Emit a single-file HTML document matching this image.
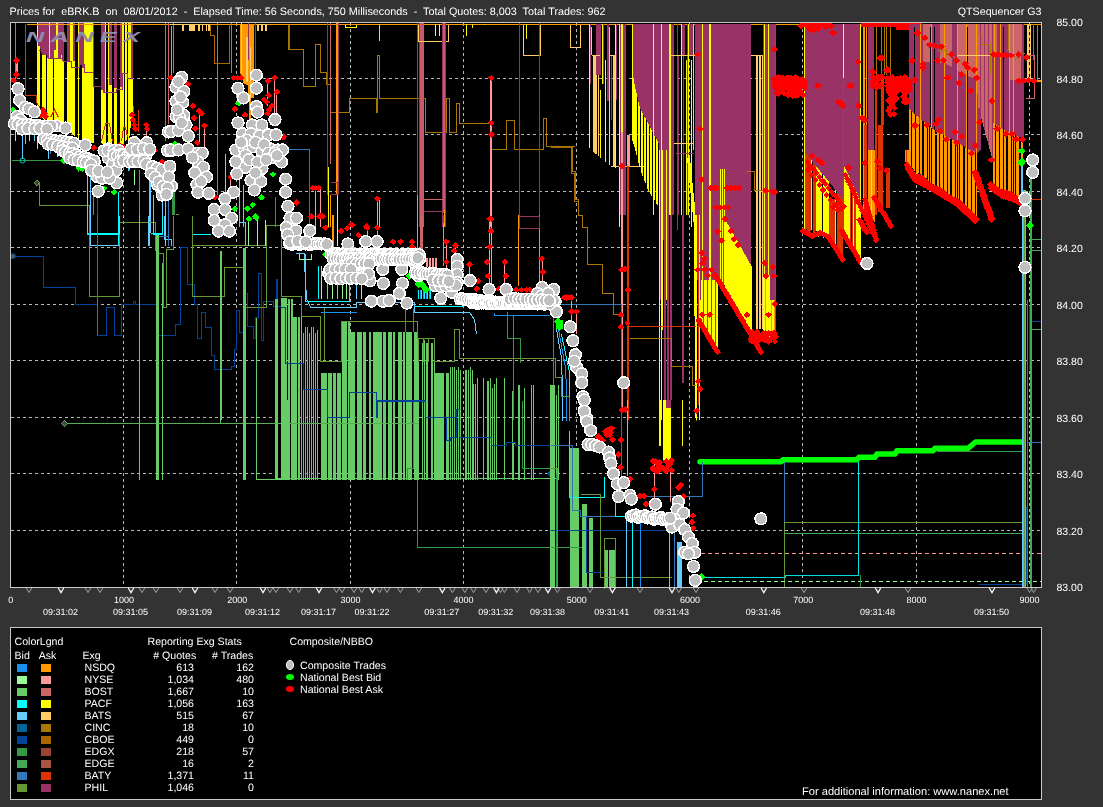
<!DOCTYPE html>
<html><head><meta charset="utf-8"><title>QTSequencer G3</title>
<style>
html,body{margin:0;padding:0;background:#333333;}
body{width:1103px;height:807px;overflow:hidden;position:relative;font-family:"Liberation Sans",sans-serif;}
svg{position:absolute;left:0;top:0;display:block}
text{font-family:"Liberation Sans",sans-serif;font-size:10.6px;fill:#ffffff;}
.xs text{font-size:9px}
.ys text{font-size:10.5px}
.t12{font-size:12px}
</style></head><body>
<svg width="1103" height="807" viewBox="0 0 1103 807" shape-rendering="crispEdges" text-rendering="geometricPrecision">
<rect x="0" y="0" width="1103" height="807" fill="#333333"/>
<rect x="10" y="22" width="1032" height="566" fill="#000000"/>
<rect x="10" y="627" width="1032" height="173" fill="#000000"/>
<g stroke="#b8b8b8" stroke-width="1" stroke-dasharray="3,3" fill="none">
<line x1="11" y1="78.5" x2="1041" y2="78.5"/>
<line x1="11" y1="134.5" x2="1041" y2="134.5"/>
<line x1="11" y1="191.5" x2="1041" y2="191.5"/>
<line x1="11" y1="247.5" x2="1041" y2="247.5"/>
<line x1="11" y1="304.5" x2="1041" y2="304.5"/>
<line x1="11" y1="360.5" x2="1041" y2="360.5"/>
<line x1="11" y1="417.5" x2="1041" y2="417.5"/>
<line x1="11" y1="473.5" x2="1041" y2="473.5"/>
<line x1="11" y1="530.5" x2="1041" y2="530.5"/>
<line x1="123.5" y1="23" x2="123.5" y2="587"/>
<line x1="236.5" y1="23" x2="236.5" y2="587"/>
<line x1="350.5" y1="23" x2="350.5" y2="587"/>
<line x1="463.5" y1="23" x2="463.5" y2="587"/>
<line x1="576.5" y1="23" x2="576.5" y2="587"/>
<line x1="689.5" y1="23" x2="689.5" y2="587"/>
<line x1="802.5" y1="23" x2="802.5" y2="587"/>
<line x1="916.5" y1="23" x2="916.5" y2="587"/>
<line x1="1029.5" y1="23" x2="1029.5" y2="587"/>
</g>

<rect x="37" y="23" width="1" height="88.8" fill="#ffff00"/>
<rect x="38" y="23" width="1" height="22.6" fill="#993366"/>
<rect x="38" y="45.6" width="1" height="67.9" fill="#ffff00"/>
<rect x="39" y="23" width="1" height="22.6" fill="#993366"/>
<rect x="39" y="45.6" width="1" height="68.9" fill="#ffff00"/>
<rect x="40" y="23" width="1" height="26.3" fill="#993366"/>
<rect x="41" y="23" width="1" height="30.1" fill="#993366"/>
<rect x="42" y="23" width="1" height="94.5" fill="#ffff00"/>
<rect x="42" y="23" width="1" height="30.1" fill="#993366"/>
<rect x="43" y="23" width="1" height="30.6" fill="#993366"/>
<rect x="43" y="53.6" width="1" height="64.9" fill="#ffff00"/>
<rect x="44" y="23" width="1" height="31.1" fill="#993366"/>
<rect x="44" y="54.1" width="1" height="65.4" fill="#ffff00"/>
<rect x="45" y="23" width="1" height="31.1" fill="#993366"/>
<rect x="45" y="54.1" width="1" height="66.1" fill="#ffff00"/>
<rect x="46" y="23" width="1" height="31.5" fill="#993366"/>
<rect x="47" y="23" width="1" height="34.8" fill="#993366"/>
<rect x="47" y="57.8" width="1" height="63.2" fill="#ffff00"/>
<rect x="48" y="23" width="1" height="34.8" fill="#993366"/>
<rect x="48" y="57.8" width="1" height="63.6" fill="#ffff00"/>
<rect x="49" y="23" width="1" height="98.8" fill="#ffff00"/>
<rect x="50" y="23" width="1" height="35.3" fill="#993366"/>
<rect x="50" y="58.3" width="1" height="63.9" fill="#ffff00"/>
<rect x="51" y="23" width="1" height="35.3" fill="#993366"/>
<rect x="51" y="58.3" width="1" height="64.3" fill="#ffff00"/>
<rect x="52" y="23" width="1" height="35.3" fill="#993366"/>
<rect x="52" y="58.3" width="1" height="64.7" fill="#ffff00"/>
<rect x="53" y="23" width="1" height="35.3" fill="#993366"/>
<rect x="54" y="23" width="1" height="27.3" fill="#993366"/>
<rect x="54" y="50.3" width="1" height="73.5" fill="#ffff00"/>
<rect x="55" y="23" width="1" height="27.3" fill="#993366"/>
<rect x="55" y="50.3" width="1" height="73.9" fill="#ffff00"/>
<rect x="56" y="23" width="1" height="101.4" fill="#ffff00"/>
<rect x="57" y="23" width="1" height="101.7" fill="#ffff00"/>
<rect x="58" y="23" width="1" height="35.3" fill="#993366"/>
<rect x="58" y="58.3" width="1" height="66.7" fill="#ffff00"/>
<rect x="59" y="23" width="1" height="35.3" fill="#993366"/>
<rect x="59" y="58.3" width="1" height="66.9" fill="#ffff00"/>
<rect x="60" y="23" width="1" height="35.3" fill="#993366"/>
<rect x="60" y="58.3" width="1" height="67.2" fill="#ffff00"/>
<rect x="61" y="23" width="1" height="32" fill="#993366"/>
<rect x="61" y="55" width="1" height="70.8" fill="#ffff00"/>
<rect x="62" y="23" width="1" height="38.1" fill="#993366"/>
<rect x="62" y="61.1" width="1" height="64.9" fill="#ffff00"/>
<rect x="63" y="23" width="1" height="38.1" fill="#993366"/>
<rect x="63" y="61.1" width="1" height="65.2" fill="#ffff00"/>
<rect x="67" y="23" width="1" height="38.1" fill="#993366"/>
<rect x="67" y="61.1" width="1" height="67.4" fill="#ffff00"/>
<rect x="68" y="23" width="1" height="38.1" fill="#993366"/>
<rect x="68" y="61.1" width="1" height="68.4" fill="#ffff00"/>
<rect x="69" y="23" width="1" height="38.1" fill="#993366"/>
<rect x="69" y="61.1" width="1" height="69.4" fill="#ffff00"/>
<rect x="70" y="23" width="1" height="108.5" fill="#ffff00"/>
<rect x="71" y="23" width="1" height="109.5" fill="#ffff00"/>
<rect x="72" y="23" width="1" height="110.5" fill="#ffff00"/>
<rect x="73" y="23" width="1" height="38.1" fill="#993366"/>
<rect x="73" y="61.1" width="1" height="73.4" fill="#ffff00"/>
<rect x="74" y="23" width="1" height="38.1" fill="#993366"/>
<rect x="74" y="61.1" width="1" height="74.4" fill="#ffff00"/>
<rect x="78" y="23" width="1" height="115.2" fill="#ffff00"/>
<rect x="79" y="23" width="1" height="41.4" fill="#993366"/>
<rect x="80" y="23" width="1" height="41.4" fill="#993366"/>
<rect x="81" y="23" width="1" height="41.4" fill="#993366"/>
<rect x="82" y="23" width="1" height="45.2" fill="#993366"/>
<rect x="82" y="68.2" width="1" height="72.6" fill="#ffff00"/>
<rect x="83" y="23" width="1" height="45.2" fill="#993366"/>
<rect x="83" y="68.2" width="1" height="73.2" fill="#ffff00"/>
<rect x="84" y="23" width="1" height="119" fill="#ffff00"/>
<rect x="85" y="23" width="1" height="119.7" fill="#ffff00"/>
<rect x="86" y="23" width="1" height="120" fill="#ffff00"/>
<rect x="87" y="23" width="1" height="120" fill="#ffff00"/>
<rect x="88" y="23" width="1" height="120" fill="#ffff00"/>
<rect x="89" y="23" width="1" height="120" fill="#ffff00"/>
<rect x="90" y="23" width="1" height="120" fill="#ffff00"/>
<rect x="91" y="23" width="1" height="120" fill="#ffcc88"/>
<rect x="92" y="23" width="1" height="120" fill="#ffff00"/>
<rect x="93" y="23" width="1" height="63.1" fill="#993366"/>
<rect x="93" y="86.1" width="1" height="56.9" fill="#ffff00"/>
<rect x="101" y="23" width="1" height="66.9" fill="#993366"/>
<rect x="101" y="89.9" width="1" height="53.4" fill="#ffff00"/>
<rect x="102" y="23" width="1" height="66.9" fill="#993366"/>
<rect x="102" y="89.9" width="1" height="53.6" fill="#ffff00"/>
<rect x="103" y="23" width="1" height="69.7" fill="#993366"/>
<rect x="103" y="92.7" width="1" height="51" fill="#ffff00"/>
<rect x="104" y="23" width="1" height="69.7" fill="#993366"/>
<rect x="104" y="92.7" width="1" height="51.2" fill="#ffff00"/>
<rect x="105" y="23" width="1" height="121.1" fill="#ffff00"/>
<rect x="108" y="23" width="1" height="121.7" fill="#ffff00"/>
<rect x="109" y="23" width="1" height="62.2" fill="#993366"/>
<rect x="109" y="85.2" width="1" height="59.7" fill="#ffff00"/>
<rect x="110" y="23" width="1" height="62.2" fill="#993366"/>
<rect x="110" y="85.2" width="1" height="59.8" fill="#ffff00"/>
<rect x="111" y="23" width="1" height="62.2" fill="#993366"/>
<rect x="111" y="85.2" width="1" height="59.8" fill="#ffff00"/>
<rect x="114" y="23" width="1" height="65" fill="#993366"/>
<rect x="114" y="88" width="1" height="57" fill="#ffff00"/>
<rect x="115" y="23" width="1" height="65" fill="#993366"/>
<rect x="115" y="88" width="1" height="57" fill="#ffff00"/>
<rect x="116" y="23" width="1" height="65" fill="#993366"/>
<rect x="116" y="88" width="1" height="57" fill="#ffff00"/>
<rect x="120" y="23" width="1" height="64.1" fill="#993366"/>
<rect x="120" y="87.1" width="1" height="57.9" fill="#ffff00"/>
<rect x="121" y="23" width="1" height="64.1" fill="#993366"/>
<rect x="121" y="87.1" width="1" height="57.5" fill="#ffff00"/>
<rect x="122" y="23" width="1" height="120.8" fill="#ffff00"/>
<rect x="123" y="23" width="1" height="119.9" fill="#ffff00"/>
<rect x="125" y="23" width="1" height="118.2" fill="#ffff00"/>
<rect x="126" y="23" width="1" height="117.4" fill="#ffff00"/>
<rect x="128" y="23" width="1" height="117" fill="#ffff00"/>
<rect x="129" y="23" width="1" height="113" fill="#ffff00"/>
<rect x="130" y="23" width="1" height="105" fill="#ffff00"/>
<rect x="131" y="23" width="1" height="55.6" fill="#993366"/>
<rect x="131" y="78.6" width="1" height="41.4" fill="#ffff00"/>
<rect x="132" y="23" width="1" height="55.6" fill="#993366"/>
<rect x="132" y="78.6" width="1" height="33.4" fill="#ffff00"/>
<polyline points="38.5,50.5 42.5,50.5 42.5,54.5 48.5,54.5 48.5,58.5 58.5,58.5 58.5,58.5 63.5,58.5 63.5,61.5 71.5,61.5 71.5,67.5 79.5,67.5 79.5,64.5 84.5,64.5 84.5,72.5 93.5,72.5 93.5,86.5 103.5,86.5 103.5,92.5 116.5,92.5 116.5,89.5 122.5,89.5 122.5,73.5 127.5,73.5 127.5,78.5 132.5,78.5 132.5,78.5" fill="none" stroke="#993366" stroke-width="1"/>
<g transform="translate(26,41.5) scale(1.75,1)" shape-rendering="auto"><text x="0" y="0" style="font-size:14.5px;font-style:italic;font-weight:bold;fill:#8c8cae;letter-spacing:3.6px">NANEX</text></g>
<rect x="27" y="24" width="1014" height="1" fill="#ff9900"/>
<rect x="15" y="23" width="1" height="61" fill="#cc6666"/>
<rect x="165" y="23" width="1" height="118.4" fill="#cc6666"/>
<rect x="168" y="23" width="1" height="100.6" fill="#cc6666"/>
<rect x="173" y="23" width="1" height="49.8" fill="#cc6666"/>
<rect x="217" y="23" width="1" height="171.8" fill="#cc6666"/>
<rect x="231" y="23" width="1" height="49.8" fill="#cc6666"/>
<polyline points="25.5,23.5 25.5,95.5 36.5,95.5 36.5,102.5 40.5,108.5" fill="none" stroke="#dd3300" stroke-width="1"/>
<polyline points="101.5,141.5 105.5,123.5 109.5,123.5 112.5,141.5" fill="none" stroke="#dd3300" stroke-width="1"/>
<polyline points="121.5,141.5 123.5,127.5 125.5,127.5 127.5,137.5" fill="none" stroke="#dd3300" stroke-width="1"/>
<polyline points="50.5,117.5 54.5,109.5 58.5,117.5" fill="none" stroke="#dd3300" stroke-width="1"/>
<polyline points="133.5,105.5 133.5,128.5" fill="none" stroke="#dd3300" stroke-width="1"/>
<polyline points="138.5,109.5 138.5,131.5" fill="none" stroke="#dd3300" stroke-width="1"/>
<rect x="16" y="61" width="2" height="14" fill="#ff9999"/>
<polyline points="210.5,24.5 210.5,35.5 214.5,35.5 214.5,63.5 229.5,63.5 229.5,24.5" fill="none" stroke="#aa6600" stroke-width="1"/>
<polyline points="289.5,24.5 289.5,49.5" fill="none" stroke="#aa6600" stroke-width="1"/>
<rect x="170.4" y="24" width="39.4" height="1" fill="#ffcc66"/>
<rect x="182" y="24" width="2" height="6.8" fill="#ffcc66"/>
<rect x="185.6" y="24" width="0.8" height="6.8" fill="#ffcc66"/>
<rect x="189.4" y="24" width="5.4" height="6.8" fill="#ffcc66"/>
<rect x="198.3" y="24" width="1.6" height="6.8" fill="#ffcc66"/>
<rect x="202.4" y="24" width="1" height="6.8" fill="#ffcc66"/>
<rect x="205.8" y="24" width="1.4" height="6.8" fill="#ffcc66"/>
<rect x="208.2" y="24" width="1.6" height="6.8" fill="#ffcc66"/>
<rect x="257.4" y="24" width="1.6" height="6.8" fill="#ffcc66"/>
<rect x="260.8" y="24" width="2.3" height="6.8" fill="#ffcc66"/>
<rect x="264.9" y="24" width="2" height="6.8" fill="#ffcc66"/>
<rect x="257.4" y="24" width="9.5" height="1" fill="#ffcc66"/>
<rect x="171" y="26" width="1" height="58" fill="#ff9900"/>
<polygon points="239.9,24 253.9,24 253.9,98.2 251.4,98.2 251.4,118.5 248.8,118.5 248.8,98.2 247.6,85.5 243.7,83 239.9,72.8" fill="#ff9900"/>
<rect x="241" y="23" width="1" height="49.8" fill="#ffcc66"/>
<rect x="246" y="37.2" width="2" height="44.5" fill="#ffcc66"/>
<rect x="250" y="47.4" width="1" height="50.8" fill="#ffcc66"/>
<rect x="255" y="23" width="1" height="47.3" fill="#993366"/>
<rect x="248" y="23" width="1" height="37.1" fill="#993366"/>
<rect x="15" y="126.2" width="1" height="15.2" fill="#98fb98"/>
<rect x="22" y="131.2" width="1" height="27.9" fill="#66ccff"/>
<rect x="25" y="133.8" width="1" height="10.2" fill="#00ffff"/>
<rect x="29" y="133.8" width="1" height="7.6" fill="#98fb98"/>
<rect x="34" y="133.8" width="1" height="7.6" fill="#66ccff"/>
<rect x="37" y="136.3" width="1" height="12.7" fill="#98fb98"/>
<rect x="48" y="144" width="1" height="15.2" fill="#66ccff"/>
<rect x="50" y="149" width="1" height="5.1" fill="#3377bb"/>
<rect x="57" y="149" width="1" height="7.6" fill="#98fb98"/>
<rect x="64" y="159.2" width="1" height="5.1" fill="#339944"/>
<rect x="78" y="166.8" width="1" height="5.1" fill="#44aa55"/>
<rect x="82" y="168.1" width="1" height="3.8" fill="#339944"/>
<polyline points="11.5,160.5 60.5,160.5" fill="none" stroke="#339944" stroke-width="1"/>
<circle cx="22.5" cy="160.5" r="2.5" fill="none" stroke="#00cccc" shape-rendering="auto"/>
<path d="M34.0 182.8l3 -3l3 3l-3 3z" fill="#444" stroke="#669933" stroke-width="1"/>
<polyline points="37.5,183.5 39.5,183.5 39.5,205.5 89.5,205.5 89.5,250.5" fill="none" stroke="#669933" stroke-width="1"/>
<polyline points="87.5,166.5 87.5,233.5 118.5,233.5 118.5,191.5" fill="none" stroke="#00ffff" stroke-width="1"/>
<rect x="118" y="233.2" width="1" height="12.3" fill="#00ffff"/>
<polyline points="90.5,173.5 90.5,245.5 118.5,245.5" fill="none" stroke="#66ccff" stroke-width="1"/>
<rect x="93" y="196.2" width="1" height="18.8" fill="#44aa55"/>
<rect x="97" y="196.2" width="1" height="18.8" fill="#006699"/>
<polyline points="119.5,250.5 119.5,222.5 155.5,222.5 155.5,250.5" fill="none" stroke="#669933" stroke-width="1"/>
<rect x="139" y="170" width="1" height="45" fill="#44aa55"/>
<rect x="134" y="170" width="1" height="15.4" fill="#98fb98"/>
<rect x="149" y="174.7" width="1" height="70.9" fill="#00ffff"/>
<rect x="150" y="180.8" width="1" height="52.4" fill="#66ccff"/>
<rect x="153" y="194.7" width="1" height="38.5" fill="#00ffff"/>
<rect x="162" y="200.9" width="1" height="32.4" fill="#66ccff"/>
<rect x="165" y="200.9" width="1" height="44.7" fill="#00ffff"/>
<rect x="168" y="200.9" width="1" height="44.7" fill="#3377bb"/>
<polyline points="150.5,233.5 162.5,233.5" fill="none" stroke="#00ffff" stroke-width="1"/>
<polyline points="155.5,236.5 168.5,236.5" fill="none" stroke="#66ccff" stroke-width="1"/>
<rect x="172.1" y="191.6" width="3.1" height="23.4" fill="#339944"/>
<polyline points="175.5,214.5 178.5,214.5" fill="none" stroke="#669933" stroke-width="1"/>
<rect x="78" y="166.2" width="1" height="4.6" fill="#66cc66"/>
<rect x="80" y="166.2" width="1" height="4.6" fill="#66cc66"/>
<rect x="85" y="166.2" width="1" height="4.6" fill="#98fb98"/>
<rect x="129" y="166.2" width="1" height="4.6" fill="#3377bb"/>
<rect x="128" y="166.2" width="1" height="4.6" fill="#66ccff"/>
<rect x="239" y="179.5" width="1" height="47.5" fill="#66ccff"/>
<rect x="243" y="184.6" width="1" height="42.4" fill="#00ffff"/>
<rect x="275" y="197.3" width="1" height="29.7" fill="#339944"/>
<rect x="146" y="124.9" width="1" height="16.5" fill="#ff9999"/>
<rect x="267" y="80.9" width="1" height="24.9" fill="#ff9999"/>
<rect x="274" y="77.9" width="1" height="40.7" fill="#ff9999"/>
<rect x="276" y="91.9" width="1" height="26.7" fill="#ff9999"/>
<rect x="199" y="113.5" width="1" height="30.5" fill="#ff9999"/>
<rect x="204" y="125.7" width="1" height="23.4" fill="#ff9999"/>
<rect x="225" y="154.1" width="1" height="45.7" fill="#ff9999"/>
<rect x="230" y="177" width="1" height="22.9" fill="#ff9999"/>
<polyline points="288.5,24.5 288.5,49.5 303.5,49.5 303.5,86.5 315.5,86.5 315.5,44.5 320.5,44.5 320.5,72.5 326.5,72.5 326.5,84.5 330.5,84.5 330.5,112.5 349.5,112.5 349.5,98.5 376.5,98.5 376.5,112.5 377.5,112.5 377.5,55.5 379.5,55.5 379.5,98.5 425.5,98.5 425.5,132.5 446.5,132.5 446.5,98.5 449.5,98.5 449.5,132.5 456.5,132.5 456.5,103.5 459.5,103.5 459.5,123.5 490.5,123.5 490.5,149.5 506.5,149.5 506.5,120.5 514.5,120.5 514.5,149.5 543.5,149.5 543.5,118.5 546.5,118.5 546.5,146.5 574.5,146.5" fill="none" stroke="#aa7700" stroke-width="1"/>
<rect x="327" y="23" width="1" height="171.8" fill="#993366"/>
<rect x="330" y="23" width="1" height="141.3" fill="#cc6666"/>
<rect x="336" y="23" width="2" height="171.8" fill="#ff9900"/>
<rect x="338" y="23" width="1" height="171.8" fill="#993366"/>
<rect x="328" y="166.8" width="1" height="60.2" fill="#ffff00"/>
<rect x="330" y="194.8" width="1" height="32.3" fill="#ff9900"/>
<rect x="337" y="194.8" width="1" height="32.3" fill="#ffff00"/>
<polyline points="330.5,182.5 337.5,182.5 337.5,194.5 330.5,194.5" fill="none" stroke="#993366" stroke-width="1"/>
<rect x="417" y="23" width="1" height="171.8" fill="#993366"/>
<rect x="419.2" y="23" width="4.3" height="204" fill="#c8586a"/>
<rect x="419" y="23" width="1" height="204" fill="#993366"/>
<polyline points="418.5,24.5 418.5,41.5 448.5,41.5 448.5,24.5" fill="none" stroke="#ffcc66" stroke-width="1"/>
<rect x="442.6" y="23" width="3" height="189.5" fill="#c8586a"/>
<rect x="445" y="23" width="1" height="204" fill="#993366"/>
<rect x="442" y="23" width="1" height="204" fill="#993366"/>
<rect x="417" y="194.8" width="1" height="32.3" fill="#ff9900"/>
<rect x="444" y="210" width="1" height="17" fill="#ff9900"/>
<polyline points="423.5,199.5 442.5,199.5" fill="none" stroke="#cc6666" stroke-width="1"/>
<polyline points="423.5,211.5 442.5,211.5" fill="none" stroke="#993366" stroke-width="1"/>
<polyline points="345.5,24.5 345.5,27.5 356.5,27.5 356.5,24.5" fill="none" stroke="#ffff00" stroke-width="1"/>
<rect x="435" y="24" width="1" height="12" fill="#ffff00"/>
<rect x="439" y="24" width="1" height="12" fill="#ffff00"/>
<rect x="466" y="24" width="1" height="12" fill="#ffff00"/>
<rect x="472" y="24" width="1" height="3.6" fill="#ffff00"/>
<rect x="526" y="24" width="1" height="14.5" fill="#ffff00"/>
<rect x="484" y="24" width="1" height="0.5" fill="#ffff00"/>
<rect x="379" y="24" width="1" height="17.1" fill="#ffcc66"/>
<polyline points="523.5,24.5 523.5,55.5 540.5,55.5 540.5,24.5" fill="none" stroke="#ffcc66" stroke-width="1"/>
<rect x="519" y="23" width="1" height="204" fill="#993366"/>
<rect x="539" y="23" width="1" height="204" fill="#993366"/>
<polyline points="519.5,216.5 539.5,216.5" fill="none" stroke="#993366" stroke-width="1"/>
<rect x="490" y="77.9" width="2" height="149.1" fill="#ff9999"/>
<polyline points="287.5,149.5 309.5,149.5 309.5,227.5" fill="none" stroke="#3377bb" stroke-width="1"/>
<rect x="315" y="187.9" width="1" height="39.1" fill="#ff9999"/>
<rect x="320" y="187.9" width="1" height="39.1" fill="#ff9999"/>
<rect x="377" y="198.6" width="1" height="28.5" fill="#ff9999"/>
<rect x="379" y="198.6" width="1" height="28.5" fill="#ff9999"/>
<polyline points="13.5,256.5 43.5,256.5 43.5,287.5 75.5,287.5 75.5,304.5 97.5,304.5 97.5,335.5 106.5,335.5 106.5,307.5 114.5,307.5 114.5,335.5 121.5,335.5 121.5,304.5 133.5,304.5 133.5,301.5 135.5,301.5 135.5,304.5 158.5,304.5 158.5,335.5 175.5,335.5 175.5,324.5 180.5,324.5 180.5,247.5 187.5,247.5 187.5,284.5 194.5,284.5 194.5,304.5 197.5,304.5 197.5,338.5 201.5,338.5 201.5,312.5 205.5,312.5 205.5,327.5 211.5,327.5 211.5,355.5 214.5,355.5 214.5,369.5 231.5,369.5 231.5,366.5 234.5,366.5 234.5,349.5 236.5,349.5 236.5,310.5 239.5,310.5 239.5,332.5 244.5,332.5 244.5,293.5 247.5,293.5 247.5,326.5 253.5,326.5 253.5,338.5 255.5,338.5 255.5,317.5 258.5,317.5 258.5,273.5 261.5,273.5 261.5,340.5 263.5,340.5 263.5,301.5 273.5,301.5 273.5,306.5 276.5,306.5 276.5,279.5 277.5,279.5 277.5,306.5 284.5,306.5 284.5,324.5 286.5,324.5 286.5,363.5" fill="none" stroke="#004499" stroke-width="1"/>
<circle cx="13.0" cy="256.2" r="2.5" fill="#555" stroke="#004499" shape-rendering="auto"/>
<polyline points="89.5,215.5 89.5,296.5 119.5,296.5 119.5,222.5 154.5,222.5" fill="none" stroke="#669933" stroke-width="1"/>
<polyline points="89.5,245.5 119.5,245.5" fill="none" stroke="#669933" stroke-width="1"/>
<polyline points="192.5,215.5 192.5,296.5 224.5,296.5 224.5,267.5 245.5,267.5 245.5,307.5 266.5,307.5 266.5,225.5 281.5,225.5 281.5,296.5 289.5,296.5" fill="none" stroke="#669933" stroke-width="1"/>
<polyline points="192.5,245.5 266.5,245.5" fill="none" stroke="#669933" stroke-width="1"/>
<polyline points="156.5,253.5 163.5,253.5 163.5,307.5 166.5,307.5 166.5,249.5 173.5,249.5 173.5,215.5" fill="none" stroke="#669933" stroke-width="1"/>
<polyline points="87.5,215.5 87.5,234.5 119.5,234.5 119.5,215.5" fill="none" stroke="#00ffff" stroke-width="1"/>
<polyline points="90.5,215.5 90.5,245.5 119.5,245.5" fill="none" stroke="#66ccff" stroke-width="1"/>
<rect x="97" y="215" width="1" height="120.2" fill="#3377bb"/>
<polyline points="148.5,215.5 148.5,245.5" fill="none" stroke="#66ccff" stroke-width="1"/>
<polyline points="153.5,215.5 153.5,234.5 162.5,234.5 162.5,215.5" fill="none" stroke="#00ffff" stroke-width="1"/>
<polyline points="164.5,215.5 164.5,239.5 171.5,239.5 171.5,245.5" fill="none" stroke="#66ccff" stroke-width="1"/>
<polyline points="157.5,236.5 168.5,236.5 168.5,245.5" fill="none" stroke="#3377bb" stroke-width="1"/>
<polyline points="192.5,234.5 210.5,234.5" fill="none" stroke="#00ffff" stroke-width="1"/>
<polyline points="238.5,222.5 245.5,222.5 245.5,245.5" fill="none" stroke="#66ccff" stroke-width="1"/>
<rect x="248" y="220.1" width="1" height="25.4" fill="#98fb98"/>
<rect x="257" y="220.1" width="1" height="25.4" fill="#98fb98"/>
<rect x="265" y="220.1" width="1" height="25.4" fill="#98fb98"/>
<rect x="139" y="215" width="1" height="205" fill="#66cc66"/>
<rect x="155.6" y="235.3" width="3.3" height="184.7" fill="#66cc66"/>
<rect x="162" y="263.3" width="1" height="156.8" fill="#66cc66"/>
<rect x="220" y="250.6" width="2" height="169.5" fill="#66cc66"/>
<rect x="243.2" y="247.5" width="2.5" height="172.5" fill="#66cc66"/>
<rect x="256" y="317.9" width="1" height="102.1" fill="#66cc66"/>
<rect x="275" y="298.8" width="3" height="180.7" fill="#66cc66"/>
<rect x="281" y="297.6" width="6" height="181.9" fill="#66cc66"/>
<rect x="288" y="298.8" width="2" height="180.7" fill="#66cc66"/>
<rect x="291" y="298.8" width="2" height="180.7" fill="#66cc66"/>
<rect x="293" y="316.6" width="4" height="162.9" fill="#66cc66"/>
<rect x="298" y="316.6" width="2" height="162.9" fill="#66cc66"/>
<rect x="301" y="316.6" width="1" height="162.9" fill="#66cc66"/>
<rect x="303" y="332.8" width="1" height="146.7" fill="#66cc66"/>
<rect x="305" y="326.8" width="1" height="152.7" fill="#66cc66"/>
<rect x="307" y="326.8" width="1" height="152.7" fill="#66cc66"/>
<rect x="309" y="332.8" width="1" height="146.7" fill="#66cc66"/>
<rect x="311" y="326.8" width="1" height="152.7" fill="#66cc66"/>
<rect x="313" y="326.8" width="1" height="152.7" fill="#66cc66"/>
<rect x="315" y="332.8" width="1" height="146.7" fill="#66cc66"/>
<rect x="317" y="329.8" width="1" height="149.7" fill="#66cc66"/>
<rect x="321" y="372.5" width="6" height="107" fill="#66cc66"/>
<rect x="328" y="372.5" width="4" height="107" fill="#66cc66"/>
<rect x="333" y="372.5" width="3" height="107" fill="#66cc66"/>
<rect x="337" y="372.5" width="4" height="107" fill="#66cc66"/>
<rect x="342" y="321.7" width="5" height="157.8" fill="#66cc66"/>
<rect x="348" y="321.7" width="2" height="157.8" fill="#66cc66"/>
<rect x="350" y="331.9" width="5" height="147.6" fill="#66cc66"/>
<rect x="357" y="331.9" width="5" height="147.6" fill="#66cc66"/>
<rect x="363" y="331.9" width="3" height="147.6" fill="#66cc66"/>
<rect x="369" y="331.9" width="2" height="147.6" fill="#66cc66"/>
<rect x="373" y="331.9" width="9" height="147.6" fill="#66cc66"/>
<rect x="383" y="331.9" width="3" height="147.6" fill="#66cc66"/>
<rect x="388" y="331.9" width="4" height="147.6" fill="#66cc66"/>
<rect x="393" y="331.9" width="2" height="147.6" fill="#66cc66"/>
<rect x="398" y="331.9" width="4" height="147.6" fill="#66cc66"/>
<rect x="403" y="331.9" width="2" height="147.6" fill="#66cc66"/>
<rect x="406" y="331.9" width="6" height="147.6" fill="#66cc66"/>
<rect x="414" y="331.9" width="4" height="147.6" fill="#66cc66"/>
<rect x="418" y="339.5" width="1" height="140" fill="#66cc66"/>
<rect x="422" y="342.5" width="1" height="137" fill="#66cc66"/>
<rect x="424" y="339.5" width="1" height="140" fill="#66cc66"/>
<rect x="426" y="342.5" width="2" height="137" fill="#66cc66"/>
<rect x="431" y="342.5" width="2" height="137" fill="#66cc66"/>
<rect x="434" y="342.5" width="1" height="137" fill="#66cc66"/>
<rect x="435" y="372.5" width="9" height="107" fill="#66cc66"/>
<rect x="446" y="372.5" width="3" height="107" fill="#66cc66"/>
<rect x="450" y="367.4" width="1" height="112.1" fill="#66cc66"/>
<rect x="452" y="367.4" width="1" height="112.1" fill="#66cc66"/>
<rect x="454" y="367.4" width="1" height="112.1" fill="#66cc66"/>
<rect x="456" y="370.4" width="1" height="109.1" fill="#66cc66"/>
<rect x="458" y="367.4" width="1" height="112.1" fill="#66cc66"/>
<rect x="460" y="370.4" width="1" height="109.1" fill="#66cc66"/>
<rect x="465" y="370.4" width="2" height="109.1" fill="#66cc66"/>
<rect x="468" y="370.4" width="1" height="109.1" fill="#66cc66"/>
<rect x="470" y="367.4" width="1" height="112.1" fill="#66cc66"/>
<rect x="472" y="370.4" width="1" height="109.1" fill="#66cc66"/>
<rect x="473" y="383.6" width="1" height="95.9" fill="#66cc66"/>
<rect x="475" y="383.6" width="1" height="95.9" fill="#66cc66"/>
<rect x="477" y="377.6" width="1" height="101.9" fill="#66cc66"/>
<rect x="483" y="377.6" width="1" height="101.9" fill="#66cc66"/>
<rect x="487" y="380.6" width="2" height="98.9" fill="#66cc66"/>
<rect x="490" y="377.6" width="1" height="101.9" fill="#66cc66"/>
<rect x="492" y="387.6" width="1" height="91.9" fill="#66cc66"/>
<rect x="494" y="383.6" width="1" height="95.9" fill="#66cc66"/>
<rect x="496" y="377.6" width="1" height="101.9" fill="#66cc66"/>
<rect x="504" y="377.6" width="1" height="101.9" fill="#66cc66"/>
<rect x="512" y="391.2" width="1" height="88.3" fill="#66cc66"/>
<rect x="518" y="385.2" width="2" height="94.3" fill="#66cc66"/>
<rect x="524" y="388.2" width="1" height="91.3" fill="#66cc66"/>
<rect x="531" y="385.2" width="1" height="94.3" fill="#66cc66"/>
<rect x="533" y="385.2" width="1" height="94.3" fill="#66cc66"/>
<rect x="553" y="388.2" width="2" height="91.3" fill="#66cc66"/>
<rect x="556" y="395.2" width="1" height="84.3" fill="#66cc66"/>
<rect x="558" y="385.2" width="1" height="94.3" fill="#66cc66"/>
<polyline points="513.5,479.5 513.5,443.5 515.5,443.5" fill="none" stroke="#66cc66" stroke-width="1"/>
<rect x="274.9" y="478" width="282" height="1" fill="#66cc66"/>
<polyline points="280.5,296.5 301.5,296.5 301.5,316.5 320.5,316.5 320.5,361.5 341.5,361.5 341.5,321.5 417.5,321.5 417.5,338.5 434.5,338.5 434.5,361.5 454.5,361.5 454.5,329.5 459.5,329.5 459.5,358.5 555.5,358.5 555.5,377.5 559.5,377.5" fill="none" stroke="#669933" stroke-width="1"/>
<polyline points="324.5,307.5 324.5,361.5" fill="none" stroke="#669933" stroke-width="1"/>
<polyline points="418.5,338.5 418.5,361.5" fill="none" stroke="#669933" stroke-width="1"/>
<polyline points="423.5,338.5 423.5,361.5" fill="none" stroke="#669933" stroke-width="1"/>
<polyline points="428.5,338.5 428.5,361.5" fill="none" stroke="#669933" stroke-width="1"/>
<polyline points="280.5,307.5 285.5,307.5 285.5,363.5 303.5,363.5 303.5,389.5 327.5,389.5 327.5,417.5 349.5,417.5 349.5,392.5 376.5,392.5 376.5,417.5 377.5,417.5 377.5,400.5 425.5,400.5 425.5,417.5 455.5,417.5 455.5,409.5 459.5,409.5 459.5,420.5" fill="none" stroke="#004499" stroke-width="1"/>
<polyline points="295.5,253.5 304.5,253.5 304.5,263.5 306.5,298.5 310.5,307.5 356.5,307.5 356.5,302.5 414.5,302.5 414.5,312.5 469.5,312.5 474.5,319.5 476.5,334.5" fill="none" stroke="#66ccff" stroke-width="1"/>
<polyline points="305.5,253.5 305.5,301.5 349.5,301.5 349.5,253.5" fill="none" stroke="#00ffff" stroke-width="1"/>
<polyline points="320.5,312.5 356.5,312.5" fill="none" stroke="#1890f0" stroke-width="1"/>
<polyline points="299.5,253.5 299.5,259.5 311.5,259.5 311.5,253.5" fill="none" stroke="#98fb98" stroke-width="1"/>
<rect x="318" y="265.8" width="1" height="33" fill="#00ffff"/>
<rect x="321" y="265.8" width="1" height="33" fill="#98fb98"/>
<rect x="327" y="265.8" width="1" height="33" fill="#66ccff"/>
<rect x="332" y="265.8" width="1" height="33" fill="#98fb98"/>
<rect x="337" y="265.8" width="1" height="33" fill="#00ffff"/>
<rect x="342" y="265.8" width="1" height="33" fill="#98fb98"/>
<rect x="346" y="265.8" width="1" height="33" fill="#98fb98"/>
<rect x="356" y="265.8" width="1" height="33" fill="#66ccff"/>
<rect x="361" y="265.8" width="1" height="33" fill="#98fb98"/>
<polyline points="494.5,312.5 494.5,315.5 549.5,315.5" fill="none" stroke="#1890f0" stroke-width="1"/>
<polyline points="414.5,306.5 462.5,306.5" fill="none" stroke="#00ffff" stroke-width="1"/>
<rect x="418" y="289.9" width="1" height="8.9" fill="#00ffff"/>
<rect x="420" y="289.9" width="1" height="8.9" fill="#1890f0"/>
<rect x="421" y="289.9" width="1" height="8.9" fill="#00ffff"/>
<rect x="423" y="289.9" width="1" height="8.9" fill="#1890f0"/>
<rect x="424" y="289.9" width="1" height="8.9" fill="#00ffff"/>
<rect x="426" y="289.9" width="1" height="8.9" fill="#1890f0"/>
<rect x="427" y="289.9" width="1" height="8.9" fill="#00ffff"/>
<rect x="429" y="289.9" width="1" height="8.9" fill="#1890f0"/>
<rect x="430" y="289.9" width="1" height="8.9" fill="#00ffff"/>
<rect x="405" y="306.5" width="1" height="25.4" fill="#339944"/>
<rect x="413" y="309" width="1" height="22.9" fill="#339944"/>
<polyline points="507.5,311.5 507.5,338.5 520.5,338.5 520.5,362.5" fill="none" stroke="#339944" stroke-width="1"/>
<rect x="513" y="315.4" width="1" height="104.7" fill="#339944"/>
<rect x="553" y="316.6" width="1" height="103.4" fill="#339944"/>
<rect x="417" y="215" width="1" height="38.1" fill="#ff9900"/>
<rect x="443" y="215" width="1" height="50.8" fill="#ff9900"/>
<rect x="518" y="215" width="1" height="71.1" fill="#ff9900"/>
<rect x="539" y="215" width="1" height="71.1" fill="#ff9900"/>
<polyline points="519.5,215.5 519.5,228.5 539.5,228.5 539.5,215.5" fill="none" stroke="#993366" stroke-width="1"/>
<rect x="426" y="258.2" width="1" height="8.9" fill="#ff9999"/>
<rect x="427" y="258.2" width="1" height="8.9" fill="#ff9999"/>
<rect x="429" y="258.2" width="1" height="8.9" fill="#ff9999"/>
<rect x="430" y="258.2" width="1" height="8.9" fill="#ff9999"/>
<rect x="432" y="258.2" width="1" height="8.9" fill="#ff9999"/>
<rect x="433" y="258.2" width="1" height="8.9" fill="#ff9999"/>
<rect x="435" y="258.2" width="1" height="8.9" fill="#ff9999"/>
<rect x="436" y="258.2" width="1" height="8.9" fill="#ff9999"/>
<rect x="420" y="215" width="3" height="38.1" fill="#cc6666"/>
<rect x="443" y="215" width="1" height="7.6" fill="#993366"/>
<rect x="332" y="215" width="2" height="33" fill="#ff9900"/>
<rect x="337" y="215" width="1" height="30.5" fill="#ffff00"/>
<rect x="367" y="227.7" width="1" height="10.2" fill="#ff9999"/>
<rect x="377" y="227.7" width="1" height="10.2" fill="#ff9999"/>
<rect x="446" y="241.7" width="1" height="36.8" fill="#ff9999"/>
<rect x="455" y="245.5" width="1" height="12.7" fill="#ff9999"/>
<rect x="469" y="264.5" width="1" height="11.4" fill="#ff9999"/>
<rect x="504" y="262" width="1" height="21.6" fill="#ff9999"/>
<rect x="542" y="258.7" width="1" height="22.4" fill="#ff9999"/>
<rect x="489" y="218.8" width="1" height="64.8" fill="#ff9999"/>
<rect x="491" y="218.8" width="1" height="64.8" fill="#ff9999"/>
<polyline points="64.5,423.5 418.5,423.5" fill="none" stroke="#55b055" stroke-width="1"/>
<path d="M61.6 423.4l3 -3l3 3l-3 3z" fill="#444" stroke="#55b055" stroke-width="1"/>
<rect x="220" y="400" width="1" height="23.4" fill="#66cc66"/>
<rect x="139" y="400" width="1" height="79.5" fill="#66cc66"/>
<rect x="156" y="400" width="3" height="79.5" fill="#66cc66"/>
<rect x="162" y="400" width="1" height="79.5" fill="#66cc66"/>
<rect x="243" y="400" width="3" height="79.5" fill="#66cc66"/>
<rect x="256" y="400" width="1" height="79.5" fill="#66cc66"/>
<polyline points="256.5,479.5 280.5,479.5" fill="none" stroke="#66cc66" stroke-width="1"/>
<rect x="280.6" y="400" width="9.4" height="79.5" fill="#66cc66"/>
<polyline points="417.5,479.5 417.5,547.5 559.5,547.5" fill="none" stroke="#339944" stroke-width="1"/>
<rect x="556" y="473.7" width="1" height="114.3" fill="#339944"/>
<polyline points="522.5,400.5 522.5,468.5 556.5,468.5" fill="none" stroke="#339944" stroke-width="1"/>
<polyline points="407.5,479.5 407.5,468.5 413.5,468.5 413.5,400.5" fill="none" stroke="#339944" stroke-width="1"/>
<polyline points="327.5,400.5 327.5,417.5 349.5,417.5 349.5,400.5" fill="none" stroke="#004499" stroke-width="1"/>
<polyline points="376.5,417.5 376.5,401.5 425.5,401.5 425.5,417.5 446.5,417.5 446.5,440.5 450.5,440.5 450.5,437.5 456.5,437.5 456.5,409.5 459.5,409.5 459.5,437.5 491.5,437.5 491.5,445.5 506.5,445.5 506.5,442.5 515.5,442.5 515.5,445.5 559.5,445.5" fill="none" stroke="#004499" stroke-width="1"/>
<polyline points="550.5,473.5 551.5,473.5 551.5,530.5 559.5,530.5" fill="none" stroke="#006699" stroke-width="1"/>
<path d="M547.6 473.7l3 -3l3 3l-3 3z" fill="#335" stroke="#006699" stroke-width="1"/>
<rect x="589" y="24" width="1" height="123.5" fill="#ffff00"/>
<rect x="590" y="24" width="1" height="60" fill="#993366"/>
<rect x="591" y="27" width="1" height="28" fill="#ffcc66"/>
<rect x="593" y="55" width="1" height="96.5" fill="#ffcc66"/>
<rect x="594" y="55" width="1" height="97.5" fill="#ffcc66"/>
<rect x="595" y="55" width="1" height="98.5" fill="#ffcc66"/>
<rect x="596" y="24" width="1" height="51" fill="#993366"/>
<rect x="596" y="75" width="1" height="79.4" fill="#ffcc66"/>
<rect x="597" y="24" width="1" height="51" fill="#993366"/>
<rect x="598" y="24" width="1" height="51" fill="#993366"/>
<rect x="598" y="75" width="1" height="81.1" fill="#ffcc66"/>
<rect x="599" y="24" width="1" height="51" fill="#993366"/>
<rect x="600" y="24" width="1" height="51" fill="#993366"/>
<rect x="600" y="90" width="1" height="67.8" fill="#ffff00"/>
<rect x="602" y="24" width="1" height="60" fill="#ffff00"/>
<rect x="603" y="24" width="1" height="60" fill="#993366"/>
<rect x="605" y="60" width="1" height="101.9" fill="#ffff00"/>
<rect x="607" y="24" width="1" height="77" fill="#993366"/>
<rect x="608" y="24" width="1" height="77" fill="#993366"/>
<rect x="609" y="27" width="1" height="137.8" fill="#ffcc66"/>
<rect x="611" y="55" width="1" height="65" fill="#993366"/>
<rect x="613" y="55" width="1" height="111.8" fill="#ffcc66"/>
<rect x="614" y="55" width="1" height="112.2" fill="#ffcc66"/>
<rect x="615" y="24" width="1" height="143.8" fill="#ffff00"/>
<rect x="616" y="24" width="1" height="76" fill="#993366"/>
<rect x="619" y="24" width="1" height="203" fill="#ffff00"/>
<rect x="620" y="24" width="1" height="191" fill="#993366"/>
<rect x="621" y="24" width="1" height="116" fill="#ffff00"/>
<rect x="622" y="24" width="1" height="116" fill="#ffff00"/>
<rect x="623" y="24" width="1" height="191" fill="#993366"/>
<rect x="624" y="24" width="1" height="191" fill="#993366"/>
<rect x="625" y="24" width="1" height="191" fill="#993366"/>
<rect x="632" y="24" width="1" height="116" fill="#ffff00"/>
<rect x="592" y="55" width="8" height="1" fill="#ffcc66"/>
<rect x="609" y="55" width="7" height="1" fill="#ffcc66"/>
<rect x="611" y="166" width="33" height="1" fill="#ffcc66"/>
<polyline points="570.5,24.5 570.5,47.5 580.5,47.5 580.5,24.5" fill="none" stroke="#ffcc66" stroke-width="1"/>
<rect x="621" y="132" width="2" height="278" fill="#ff9999"/>
<rect x="627" y="135" width="3" height="31" fill="#ff9999"/>
<rect x="627" y="166" width="2" height="254" fill="#dd3300"/>
<rect x="627" y="420" width="1" height="56" fill="#ff9999"/>
<polyline points="550.5,146.5 572.5,146.5 572.5,171.5 575.5,171.5 575.5,199.5 578.5,199.5 578.5,215.5 582.5,215.5 582.5,227.5" fill="none" stroke="#aa7700" stroke-width="1"/>
<polyline points="550.5,147.5 571.5,147.5 571.5,173.5 574.5,173.5 574.5,201.5 577.5,201.5" fill="none" stroke="#aa6600" stroke-width="1"/>
<polygon points="633,24 659,24 659,144 640,108 633,78" fill="#993366"/>
<rect x="632" y="78" width="1" height="63.2" fill="#ffff00"/>
<rect x="633" y="78" width="1" height="65.8" fill="#ffff00"/>
<rect x="634" y="84.4" width="1" height="62.6" fill="#ffff00"/>
<rect x="635" y="88.7" width="1" height="62.3" fill="#ffff00"/>
<rect x="636" y="93" width="1" height="62" fill="#ffff00"/>
<rect x="638" y="101.6" width="1" height="61.4" fill="#ffff00"/>
<rect x="639" y="105.9" width="1" height="61.1" fill="#ffff00"/>
<rect x="641" y="110.8" width="1" height="62.1" fill="#ffff00"/>
<rect x="642" y="112.7" width="1" height="62.8" fill="#ffff00"/>
<rect x="644" y="116.5" width="1" height="64.3" fill="#ffff00"/>
<rect x="645" y="118.4" width="1" height="65" fill="#ffff00"/>
<rect x="647" y="122.2" width="1" height="66.5" fill="#ffff00"/>
<rect x="648" y="124.1" width="1" height="66.7" fill="#ffff00"/>
<rect x="650" y="127.9" width="1" height="66.1" fill="#ffff00"/>
<rect x="651" y="129.8" width="1" height="65.8" fill="#ffff00"/>
<rect x="653" y="133.6" width="1" height="65.2" fill="#ffff00"/>
<rect x="654" y="135.5" width="1" height="64.9" fill="#ffff00"/>
<rect x="656" y="139.3" width="1" height="64.3" fill="#ffff00"/>
<rect x="657" y="141.2" width="1" height="64" fill="#ffff00"/>
<rect x="659" y="146" width="1" height="70.9" fill="#ffff00"/>
<rect x="660" y="150" width="1" height="74.1" fill="#ffff00"/>
<rect x="662" y="158" width="1" height="77" fill="#ffff00"/>
<rect x="659" y="150" width="1" height="270" fill="#ffff00"/>
<rect x="660" y="24" width="1" height="276" fill="#993366"/>
<rect x="661" y="24" width="1" height="396" fill="#ffff00"/>
<rect x="662" y="150" width="1" height="180" fill="#ffff00"/>
<rect x="663" y="24" width="1" height="216" fill="#993366"/>
<rect x="664" y="24" width="1" height="381" fill="#993366"/>
<rect x="665" y="24" width="1" height="381" fill="#993366"/>
<rect x="666" y="150" width="1" height="150" fill="#ffff00"/>
<rect x="667" y="24" width="1" height="386" fill="#993366"/>
<rect x="668" y="24" width="1" height="386" fill="#993366"/>
<rect x="669" y="24" width="1" height="191" fill="#ffff00"/>
<rect x="670" y="24" width="1" height="386" fill="#993366"/>
<rect x="671" y="24" width="1" height="376" fill="#993366"/>
<rect x="672" y="24" width="1" height="191" fill="#993366"/>
<rect x="673" y="24" width="1" height="191" fill="#993366"/>
<rect x="653" y="24" width="1" height="126" fill="#ffff00"/>
<rect x="661" y="24" width="1" height="126" fill="#ffff00"/>
<rect x="669" y="24" width="1" height="126" fill="#ffff00"/>
<rect x="659" y="24" width="15" height="126" fill="#993366"/>
<rect x="653" y="24" width="1" height="191" fill="#ffff00"/>
<rect x="661" y="24" width="1" height="191" fill="#ffff00"/>
<rect x="669" y="24" width="1" height="191" fill="#ffff00"/>
<rect x="670" y="24" width="1" height="191" fill="#ffff00"/>
<rect x="677" y="24" width="1" height="206" fill="#993366"/>
<rect x="681" y="24" width="1" height="191" fill="#ffff00"/>
<rect x="682" y="24" width="1" height="31" fill="#993366"/>
<rect x="683" y="24" width="1" height="116" fill="#993366"/>
<rect x="684" y="24" width="1" height="31" fill="#993366"/>
<rect x="687" y="24" width="1" height="191" fill="#993366"/>
<rect x="688" y="24" width="1" height="191" fill="#ffff00"/>
<rect x="689" y="24" width="1" height="31" fill="#993366"/>
<rect x="690" y="24" width="1" height="31" fill="#993366"/>
<rect x="691" y="24" width="1" height="31" fill="#993366"/>
<rect x="692" y="24" width="1" height="31" fill="#993366"/>
<rect x="693" y="24" width="1" height="126" fill="#ffcc66"/>
<rect x="678" y="55" width="1" height="160" fill="#993366"/>
<rect x="683" y="140" width="1" height="240" fill="#993366"/>
<rect x="686" y="60" width="1" height="155" fill="#ffff00"/>
<rect x="691" y="60" width="1" height="167" fill="#ffff00"/>
<rect x="669" y="55" width="26" height="1" fill="#ffcc66"/>
<rect x="674" y="143" width="20" height="1" fill="#ffcc66"/>
<rect x="676" y="153" width="18" height="1" fill="#993366"/>
<polygon points="687,158 690,158 697,227 697,400 695,400 694,227" fill="#ffff00"/>
<polygon points="695,24 751,24 751,266 725,220 725,215 719,215 719,280 697,280 697,215 695,215" fill="#993366"/>
<rect x="702" y="24" width="1" height="256" fill="#ffff00"/>
<rect x="709" y="24" width="1" height="256" fill="#ffff00"/>
<rect x="710" y="24" width="1" height="256" fill="#ffff00"/>
<rect x="719" y="200" width="1" height="85" fill="#dd3300"/>
<rect x="720" y="169" width="1" height="116" fill="#ffff00"/>
<rect x="721" y="200" width="1" height="85" fill="#dd3300"/>
<rect x="722" y="169" width="1" height="116" fill="#ffff00"/>
<rect x="723" y="200" width="1" height="85" fill="#dd3300"/>
<rect x="724" y="169" width="1" height="116" fill="#ffff00"/>
<rect x="725" y="200" width="1" height="85" fill="#dd3300"/>
<rect x="700" y="280" width="1" height="42.3" fill="#ffff00"/>
<rect x="701" y="280" width="1" height="44" fill="#ffff00"/>
<rect x="702" y="280" width="1" height="45.7" fill="#ffff00"/>
<rect x="703" y="280" width="1" height="47.3" fill="#dd3300"/>
<rect x="704" y="280" width="1" height="49" fill="#ffff00"/>
<rect x="705" y="280" width="1" height="50.7" fill="#ffff00"/>
<rect x="706" y="280" width="1" height="52.3" fill="#ffff00"/>
<rect x="707" y="280" width="1" height="54" fill="#dd3300"/>
<rect x="708" y="280" width="1" height="55.7" fill="#ffff00"/>
<rect x="709" y="280" width="1" height="57.3" fill="#ffff00"/>
<rect x="710" y="280" width="1" height="59" fill="#ffff00"/>
<rect x="711" y="280" width="1" height="60.6" fill="#dd3300"/>
<rect x="712" y="280" width="1" height="62.3" fill="#ffff00"/>
<rect x="713" y="280" width="1" height="64" fill="#ffff00"/>
<rect x="714" y="280" width="1" height="65.6" fill="#ffff00"/>
<rect x="715" y="280" width="1" height="67.3" fill="#dd3300"/>
<rect x="716" y="280" width="1" height="69" fill="#ffff00"/>
<rect x="717" y="280" width="1" height="70.6" fill="#ffff00"/>
<rect x="725" y="220" width="1" height="71.4" fill="#ffff00"/>
<rect x="726" y="221.8" width="1" height="71.3" fill="#ffff00"/>
<rect x="727" y="223.5" width="1" height="71.2" fill="#ffff00"/>
<rect x="728" y="225.3" width="1" height="71.1" fill="#ffff00"/>
<rect x="729" y="227.1" width="1" height="71" fill="#ffff00"/>
<rect x="730" y="228.8" width="1" height="70.9" fill="#ffff00"/>
<rect x="731" y="230.6" width="1" height="70.8" fill="#ffff00"/>
<rect x="732" y="232.4" width="1" height="70.7" fill="#ffff00"/>
<rect x="733" y="234.2" width="1" height="70.6" fill="#ffff00"/>
<rect x="734" y="235.9" width="1" height="70.6" fill="#ffff00"/>
<rect x="735" y="237.7" width="1" height="70.5" fill="#ffff00"/>
<rect x="736" y="239.5" width="1" height="70.4" fill="#ffff00"/>
<rect x="737" y="241.2" width="1" height="70.3" fill="#ffff00"/>
<rect x="738" y="243" width="1" height="70.2" fill="#ffff00"/>
<rect x="739" y="244.8" width="1" height="70.1" fill="#ffff00"/>
<rect x="740" y="246.5" width="1" height="70" fill="#ffff00"/>
<rect x="741" y="248.3" width="1" height="69.9" fill="#ffff00"/>
<rect x="742" y="250.1" width="1" height="69.8" fill="#ffff00"/>
<rect x="743" y="251.8" width="1" height="69.7" fill="#ffff00"/>
<rect x="744" y="253.6" width="1" height="69.6" fill="#ffff00"/>
<rect x="745" y="255.4" width="1" height="69.5" fill="#ffff00"/>
<rect x="746" y="257.2" width="1" height="69.4" fill="#ffff00"/>
<rect x="747" y="258.9" width="1" height="69.3" fill="#ffff00"/>
<rect x="748" y="260.7" width="1" height="69.2" fill="#ffff00"/>
<rect x="749" y="262.5" width="1" height="69.1" fill="#ffff00"/>
<rect x="750" y="264.2" width="1" height="69" fill="#ffff00"/>
<rect x="751" y="266" width="1" height="68.9" fill="#ffff00"/>
<rect x="756" y="55" width="1" height="274" fill="#ffcc66"/>
<rect x="757" y="55" width="1" height="274" fill="#ffcc66"/>
<rect x="759" y="55" width="1" height="274" fill="#ffcc66"/>
<rect x="760" y="55" width="1" height="274" fill="#ffcc66"/>
<rect x="762" y="55" width="1" height="274" fill="#ffcc66"/>
<rect x="751" y="55" width="13" height="1" fill="#ffcc66"/>
<rect x="763" y="24" width="12" height="251" fill="#993366"/>
<rect x="764" y="24" width="1" height="313" fill="#ffff00"/>
<rect x="768" y="24" width="1" height="313" fill="#ffff00"/>
<rect x="763" y="275" width="1" height="62" fill="#ffff00"/>
<rect x="765" y="275" width="1" height="62" fill="#ff9900"/>
<rect x="766" y="275" width="1" height="62" fill="#ffff00"/>
<rect x="767" y="275" width="1" height="62" fill="#ffff00"/>
<rect x="769" y="275" width="1" height="62" fill="#ffff00"/>
<rect x="770" y="275" width="1" height="62" fill="#ffff00"/>
<rect x="771" y="275" width="1" height="62" fill="#ff9900"/>
<rect x="772" y="275" width="1" height="62" fill="#ffff00"/>
<rect x="773" y="275" width="1" height="62" fill="#ffff00"/>
<rect x="774" y="275" width="1" height="62" fill="#ff9900"/>
<rect x="770" y="24" width="5" height="276" fill="#993366"/>
<rect x="775" y="24" width="1" height="316" fill="#dd3300"/>
<polyline points="746.5,171.5 754.5,171.5 754.5,190.5 764.5,190.5" fill="none" stroke="#aa7700" stroke-width="1"/>
<polyline points="560.5,304.5 621.5,304.5 621.5,420.5" fill="none" stroke="#3377bb" stroke-width="1"/>
<polyline points="582.5,215.5 582.5,227.5 587.5,227.5 587.5,264.5 602.5,264.5 602.5,293.5 613.5,293.5 613.5,314.5 621.5,314.5" fill="none" stroke="#aa7700" stroke-width="1"/>
<polyline points="628.5,326.5 697.5,326.5" fill="none" stroke="#dd3300" stroke-width="1"/>
<polyline points="629.5,338.5 671.5,338.5 671.5,366.5 692.5,366.5 692.5,385.5 696.5,385.5 696.5,420.5" fill="none" stroke="#aa7700" stroke-width="1"/>
<rect x="682" y="215" width="2" height="167.7" fill="#993366"/>
<rect x="696" y="215" width="1" height="205" fill="#ffff00"/>
<rect x="698" y="215" width="1" height="190" fill="#dd3300"/>
<rect x="699" y="215" width="1" height="205" fill="#ffff00"/>
<rect x="700" y="215" width="1" height="85" fill="#993366"/>
<rect x="555.6" y="319.7" width="7.1" height="9.7" fill="#00ff00"/>
<rect x="571" y="297.6" width="1" height="24.1" fill="#ff9999"/>
<rect x="576" y="311.5" width="1" height="22.9" fill="#ff9999"/>
<rect x="550" y="385.2" width="5" height="202.8" fill="#66cc66"/>
<rect x="553" y="324.2" width="1" height="61" fill="#339944"/>
<polyline points="556.5,329.5 561.5,357.5 562.5,392.5 562.5,420.5" fill="none" stroke="#66ccff" stroke-width="1"/>
<polyline points="558.5,329.5 565.5,367.5 566.5,390.5 566.5,420.5" fill="none" stroke="#1890f0" stroke-width="1"/>
<polyline points="561.5,334.5 569.5,372.5 569.5,408.5" fill="none" stroke="#00ffff" stroke-width="1"/>
<polyline points="550.5,358.5 555.5,358.5 555.5,377.5 561.5,377.5 561.5,396.5 569.5,396.5 569.5,420.5" fill="none" stroke="#669933" stroke-width="1"/>
<polyline points="700.0,461.7 781.0,461.7 783.0,459.7 857.0,459.7 859.0,457.2 875.0,457.2 877.0,454.0 895.0,454.0 897.0,450.8 933.0,450.8 935.0,448.3 968.0,448.3 975.5,442.0 1022.5,442.0" fill="none" stroke="#00ff00" stroke-width="5.5" stroke-linejoin="round" stroke-linecap="round" shape-rendering="auto"/>
<polyline points="621.5,400.5 621.5,496.5 702.5,496.5 702.5,461.5" fill="none" stroke="#3377bb" stroke-width="1"/>
<rect x="784" y="461.7" width="1" height="116.1" fill="#3377bb"/>
<polyline points="784.5,522.5 829.5,522.5" fill="none" stroke="#669933" stroke-width="1"/>
<rect x="784" y="522.7" width="1" height="65.3" fill="#669933"/>
<rect x="784" y="522" width="238" height="1" fill="#669933"/>
<rect x="784" y="533" width="238" height="1" fill="#44aa55"/>
<polyline points="700.5,553.5 1041.5,553.5" fill="none" stroke="#ff9999" stroke-width="1" stroke-dasharray="4,3"/>
<polyline points="703.5,581.5 1041.5,581.5" fill="none" stroke="#98fb98" stroke-width="1" stroke-dasharray="4,3"/>
<polyline points="702.5,577.5 785.5,577.5 785.5,575.5 858.5,575.5 858.5,461.5" fill="none" stroke="#00e0e0" stroke-width="1"/>
<rect x="860" y="575" width="1" height="13" fill="#339944"/>
<rect x="937" y="451" width="85" height="1" fill="#339944"/>
<polyline points="978.5,584.5 1026.5,584.5 1026.5,506.5" fill="none" stroke="#004499" stroke-width="1"/>
<rect x="676.5" y="542.3" width="5.6" height="45.7" fill="#66ccff"/>
<rect x="659.2" y="400" width="1.8" height="45.7" fill="#ffff00"/>
<rect x="663.1" y="400" width="7.6" height="61" fill="#ffff00"/>
<rect x="665.6" y="400" width="5.1" height="7.6" fill="#993366"/>
<rect x="682" y="400" width="1" height="45.7" fill="#ffff00"/>
<rect x="695.3" y="400" width="2" height="17.8" fill="#ffff00"/>
<rect x="627" y="400" width="1" height="76.2" fill="#ff9999"/>
<rect x="654" y="463.5" width="1" height="38.1" fill="#ff9999"/>
<rect x="670" y="471.1" width="1" height="30.5" fill="#ff9999"/>
<rect x="550" y="400" width="4.6" height="68.6" fill="#66cc66"/>
<rect x="570.3" y="448.3" width="8.9" height="139.7" fill="#66cc66"/>
<rect x="581.8" y="504.2" width="5.1" height="83.8" fill="#66cc66"/>
<rect x="589.4" y="518.1" width="3.8" height="69.9" fill="#66cc66"/>
<rect x="604.6" y="549.9" width="10.9" height="38.1" fill="#66cc66"/>
<polyline points="604.5,588.5 604.5,538.5 615.5,538.5 615.5,588.5" fill="none" stroke="#669933" stroke-width="1"/>
<rect x="608" y="549.9" width="1" height="38.1" fill="#000000"/>
<polyline points="569.5,430.5 569.5,497.5 604.5,497.5 604.5,476.5" fill="none" stroke="#00ffff" stroke-width="1"/>
<polyline points="550.5,445.5 572.5,445.5 572.5,510.5 580.5,510.5 580.5,516.5 626.5,516.5 626.5,577.5" fill="none" stroke="#3377bb" stroke-width="1"/>
<polyline points="550.5,530.5 669.5,530.5" fill="none" stroke="#004499" stroke-width="1"/>
<polyline points="580.5,494.5 600.5,494.5 600.5,577.5 671.5,577.5" fill="none" stroke="#669933" stroke-width="1"/>
<polyline points="586.5,516.5 586.5,572.5 602.5,572.5" fill="none" stroke="#004499" stroke-width="1"/>
<polyline points="615.5,501.5 615.5,516.5 633.5,516.5" fill="none" stroke="#00ffff" stroke-width="1"/>
<rect x="626" y="519.4" width="1" height="68.6" fill="#66ccff"/>
<rect x="632" y="519.4" width="1" height="68.6" fill="#00ffff"/>
<rect x="640" y="519.4" width="1" height="68.6" fill="#1890f0"/>
<rect x="669" y="519.4" width="1" height="68.6" fill="#66ccff"/>
<rect x="674" y="519.4" width="1" height="68.6" fill="#3377bb"/>
<polyline points="550.5,468.5 557.5,468.5 557.5,588.5" fill="none" stroke="#669933" stroke-width="1"/>
<polyline points="550.5,547.5 581.5,547.5" fill="none" stroke="#339944" stroke-width="1"/>
<rect x="805" y="24" width="1" height="129" fill="#993366"/>
<rect x="806" y="24" width="1" height="130.3" fill="#993366"/>
<rect x="807" y="24" width="1" height="131.5" fill="#993366"/>
<rect x="808" y="24" width="1" height="132.7" fill="#993366"/>
<rect x="809" y="24" width="1" height="134" fill="#993366"/>
<rect x="810" y="24" width="1" height="135.2" fill="#993366"/>
<rect x="811" y="24" width="1" height="136.4" fill="#993366"/>
<rect x="812" y="24" width="1" height="137.7" fill="#993366"/>
<rect x="813" y="24" width="1" height="138.9" fill="#993366"/>
<rect x="814" y="24" width="1" height="140.1" fill="#993366"/>
<rect x="815" y="24" width="1" height="141.4" fill="#993366"/>
<rect x="816" y="24" width="1" height="142.6" fill="#993366"/>
<rect x="817" y="24" width="1" height="143.8" fill="#993366"/>
<rect x="818" y="24" width="1" height="145.1" fill="#993366"/>
<rect x="819" y="24" width="1" height="146.3" fill="#993366"/>
<rect x="820" y="24" width="1" height="147.5" fill="#993366"/>
<rect x="821" y="24" width="1" height="148.7" fill="#993366"/>
<rect x="822" y="24" width="1" height="150" fill="#993366"/>
<rect x="823" y="24" width="1" height="151.2" fill="#993366"/>
<rect x="824" y="24" width="1" height="152.4" fill="#993366"/>
<rect x="825" y="24" width="1" height="153.7" fill="#993366"/>
<rect x="826" y="24" width="1" height="154.9" fill="#993366"/>
<rect x="827" y="24" width="1" height="156.1" fill="#993366"/>
<rect x="828" y="24" width="1" height="157.4" fill="#993366"/>
<rect x="829" y="24" width="1" height="158.6" fill="#993366"/>
<rect x="830" y="24" width="1" height="159.8" fill="#993366"/>
<rect x="831" y="24" width="1" height="161.1" fill="#993366"/>
<rect x="832" y="24" width="1" height="162.3" fill="#993366"/>
<rect x="833" y="24" width="1" height="163.5" fill="#993366"/>
<rect x="834" y="24" width="1" height="164.8" fill="#993366"/>
<rect x="835" y="24" width="1" height="166" fill="#993366"/>
<rect x="836" y="24" width="1" height="167.2" fill="#993366"/>
<rect x="837" y="24" width="1" height="168.4" fill="#993366"/>
<rect x="838" y="24" width="1" height="169.7" fill="#993366"/>
<rect x="839" y="24" width="1" height="170.9" fill="#993366"/>
<rect x="840" y="24" width="1" height="172.1" fill="#993366"/>
<rect x="841" y="24" width="1" height="173.4" fill="#993366"/>
<rect x="842" y="24" width="1" height="174.6" fill="#993366"/>
<rect x="843" y="24" width="1" height="175.8" fill="#993366"/>
<rect x="844" y="24" width="1" height="142.8" fill="#993366"/>
<rect x="845" y="24" width="1" height="144.9" fill="#993366"/>
<rect x="846" y="24" width="1" height="147.1" fill="#993366"/>
<rect x="847" y="24" width="1" height="149.2" fill="#993366"/>
<rect x="848" y="24" width="1" height="151.3" fill="#993366"/>
<rect x="849" y="24" width="1" height="153.4" fill="#993366"/>
<rect x="850" y="24" width="1" height="155.5" fill="#993366"/>
<rect x="851" y="24" width="1" height="157.6" fill="#993366"/>
<rect x="852" y="24" width="1" height="159.8" fill="#993366"/>
<rect x="853" y="24" width="1" height="161.9" fill="#993366"/>
<rect x="854" y="24" width="1" height="164" fill="#993366"/>
<rect x="855" y="24" width="1" height="166.1" fill="#993366"/>
<rect x="856" y="24" width="1" height="168.2" fill="#993366"/>
<rect x="857" y="24" width="1" height="170.4" fill="#993366"/>
<rect x="858" y="24" width="1" height="172.5" fill="#993366"/>
<rect x="859" y="24" width="1" height="174.6" fill="#993366"/>
<rect x="860" y="24" width="1" height="176.7" fill="#993366"/>
<rect x="804" y="24" width="1" height="208" fill="#ffff00"/>
<rect x="843" y="24" width="1" height="53.5" fill="#ffff00"/>
<rect x="843" y="77.5" width="1" height="152.5" fill="#dd3300"/>
<rect x="860" y="24" width="1" height="238" fill="#ffff00"/>
<rect x="805" y="153" width="1" height="77.3" fill="#dd3300"/>
<rect x="806" y="154.3" width="1" height="74.3" fill="#dd3300"/>
<rect x="807" y="155.5" width="1" height="75.7" fill="#dd3300"/>
<rect x="808" y="156.7" width="1" height="77.9" fill="#dd3300"/>
<rect x="809" y="158" width="1" height="76.2" fill="#dd3300"/>
<rect x="810" y="159.2" width="1" height="71.6" fill="#dd3300"/>
<rect x="811" y="160.4" width="1" height="69.3" fill="#ffff00"/>
<rect x="812" y="161.7" width="1" height="71.2" fill="#dd3300"/>
<rect x="813" y="162.9" width="1" height="73" fill="#dd3300"/>
<rect x="814" y="164.1" width="1" height="70.6" fill="#dd3300"/>
<rect x="815" y="165.4" width="1" height="65.9" fill="#dd3300"/>
<rect x="816" y="166.6" width="1" height="64.4" fill="#ffff00"/>
<rect x="817" y="167.8" width="1" height="66.7" fill="#ffff00"/>
<rect x="818" y="169.1" width="1" height="67.9" fill="#ffff00"/>
<rect x="819" y="170.3" width="1" height="64.8" fill="#ffff00"/>
<rect x="820" y="171.5" width="1" height="60.4" fill="#ffff00"/>
<rect x="821" y="172.7" width="1" height="59.6" fill="#ffff00"/>
<rect x="822" y="174" width="1" height="62.1" fill="#ffff00"/>
<rect x="823" y="175.2" width="1" height="62.7" fill="#ffff00"/>
<rect x="824" y="176.4" width="1" height="59" fill="#ffff00"/>
<rect x="825" y="177.7" width="1" height="54.9" fill="#ffff00"/>
<rect x="826" y="178.9" width="1" height="54.9" fill="#ffff00"/>
<rect x="827" y="180.1" width="1" height="57.5" fill="#ffff00"/>
<rect x="828" y="181.4" width="1" height="55.3" fill="#ffff00"/>
<rect x="829" y="199.3" width="1" height="38.9" fill="#dd3300"/>
<rect x="830" y="199.3" width="1" height="40.5" fill="#dd3300"/>
<rect x="831" y="199.3" width="1" height="42.1" fill="#dd3300"/>
<rect x="832" y="199.3" width="1" height="43.6" fill="#dd3300"/>
<rect x="833" y="199.3" width="1" height="45.2" fill="#dd3300"/>
<rect x="834" y="199.3" width="1" height="46.8" fill="#dd3300"/>
<rect x="835" y="190" width="1" height="57.6" fill="#ffff00"/>
<rect x="836" y="191.2" width="1" height="58" fill="#ffff00"/>
<rect x="837" y="192.4" width="1" height="58.3" fill="#dd3300"/>
<rect x="838" y="193.7" width="1" height="58.7" fill="#dd3300"/>
<rect x="839" y="194.9" width="1" height="59" fill="#dd3300"/>
<rect x="840" y="196.1" width="1" height="59.3" fill="#dd3300"/>
<rect x="841" y="197.4" width="1" height="59.7" fill="#dd3300"/>
<rect x="842" y="198.6" width="1" height="60" fill="#dd3300"/>
<rect x="843" y="199.8" width="1" height="33.1" fill="#dd3300"/>
<rect x="844" y="166.8" width="1" height="67.7" fill="#ffff00"/>
<rect x="845" y="168.9" width="1" height="67.3" fill="#ffff00"/>
<rect x="846" y="171.1" width="1" height="66.8" fill="#ffff00"/>
<rect x="847" y="173.2" width="1" height="66.4" fill="#ffff00"/>
<rect x="848" y="175.3" width="1" height="65.9" fill="#ffff00"/>
<rect x="849" y="177.4" width="1" height="65.5" fill="#ffff00"/>
<rect x="850" y="179.5" width="1" height="65" fill="#dd3300"/>
<rect x="851" y="181.6" width="1" height="64.6" fill="#dd3300"/>
<rect x="852" y="183.8" width="1" height="64.1" fill="#dd3300"/>
<rect x="853" y="185.9" width="1" height="63.7" fill="#ffff00"/>
<rect x="854" y="188" width="1" height="63.2" fill="#dd3300"/>
<rect x="855" y="190.1" width="1" height="62.8" fill="#dd3300"/>
<rect x="856" y="192.2" width="1" height="62.3" fill="#ffff00"/>
<rect x="857" y="194.4" width="1" height="61.9" fill="#ffff00"/>
<rect x="858" y="196.5" width="1" height="61.4" fill="#ffff00"/>
<rect x="859" y="198.6" width="1" height="61" fill="#ffff00"/>
<rect x="860" y="200.7" width="1" height="60.5" fill="#ffff00"/>
<rect x="812" y="161.7" width="1" height="71.2" fill="#000000"/>
<rect x="822" y="174" width="1" height="62.1" fill="#000000"/>
<rect x="836" y="191.2" width="1" height="58" fill="#000000"/>
<rect x="851" y="181.6" width="1" height="64.6" fill="#000000"/>
<rect x="863" y="26" width="1" height="189" fill="#ff9900"/>
<rect x="864" y="26" width="1" height="189" fill="#ff9900"/>
<rect x="866" y="26" width="1" height="174" fill="#ff9900"/>
<rect x="876" y="26" width="1" height="49" fill="#aa7700"/>
<rect x="881" y="26" width="1" height="49" fill="#aa7700"/>
<rect x="884" y="26" width="1" height="49" fill="#aa7700"/>
<rect x="886" y="26" width="1" height="49" fill="#aa7700"/>
<rect x="890" y="26" width="1" height="49" fill="#aa7700"/>
<rect x="913" y="26" width="1" height="34" fill="#aa7700"/>
<rect x="914" y="26" width="1" height="34" fill="#aa7700"/>
<rect x="868" y="24" width="6" height="126" fill="#993366"/>
<rect x="868" y="150" width="1" height="66" fill="#ff9900"/>
<rect x="869" y="150" width="1" height="67" fill="#ff9900"/>
<rect x="870" y="150" width="1" height="68" fill="#ff9900"/>
<rect x="871" y="150" width="1" height="69" fill="#ff9900"/>
<rect x="872" y="150" width="1" height="70" fill="#ff9900"/>
<rect x="873" y="150" width="1" height="71" fill="#ff9900"/>
<rect x="874" y="150" width="1" height="72" fill="#ff9900"/>
<rect x="864" y="125" width="3" height="93" fill="#dd3300"/>
<rect x="875" y="78" width="2" height="137" fill="#dd3300"/>
<rect x="878" y="125" width="5" height="87" fill="#dd3300"/>
<rect x="881" y="78" width="3" height="47" fill="#dd3300"/>
<rect x="885.5" y="168" width="4.5" height="40" fill="#dd3300"/>
<rect x="871" y="150" width="1" height="62" fill="#ffcc66"/>
<rect x="909" y="24" width="3" height="84" fill="#993366"/>
<rect x="916" y="24" width="5" height="106" fill="#993366"/>
<rect x="861" y="23" width="61" height="4" fill="#ff0000"/>
<rect x="896" y="23" width="14" height="7" fill="#ff0000"/>
<rect x="909" y="24" width="1" height="85.3" fill="#993366"/>
<rect x="909" y="109.3" width="1" height="59.7" fill="#ff9900"/>
<rect x="910" y="24" width="1" height="86.2" fill="#993366"/>
<rect x="910" y="110.2" width="1" height="58.6" fill="#ff9900"/>
<rect x="911" y="24" width="1" height="87.1" fill="#993366"/>
<rect x="911" y="117.1" width="1" height="50.7" fill="#000000"/>
<rect x="912" y="24" width="1" height="88" fill="#993366"/>
<rect x="912" y="112" width="1" height="55.5" fill="#ff9900"/>
<rect x="913" y="24" width="1" height="88.9" fill="#993366"/>
<rect x="913" y="112.9" width="1" height="55.7" fill="#ff9900"/>
<rect x="914" y="24" width="1" height="89.8" fill="#993366"/>
<rect x="914" y="27" width="1" height="86.8" fill="#000000"/>
<rect x="914" y="113.8" width="1" height="57.1" fill="#ff9900"/>
<rect x="915" y="24" width="1" height="90.7" fill="#993366"/>
<rect x="915" y="120.7" width="1" height="52.6" fill="#000000"/>
<rect x="916" y="24" width="1" height="91.6" fill="#993366"/>
<rect x="916" y="115.6" width="1" height="59" fill="#ff9900"/>
<rect x="917" y="24" width="1" height="92.4" fill="#993366"/>
<rect x="917" y="116.4" width="1" height="57.9" fill="#ff9900"/>
<rect x="918" y="24" width="1" height="93.2" fill="#993366"/>
<rect x="918" y="117.2" width="1" height="56.1" fill="#ff9900"/>
<rect x="919" y="24" width="1" height="94" fill="#993366"/>
<rect x="919" y="124" width="1" height="48.9" fill="#000000"/>
<rect x="920" y="24" width="1" height="94.8" fill="#993366"/>
<rect x="920" y="24" width="1" height="94.8" fill="#ff9900"/>
<rect x="920" y="118.8" width="1" height="55.2" fill="#ff9900"/>
<rect x="921" y="24" width="1" height="95.7" fill="#993366"/>
<rect x="921" y="119.7" width="1" height="56.8" fill="#ff9900"/>
<rect x="922" y="24" width="1" height="96.5" fill="#993366"/>
<rect x="922" y="126.5" width="1" height="52.3" fill="#000000"/>
<rect x="923" y="24" width="1" height="38.1" fill="#cc6666"/>
<rect x="923" y="62.1" width="1" height="59.2" fill="#993366"/>
<rect x="923" y="127.3" width="1" height="52.7" fill="#000000"/>
<rect x="924" y="24" width="1" height="38.1" fill="#cc6666"/>
<rect x="924" y="62.1" width="1" height="60" fill="#993366"/>
<rect x="924" y="122.1" width="1" height="57.7" fill="#ff9900"/>
<rect x="925" y="24" width="1" height="38.2" fill="#cc6666"/>
<rect x="925" y="62.2" width="1" height="60.8" fill="#993366"/>
<rect x="925" y="122.9" width="1" height="55.9" fill="#ff9900"/>
<rect x="926" y="24" width="1" height="38.2" fill="#cc6666"/>
<rect x="926" y="62.2" width="1" height="61.5" fill="#993366"/>
<rect x="926" y="123.7" width="1" height="54.7" fill="#ff9900"/>
<rect x="927" y="24" width="1" height="38.2" fill="#cc6666"/>
<rect x="927" y="62.2" width="1" height="62.3" fill="#993366"/>
<rect x="927" y="130.5" width="1" height="49.1" fill="#000000"/>
<rect x="928" y="24" width="1" height="38.3" fill="#cc6666"/>
<rect x="928" y="62.3" width="1" height="63.1" fill="#993366"/>
<rect x="928" y="125.3" width="1" height="56.6" fill="#ff9900"/>
<rect x="929" y="24" width="1" height="38.3" fill="#cc6666"/>
<rect x="929" y="62.3" width="1" height="63.8" fill="#993366"/>
<rect x="929" y="132.2" width="1" height="52.2" fill="#000000"/>
<rect x="930" y="24" width="1" height="38.4" fill="#cc6666"/>
<rect x="930" y="62.4" width="1" height="64.6" fill="#993366"/>
<rect x="930" y="27" width="1" height="100" fill="#000000"/>
<rect x="930" y="127" width="1" height="58.5" fill="#ff9900"/>
<rect x="931" y="24" width="1" height="103.8" fill="#993366"/>
<rect x="931" y="24" width="1" height="103.8" fill="#ff9900"/>
<rect x="931" y="133.8" width="1" height="51.4" fill="#000000"/>
<rect x="932" y="24" width="1" height="104.6" fill="#993366"/>
<rect x="932" y="128.6" width="1" height="55.7" fill="#ff9900"/>
<rect x="933" y="24" width="1" height="105.3" fill="#993366"/>
<rect x="933" y="129.3" width="1" height="54.7" fill="#ff9900"/>
<rect x="934" y="24" width="1" height="105.8" fill="#993366"/>
<rect x="934" y="27" width="1" height="102.8" fill="#000000"/>
<rect x="934" y="129.8" width="1" height="55.3" fill="#ff9900"/>
<rect x="935" y="24" width="1" height="106.4" fill="#993366"/>
<rect x="935" y="136.4" width="1" height="51.1" fill="#000000"/>
<rect x="936" y="24" width="1" height="106.9" fill="#993366"/>
<rect x="936" y="136.9" width="1" height="52.9" fill="#000000"/>
<rect x="937" y="24" width="1" height="107.5" fill="#993366"/>
<rect x="937" y="131.5" width="1" height="59.5" fill="#ff9900"/>
<rect x="938" y="24" width="1" height="108.1" fill="#993366"/>
<rect x="938" y="132.1" width="1" height="58.6" fill="#ff9900"/>
<rect x="939" y="24" width="1" height="108.6" fill="#993366"/>
<rect x="939" y="138.6" width="1" height="51.1" fill="#000000"/>
<rect x="940" y="24" width="1" height="38.8" fill="#cc6666"/>
<rect x="940" y="62.8" width="1" height="70.4" fill="#993366"/>
<rect x="940" y="133.2" width="1" height="56.3" fill="#ff9900"/>
<rect x="941" y="24" width="1" height="38.8" fill="#cc6666"/>
<rect x="941" y="62.8" width="1" height="70.9" fill="#993366"/>
<rect x="941" y="133.7" width="1" height="56.9" fill="#ff9900"/>
<rect x="942" y="24" width="1" height="38.9" fill="#cc6666"/>
<rect x="942" y="62.9" width="1" height="71.4" fill="#993366"/>
<rect x="942" y="134.3" width="1" height="58.8" fill="#ff9900"/>
<rect x="943" y="24" width="1" height="38.9" fill="#cc6666"/>
<rect x="943" y="62.9" width="1" height="71.9" fill="#993366"/>
<rect x="943" y="140.8" width="1" height="54.6" fill="#000000"/>
<rect x="944" y="24" width="1" height="39" fill="#cc6666"/>
<rect x="944" y="63" width="1" height="72.4" fill="#993366"/>
<rect x="944" y="24" width="1" height="111.3" fill="#ff9900"/>
<rect x="944" y="135.3" width="1" height="61.2" fill="#ff9900"/>
<rect x="945" y="24" width="1" height="39.3" fill="#cc6666"/>
<rect x="945" y="63.3" width="1" height="72.6" fill="#993366"/>
<rect x="945" y="135.9" width="1" height="60.3" fill="#ff9900"/>
<rect x="946" y="24" width="1" height="39.9" fill="#cc6666"/>
<rect x="946" y="63.9" width="1" height="72.5" fill="#993366"/>
<rect x="946" y="136.4" width="1" height="58.8" fill="#ff9900"/>
<rect x="947" y="24" width="1" height="40.5" fill="#cc6666"/>
<rect x="947" y="64.5" width="1" height="72.5" fill="#993366"/>
<rect x="947" y="143" width="1" height="52" fill="#000000"/>
<rect x="948" y="24" width="1" height="41.1" fill="#cc6666"/>
<rect x="948" y="65.1" width="1" height="72.4" fill="#993366"/>
<rect x="948" y="137.5" width="1" height="58.7" fill="#ff9900"/>
<rect x="949" y="24" width="1" height="41.7" fill="#cc6666"/>
<rect x="949" y="65.7" width="1" height="72.3" fill="#993366"/>
<rect x="949" y="138" width="1" height="60.5" fill="#ff9900"/>
<rect x="950" y="24" width="1" height="42.3" fill="#cc6666"/>
<rect x="950" y="66.3" width="1" height="72.3" fill="#993366"/>
<rect x="950" y="144.6" width="1" height="56.3" fill="#000000"/>
<rect x="951" y="24" width="1" height="42.9" fill="#cc6666"/>
<rect x="951" y="66.9" width="1" height="72.2" fill="#993366"/>
<rect x="951" y="145.1" width="1" height="56.9" fill="#000000"/>
<rect x="952" y="24" width="1" height="115.7" fill="#993366"/>
<rect x="952" y="139.7" width="1" height="62" fill="#ff9900"/>
<rect x="953" y="24" width="1" height="116.2" fill="#993366"/>
<rect x="953" y="140.2" width="1" height="60.5" fill="#ff9900"/>
<rect x="954" y="24" width="1" height="116.7" fill="#993366"/>
<rect x="954" y="140.7" width="1" height="59.7" fill="#ff9900"/>
<rect x="955" y="24" width="1" height="117.3" fill="#993366"/>
<rect x="955" y="147.3" width="1" height="54.4" fill="#000000"/>
<rect x="956" y="24" width="1" height="117.9" fill="#993366"/>
<rect x="956" y="141.9" width="1" height="62.2" fill="#ff9900"/>
<rect x="957" y="24" width="1" height="118.5" fill="#993366"/>
<rect x="957" y="24" width="1" height="118.5" fill="#ff9900"/>
<rect x="957" y="148.5" width="1" height="57.9" fill="#000000"/>
<rect x="958" y="24" width="1" height="47.1" fill="#cc6666"/>
<rect x="958" y="71.1" width="1" height="72.1" fill="#993366"/>
<rect x="958" y="143.2" width="1" height="64.3" fill="#ff9900"/>
<rect x="959" y="24" width="1" height="47.7" fill="#cc6666"/>
<rect x="959" y="71.7" width="1" height="72.1" fill="#993366"/>
<rect x="959" y="149.8" width="1" height="57.3" fill="#000000"/>
<rect x="960" y="24" width="1" height="48.2" fill="#cc6666"/>
<rect x="960" y="72.2" width="1" height="72.1" fill="#993366"/>
<rect x="960" y="144.4" width="1" height="61.8" fill="#ff9900"/>
<rect x="961" y="24" width="1" height="48.7" fill="#cc6666"/>
<rect x="961" y="72.7" width="1" height="72.3" fill="#993366"/>
<rect x="961" y="145" width="1" height="61" fill="#ff9900"/>
<rect x="962" y="24" width="1" height="49.2" fill="#cc6666"/>
<rect x="962" y="73.2" width="1" height="72.4" fill="#993366"/>
<rect x="962" y="145.6" width="1" height="61.6" fill="#ff9900"/>
<rect x="963" y="24" width="1" height="49.6" fill="#cc6666"/>
<rect x="963" y="73.6" width="1" height="72.6" fill="#993366"/>
<rect x="963" y="152.2" width="1" height="57.4" fill="#000000"/>
<rect x="964" y="24" width="1" height="50.1" fill="#cc6666"/>
<rect x="964" y="74.1" width="1" height="72.7" fill="#993366"/>
<rect x="964" y="152.8" width="1" height="59.1" fill="#000000"/>
<rect x="965" y="24" width="1" height="50.6" fill="#cc6666"/>
<rect x="965" y="74.6" width="1" height="72.9" fill="#993366"/>
<rect x="965" y="147.5" width="1" height="65.5" fill="#ff9900"/>
<rect x="966" y="24" width="1" height="51.1" fill="#cc6666"/>
<rect x="966" y="75.1" width="1" height="73" fill="#993366"/>
<rect x="966" y="24" width="1" height="124.1" fill="#ff9900"/>
<rect x="966" y="148.1" width="1" height="64.5" fill="#ff9900"/>
<rect x="967" y="24" width="1" height="51.5" fill="#cc6666"/>
<rect x="967" y="75.5" width="1" height="73.2" fill="#993366"/>
<rect x="967" y="27" width="1" height="121.7" fill="#000000"/>
<rect x="967" y="154.7" width="1" height="56.9" fill="#000000"/>
<rect x="968" y="24" width="1" height="52" fill="#cc6666"/>
<rect x="968" y="76" width="1" height="73.2" fill="#993366"/>
<rect x="968" y="149.2" width="1" height="62.2" fill="#ff9900"/>
<rect x="969" y="24" width="1" height="52.5" fill="#cc6666"/>
<rect x="969" y="76.5" width="1" height="73.2" fill="#993366"/>
<rect x="969" y="149.7" width="1" height="63.1" fill="#ff9900"/>
<rect x="970" y="24" width="1" height="52.9" fill="#cc6666"/>
<rect x="970" y="76.9" width="1" height="73.2" fill="#993366"/>
<rect x="970" y="150.1" width="1" height="65.1" fill="#ff9900"/>
<rect x="971" y="24" width="1" height="53.4" fill="#cc6666"/>
<rect x="971" y="77.4" width="1" height="73.1" fill="#993366"/>
<rect x="971" y="156.6" width="1" height="60.9" fill="#000000"/>
<rect x="972" y="24" width="1" height="53.9" fill="#cc6666"/>
<rect x="972" y="77.9" width="1" height="73.1" fill="#993366"/>
<rect x="972" y="151" width="1" height="67.5" fill="#ff9900"/>
<rect x="973" y="24" width="1" height="54.4" fill="#cc6666"/>
<rect x="973" y="78.4" width="1" height="73.1" fill="#993366"/>
<rect x="973" y="151.4" width="1" height="66.6" fill="#ff9900"/>
<rect x="974" y="24" width="1" height="54.8" fill="#cc6666"/>
<rect x="974" y="78.8" width="1" height="73.1" fill="#993366"/>
<rect x="974" y="151.9" width="1" height="65.2" fill="#ff9900"/>
<rect x="975" y="24" width="1" height="55.3" fill="#cc6666"/>
<rect x="975" y="79.3" width="1" height="73" fill="#993366"/>
<rect x="975" y="158.3" width="1" height="58.6" fill="#000000"/>
<rect x="976" y="24" width="1" height="55.8" fill="#cc6666"/>
<rect x="976" y="79.8" width="1" height="73" fill="#993366"/>
<rect x="976" y="24" width="1" height="128.8" fill="#ff9900"/>
<rect x="976" y="152.8" width="1" height="65.5" fill="#ff9900"/>
<rect x="977" y="24" width="1" height="70" fill="#cc6666"/>
<rect x="977" y="94" width="1" height="58.5" fill="#993366"/>
<rect x="978" y="24" width="1" height="84" fill="#cc6666"/>
<rect x="978" y="108" width="1" height="43.5" fill="#993366"/>
<rect x="979" y="24" width="1" height="84" fill="#cc6666"/>
<rect x="979" y="108" width="1" height="42.5" fill="#993366"/>
<rect x="980" y="24" width="1" height="126" fill="#993366"/>
<rect x="981" y="24" width="1" height="95.1" fill="#cc6666"/>
<rect x="982" y="24" width="1" height="98.8" fill="#cc6666"/>
<rect x="983" y="24" width="1" height="102.5" fill="#cc6666"/>
<rect x="984" y="24" width="1" height="106.2" fill="#993366"/>
<rect x="985" y="24" width="1" height="109.9" fill="#cc6666"/>
<rect x="986" y="24" width="1" height="113.6" fill="#cc6666"/>
<rect x="987" y="24" width="1" height="117.3" fill="#cc6666"/>
<rect x="988" y="24" width="1" height="121" fill="#993366"/>
<rect x="989" y="24" width="1" height="124.7" fill="#cc6666"/>
<rect x="990" y="24" width="1" height="128.4" fill="#cc6666"/>
<rect x="991" y="24" width="1" height="132.1" fill="#cc6666"/>
<rect x="992" y="24" width="1" height="135.8" fill="#993366"/>
<rect x="993" y="24" width="1" height="31" fill="#cc6666"/>
<rect x="993" y="55" width="1" height="68.3" fill="#993366"/>
<rect x="993" y="123.3" width="1" height="62.9" fill="#ff9900"/>
<rect x="994" y="24" width="1" height="31" fill="#cc6666"/>
<rect x="994" y="55" width="1" height="68.9" fill="#993366"/>
<rect x="994" y="24" width="1" height="99.9" fill="#ff9900"/>
<rect x="994" y="123.9" width="1" height="62.8" fill="#ff9900"/>
<rect x="995" y="24" width="1" height="31" fill="#cc6666"/>
<rect x="995" y="55" width="1" height="69.5" fill="#993366"/>
<rect x="995" y="130.5" width="1" height="56.8" fill="#000000"/>
<rect x="996" y="24" width="1" height="31" fill="#cc6666"/>
<rect x="996" y="55" width="1" height="70.2" fill="#993366"/>
<rect x="996" y="125.2" width="1" height="62.7" fill="#ff9900"/>
<rect x="997" y="24" width="1" height="101.8" fill="#993366"/>
<rect x="997" y="125.8" width="1" height="62.7" fill="#ff9900"/>
<rect x="998" y="24" width="1" height="102.4" fill="#993366"/>
<rect x="998" y="126.4" width="1" height="62.6" fill="#ff9900"/>
<rect x="999" y="24" width="1" height="103" fill="#993366"/>
<rect x="999" y="133" width="1" height="56.5" fill="#000000"/>
<rect x="1000" y="24" width="1" height="103.6" fill="#993366"/>
<rect x="1000" y="24" width="1" height="103.6" fill="#ff9900"/>
<rect x="1000" y="127.6" width="1" height="62.5" fill="#ff9900"/>
<rect x="1001" y="24" width="1" height="104.2" fill="#993366"/>
<rect x="1001" y="128.2" width="1" height="62.4" fill="#ff9900"/>
<rect x="1002" y="24" width="1" height="104.8" fill="#993366"/>
<rect x="1002" y="128.8" width="1" height="62.4" fill="#ff9900"/>
<rect x="1003" y="24" width="1" height="105.5" fill="#993366"/>
<rect x="1003" y="27" width="1" height="102.5" fill="#000000"/>
<rect x="1003" y="135.5" width="1" height="56.3" fill="#000000"/>
<rect x="1004" y="24" width="1" height="106.1" fill="#993366"/>
<rect x="1004" y="130.1" width="1" height="62.3" fill="#ff9900"/>
<rect x="1005" y="24" width="1" height="106.7" fill="#993366"/>
<rect x="1005" y="130.7" width="1" height="62.2" fill="#ff9900"/>
<rect x="1006" y="24" width="1" height="107.2" fill="#993366"/>
<rect x="1006" y="137.2" width="1" height="56.2" fill="#000000"/>
<rect x="1007" y="24" width="1" height="107.7" fill="#993366"/>
<rect x="1007" y="137.7" width="1" height="56.4" fill="#000000"/>
<rect x="1008" y="24" width="1" height="108.1" fill="#993366"/>
<rect x="1008" y="132.1" width="1" height="62.5" fill="#ff9900"/>
<rect x="1009" y="24" width="1" height="56" fill="#cc6666"/>
<rect x="1009" y="80" width="1" height="52.6" fill="#993366"/>
<rect x="1009" y="24" width="1" height="108.6" fill="#ff9900"/>
<rect x="1009" y="132.6" width="1" height="62.6" fill="#ff9900"/>
<rect x="1010" y="24" width="1" height="56" fill="#cc6666"/>
<rect x="1010" y="80" width="1" height="53" fill="#993366"/>
<rect x="1010" y="133" width="1" height="62.7" fill="#ff9900"/>
<rect x="1011" y="24" width="1" height="56" fill="#cc6666"/>
<rect x="1011" y="80" width="1" height="53.4" fill="#993366"/>
<rect x="1011" y="139.4" width="1" height="56.8" fill="#000000"/>
<rect x="1012" y="24" width="1" height="56" fill="#cc6666"/>
<rect x="1012" y="80" width="1" height="53.9" fill="#993366"/>
<rect x="1012" y="133.9" width="1" height="62.9" fill="#ff9900"/>
<rect x="1013" y="24" width="1" height="56" fill="#cc6666"/>
<rect x="1013" y="80" width="1" height="54.3" fill="#993366"/>
<rect x="1013" y="24" width="1" height="110.3" fill="#ff9900"/>
<rect x="1013" y="140.3" width="1" height="57.1" fill="#000000"/>
<rect x="1014" y="24" width="1" height="56" fill="#cc6666"/>
<rect x="1014" y="80" width="1" height="54.8" fill="#993366"/>
<rect x="1014" y="134.8" width="1" height="63.2" fill="#ff9900"/>
<rect x="1015" y="24" width="1" height="56" fill="#cc6666"/>
<rect x="1015" y="80" width="1" height="55.2" fill="#993366"/>
<rect x="1015" y="141.2" width="1" height="57.3" fill="#000000"/>
<rect x="1016" y="24" width="1" height="56" fill="#cc6666"/>
<rect x="1016" y="80" width="1" height="55.7" fill="#993366"/>
<rect x="1016" y="135.7" width="1" height="63.4" fill="#ff9900"/>
<rect x="1017" y="24" width="1" height="56" fill="#cc6666"/>
<rect x="1017" y="80" width="1" height="56.1" fill="#993366"/>
<rect x="1017" y="136.1" width="1" height="63.5" fill="#ff9900"/>
<rect x="1018" y="24" width="1" height="56" fill="#cc6666"/>
<rect x="1018" y="80" width="1" height="56.6" fill="#993366"/>
<rect x="1018" y="136.6" width="1" height="63.6" fill="#ff9900"/>
<rect x="1019" y="24" width="1" height="56" fill="#cc6666"/>
<rect x="1019" y="80" width="1" height="57" fill="#993366"/>
<rect x="1019" y="143" width="1" height="57.8" fill="#000000"/>
<rect x="1020" y="24" width="1" height="56" fill="#cc6666"/>
<rect x="1020" y="80" width="1" height="57.4" fill="#993366"/>
<rect x="1020" y="143.4" width="1" height="57.9" fill="#000000"/>
<rect x="1021" y="24" width="1" height="28" fill="#cc6666"/>
<rect x="1021" y="52" width="1" height="85.9" fill="#993366"/>
<rect x="1021" y="137.9" width="1" height="64" fill="#ff9900"/>
<rect x="1022" y="24" width="1" height="114.3" fill="#993366"/>
<rect x="1022" y="138.3" width="1" height="64.1" fill="#ff9900"/>
<rect x="1023" y="24" width="1" height="114.8" fill="#993366"/>
<rect x="1023" y="144.8" width="1" height="58.2" fill="#000000"/>
<rect x="905" y="150" width="1" height="12" fill="#ff9900"/>
<rect x="906" y="150" width="1" height="13" fill="#dd3300"/>
<rect x="907" y="150" width="1" height="15.3" fill="#ff9900"/>
<rect x="908" y="150" width="1" height="17.7" fill="#ff9900"/>
<rect x="958" y="55" width="63" height="1" fill="#ffcc66"/>
<polyline points="936.5,50.5 946.5,50.5 946.5,54.5 950.5,54.5 961.5,62.5 969.5,68.5" fill="none" stroke="#aa7700" stroke-width="1"/>
<polyline points="979.5,23.5 979.5,34.5 981.5,34.5 981.5,44.5 990.5,44.5 990.5,72.5" fill="none" stroke="#aa7700" stroke-width="1"/>
<polyline points="1008.5,23.5 1008.5,50.5 1006.5,50.5" fill="none" stroke="#aa7700" stroke-width="1"/>
<polyline points="1013.5,58.5 1018.5,58.5 1021.5,53.5 1024.5,53.5" fill="none" stroke="#aa7700" stroke-width="1"/>
<rect x="1027" y="24" width="2" height="56" fill="#ffcc66"/>
<rect x="1030" y="24" width="1" height="57" fill="#ffcc66"/>
<rect x="1029" y="80" width="12" height="2" fill="#ff9900"/>
<rect x="1033" y="24" width="1" height="36" fill="#aa7700"/>
<rect x="1037" y="24" width="1" height="56" fill="#cc6666"/>
<polyline points="1025.5,55.5 1034.5,55.5 1034.5,98.5 1025.5,98.5" fill="none" stroke="#cc6666" stroke-width="1"/>
<rect x="1022" y="160" width="1" height="428" fill="#66ccff"/>
<rect x="1023" y="190" width="3" height="398" fill="#66cc66"/>
<rect x="1024" y="200" width="1" height="388" fill="#669933"/>
<rect x="1030" y="175" width="2" height="413" fill="#44aa55"/>
<rect x="1027" y="300" width="1" height="288" fill="#3377bb"/>
<rect x="1029" y="306" width="1" height="64" fill="#004499"/>
<rect x="1032" y="199" width="9" height="1" fill="#dd3300"/>
<rect x="1032" y="239" width="9" height="1" fill="#44aa55"/>
<rect x="1032" y="250" width="9" height="1" fill="#44aa55"/>
<rect x="1030" y="329" width="11" height="1" fill="#44aa55"/>
<rect x="1032" y="321" width="9" height="1" fill="#004499"/>
<rect x="1027" y="442" width="14" height="1" fill="#3377bb"/>
<rect x="1031" y="442" width="1" height="83" fill="#1890f0"/>
<path d="M9.5 109.7L13 106.5L16.5 109.7L13 112.9Z" fill="#00ff00"/>
<path d="M59.9 160.5L63.4 157.3L66.9 160.5L63.4 163.7Z" fill="#00ff00"/>
<path d="M75.1 168.1L78.6 164.9L82.1 168.1L78.6 171.3Z" fill="#00ff00"/>
<path d="M78.9 168.8L82.4 165.6L85.9 168.8L82.4 172Z" fill="#00ff00"/>
<path d="M110.7 192.2L114.2 189L117.7 192.2L114.2 195.4Z" fill="#00ff00"/>
<path d="M100.5 188.4L104 185.2L107.5 188.4L104 191.6Z" fill="#00ff00"/>
<path d="M171.6 144L175.1 140.8L178.6 144L175.1 147.2Z" fill="#00ff00"/>
<path d="M235.2 103.3L238.7 100.1L242.2 103.3L238.7 106.5Z" fill="#00ff00"/>
<path d="M249.1 163L252.6 159.8L256.1 163L252.6 166.2Z" fill="#00ff00"/>
<path d="M269.5 174.4L273 171.2L276.5 174.4L273 177.6Z" fill="#00ff00"/>
<path d="M258 197.3L261.5 194.1L265 197.3L261.5 200.5Z" fill="#00ff00"/>
<path d="M249.1 204.9L252.6 201.7L256.1 204.9L252.6 208.1Z" fill="#00ff00"/>
<path d="M244.1 208.7L247.6 205.5L251.1 208.7L247.6 211.9Z" fill="#00ff00"/>
<path d="M251.7 216.4L255.2 213.2L258.7 216.4L255.2 219.6Z" fill="#00ff00"/>
<path d="M245.3 218.9L248.8 215.7L252.3 218.9L248.8 222.1Z" fill="#00ff00"/>
<path d="M231.3 208.7L234.8 205.5L238.3 208.7L234.8 211.9Z" fill="#00ff00"/>
<path d="M245.3 218.8L248.8 215.6L252.3 218.8L248.8 222Z" fill="#00ff00"/>
<path d="M252.9 218L256.4 214.8L259.9 218L256.4 221.2Z" fill="#00ff00"/>
<path d="M405.6 276L409.6 272L413.6 276L409.6 280Z" fill="#00ff00"/>
<path d="M418.3 284.9L422.3 280.9L426.3 284.9L422.3 288.9Z" fill="#00ff00"/>
<path d="M422.1 289.9L426.1 285.9L430.1 289.9L426.1 293.9Z" fill="#00ff00"/>
<path d="M414.5 283.6L418.5 279.6L422.5 283.6L418.5 287.6Z" fill="#00ff00"/>
<path d="M321.7 254.4L325.7 250.4L329.7 254.4L325.7 258.4Z" fill="#00ff00"/>
<path d="M554.2 321.7L558.2 317.7L562.2 321.7L558.2 325.7Z" fill="#00ff00"/>
<path d="M555.5 326.8L559.5 322.8L563.5 326.8L559.5 330.8Z" fill="#00ff00"/>
<path d="M697.9 577.1L701.9 573.1L705.9 577.1L701.9 581.1Z" fill="#00ff00"/>
<path d="M1017.7 151L1021.7 147.5L1025.7 151L1021.7 154.5Z" fill="#00ff00"/>
<path d="M1018 161.3L1022 157.8L1026 161.3L1022 164.8Z" fill="#00ff00"/>
<path d="M1017.5 163L1021.5 159.5L1025.5 163L1021.5 166.5Z" fill="#00ff00"/>
<path d="M1026 225.4L1030 221.9L1034 225.4L1030 228.9Z" fill="#00ff00"/>
<path d="M12.9 60.6L16.4 57.4L19.9 60.6L16.4 63.8Z" fill="#ff0000"/>
<path d="M12.9 74.6L16.4 71.4L19.9 74.6L16.4 77.8Z" fill="#ff0000"/>
<path d="M10.3 80.4L13.8 77.2L17.3 80.4L13.8 83.6Z" fill="#ff0000"/>
<path d="M39.5 109.7L43 106.5L46.5 109.7L43 112.9Z" fill="#ff0000"/>
<path d="M40.8 113.5L44.3 110.3L47.8 113.5L44.3 116.7Z" fill="#ff0000"/>
<path d="M42.1 116.5L45.6 113.3L49.1 116.5L45.6 119.7Z" fill="#ff0000"/>
<path d="M37 114.7L40.5 111.5L44 114.7L40.5 117.9Z" fill="#ff0000"/>
<path d="M90.3 147.8L93.8 144.6L97.3 147.8L93.8 151Z" fill="#ff0000"/>
<path d="M115.7 145.2L119.2 142L122.7 145.2L119.2 148.4Z" fill="#ff0000"/>
<path d="M119.6 146.5L123.1 143.3L126.6 146.5L123.1 149.7Z" fill="#ff0000"/>
<path d="M128.5 114.7L132 111.5L135.5 114.7L132 117.9Z" fill="#ff0000"/>
<path d="M129.7 119.8L133.2 116.6L136.7 119.8L133.2 123Z" fill="#ff0000"/>
<path d="M131 124.9L134.5 121.7L138 124.9L134.5 128.1Z" fill="#ff0000"/>
<path d="M131.8 128.7L135.3 125.5L138.8 128.7L135.3 131.9Z" fill="#ff0000"/>
<path d="M142.9 124.9L146.4 121.7L149.9 124.9L146.4 128.1Z" fill="#ff0000"/>
<path d="M143.7 128.7L147.2 125.5L150.7 128.7L147.2 131.9Z" fill="#ff0000"/>
<path d="M151.3 150.3L154.8 147.1L158.3 150.3L154.8 153.5Z" fill="#ff0000"/>
<path d="M158.4 161.7L161.9 158.5L165.4 161.7L161.9 164.9Z" fill="#ff0000"/>
<path d="M167.8 77.9L171.3 74.7L174.8 77.9L171.3 81.1Z" fill="#ff0000"/>
<path d="M184.3 84.2L187.8 81L191.3 84.2L187.8 87.4Z" fill="#ff0000"/>
<path d="M189.4 105.8L192.9 102.6L196.4 105.8L192.9 109Z" fill="#ff0000"/>
<path d="M195.8 110.9L199.3 107.7L202.8 110.9L199.3 114.1Z" fill="#ff0000"/>
<path d="M198.3 113.5L201.8 110.3L205.3 113.5L201.8 116.7Z" fill="#ff0000"/>
<path d="M190.7 118L194.2 114.8L197.7 118L194.2 121.2Z" fill="#ff0000"/>
<path d="M200.9 125.7L204.4 122.5L207.9 125.7L204.4 128.9Z" fill="#ff0000"/>
<path d="M192 128.7L195.5 125.5L199 128.7L195.5 131.9Z" fill="#ff0000"/>
<path d="M193.7 142.7L197.2 139.5L200.7 142.7L197.2 145.9Z" fill="#ff0000"/>
<path d="M211.8 197.3L215.3 194.1L218.8 197.3L215.3 200.5Z" fill="#ff0000"/>
<path d="M230.1 77.9L233.6 74.7L237.1 77.9L233.6 81.1Z" fill="#ff0000"/>
<path d="M233.9 77.9L237.4 74.7L240.9 77.9L237.4 81.1Z" fill="#ff0000"/>
<path d="M237.7 77.9L241.2 74.7L244.7 77.9L241.2 81.1Z" fill="#ff0000"/>
<path d="M264.4 80.9L267.9 77.7L271.4 80.9L267.9 84.1Z" fill="#ff0000"/>
<path d="M271.2 77.9L274.7 74.7L278.2 77.9L274.7 81.1Z" fill="#ff0000"/>
<path d="M273.3 91.9L276.8 88.7L280.3 91.9L276.8 95.1Z" fill="#ff0000"/>
<path d="M265.1 95.2L268.6 92L272.1 95.2L268.6 98.4Z" fill="#ff0000"/>
<path d="M260.6 99.5L264.1 96.3L267.6 99.5L264.1 102.7Z" fill="#ff0000"/>
<path d="M263.1 102L266.6 98.8L270.1 102L266.6 105.2Z" fill="#ff0000"/>
<path d="M268.2 105.8L271.7 102.6L275.2 105.8L271.7 109Z" fill="#ff0000"/>
<path d="M265.6 109.7L269.1 106.5L272.6 109.7L269.1 112.9Z" fill="#ff0000"/>
<path d="M264.4 113.5L267.9 110.3L271.4 113.5L267.9 116.7Z" fill="#ff0000"/>
<path d="M231.3 108.9L234.8 105.7L238.3 108.9L234.8 112.1Z" fill="#ff0000"/>
<path d="M241.5 114.7L245 111.5L248.5 114.7L245 117.9Z" fill="#ff0000"/>
<path d="M279.6 137.6L283.1 134.4L286.6 137.6L283.1 140.8Z" fill="#ff0000"/>
<path d="M227 177L230.5 173.8L234 177L230.5 180.2Z" fill="#ff0000"/>
<path d="M487.9 77.9L491.4 74.7L494.9 77.9L491.4 81.1Z" fill="#ff0000"/>
<path d="M487.9 122.9L491.4 119.7L494.9 122.9L491.4 126.1Z" fill="#ff0000"/>
<path d="M487.9 134.6L491.4 131.4L494.9 134.6L491.4 137.8Z" fill="#ff0000"/>
<path d="M487.9 218.9L491.4 215.7L494.9 218.9L491.4 222.1Z" fill="#ff0000"/>
<path d="M309 187.9L312.5 184.7L316 187.9L312.5 191.1Z" fill="#ff0000"/>
<path d="M312.1 187.9L315.6 184.7L319.1 187.9L315.6 191.1Z" fill="#ff0000"/>
<path d="M315.1 187.9L318.6 184.7L322.1 187.9L318.6 191.1Z" fill="#ff0000"/>
<path d="M293 202.4L296.5 199.2L300 202.4L296.5 205.6Z" fill="#ff0000"/>
<path d="M307.8 216.4L311.2 213.2L314.8 216.4L311.2 219.6Z" fill="#ff0000"/>
<path d="M315.9 216.4L319.4 213.2L322.9 216.4L319.4 219.6Z" fill="#ff0000"/>
<path d="M319.2 216.4L322.7 213.2L326.2 216.4L322.7 219.6Z" fill="#ff0000"/>
<path d="M373.8 198.6L377.3 195.4L380.8 198.6L377.3 201.8Z" fill="#ff0000"/>
<path d="M347.6 224.5L351.1 221.3L354.6 224.5L351.1 227.7Z" fill="#ff0000"/>
<path d="M362.9 226.5L366.4 223.3L369.9 226.5L366.4 229.7Z" fill="#ff0000"/>
<path d="M280.3 136.3L283.8 133.1L287.3 136.3L283.8 139.5Z" fill="#ff0000"/>
<path d="M308.3 216.3L311.8 213.1L315.3 216.3L311.8 219.5Z" fill="#ff0000"/>
<path d="M317.2 216.3L320.7 213.1L324.2 216.3L320.7 219.5Z" fill="#ff0000"/>
<path d="M322.2 227.7L325.7 224.5L329.2 227.7L325.7 230.9Z" fill="#ff0000"/>
<path d="M337.5 230.8L341 227.6L344.5 230.8L341 234Z" fill="#ff0000"/>
<path d="M343.8 228.2L347.3 225L350.8 228.2L347.3 231.4Z" fill="#ff0000"/>
<path d="M348.9 225.2L352.4 222L355.9 225.2L352.4 228.4Z" fill="#ff0000"/>
<path d="M355.3 235.3L358.8 232.1L362.3 235.3L358.8 238.5Z" fill="#ff0000"/>
<path d="M363.6 227.7L367.1 224.5L370.6 227.7L367.1 230.9Z" fill="#ff0000"/>
<path d="M373.8 227.7L377.3 224.5L380.8 227.7L377.3 230.9Z" fill="#ff0000"/>
<path d="M389.6 241.7L393.1 238.5L396.6 241.7L393.1 244.9Z" fill="#ff0000"/>
<path d="M397.2 241.7L400.7 238.5L404.2 241.7L400.7 244.9Z" fill="#ff0000"/>
<path d="M408.6 241.7L412.1 238.5L415.6 241.7L412.1 244.9Z" fill="#ff0000"/>
<path d="M408.6 246.8L412.1 243.6L415.6 246.8L412.1 250Z" fill="#ff0000"/>
<path d="M442.9 241.7L446.4 238.5L449.9 241.7L446.4 244.9Z" fill="#ff0000"/>
<path d="M451.8 245.5L455.3 242.3L458.8 245.5L455.3 248.7Z" fill="#ff0000"/>
<path d="M450.5 250.6L454 247.4L457.5 250.6L454 253.8Z" fill="#ff0000"/>
<path d="M442.9 262L446.4 258.8L449.9 262L446.4 265.2Z" fill="#ff0000"/>
<path d="M465.8 264.5L469.3 261.3L472.8 264.5L469.3 267.7Z" fill="#ff0000"/>
<path d="M486.1 218.8L489.6 215.6L493.1 218.8L489.6 222Z" fill="#ff0000"/>
<path d="M487.4 230.8L490.9 227.6L494.4 230.8L490.9 234Z" fill="#ff0000"/>
<path d="M486.1 246.8L489.6 243.6L493.1 246.8L489.6 250Z" fill="#ff0000"/>
<path d="M483.6 262L487.1 258.8L490.6 262L487.1 265.2Z" fill="#ff0000"/>
<path d="M484.8 276L488.3 272.8L491.8 276L488.3 279.2Z" fill="#ff0000"/>
<path d="M501.3 262L504.8 258.8L508.3 262L504.8 265.2Z" fill="#ff0000"/>
<path d="M502.6 276L506.1 272.8L509.6 276L506.1 279.2Z" fill="#ff0000"/>
<path d="M538.2 258.7L541.7 255.5L545.2 258.7L541.7 261.9Z" fill="#ff0000"/>
<path d="M539.5 272.2L543 269L546.5 272.2L543 275.4Z" fill="#ff0000"/>
<path d="M512.8 289.9L516.3 286.7L519.8 289.9L516.3 293.1Z" fill="#ff0000"/>
<path d="M517.9 289.9L521.4 286.7L524.9 289.9L521.4 293.1Z" fill="#ff0000"/>
<path d="M522.9 289.9L526.4 286.7L529.9 289.9L526.4 293.1Z" fill="#ff0000"/>
<path d="M526.8 289.9L530.3 286.7L533.8 289.9L530.3 293.1Z" fill="#ff0000"/>
<path d="M495.5 288.7L499 285.5L502.5 288.7L499 291.9Z" fill="#ff0000"/>
<path d="M474.7 281.1L478.2 277.9L481.7 281.1L478.2 284.3Z" fill="#ff0000"/>
<path d="M473.4 288.7L476.9 285.5L480.4 288.7L476.9 291.9Z" fill="#ff0000"/>
<path d="M618.5 166L622 162.8L625.5 166L622 169.2Z" fill="#ff0000"/>
<path d="M694.5 54.5L698 51.3L701.5 54.5L698 57.7Z" fill="#ff0000"/>
<path d="M696.5 128.7L700 125.5L703.5 128.7L700 131.9Z" fill="#ff0000"/>
<path d="M698.2 179.5L701.7 176.3L705.2 179.5L701.7 182.7Z" fill="#ff0000"/>
<path d="M771.3 49.4L774.8 46.2L778.3 49.4L774.8 52.6Z" fill="#ff0000"/>
<path d="M761.9 190.4L765.4 187.2L768.9 190.4L765.4 193.6Z" fill="#ff0000"/>
<path d="M707.5 188L711 184.8L714.5 188L711 191.2Z" fill="#ff0000"/>
<path d="M710.5 188L714 184.8L717.5 188L714 191.2Z" fill="#ff0000"/>
<path d="M713.5 188L717 184.8L720.5 188L717 191.2Z" fill="#ff0000"/>
<path d="M723.5 188L727 184.8L730.5 188L727 191.2Z" fill="#ff0000"/>
<path d="M727.5 188L731 184.8L734.5 188L731 191.2Z" fill="#ff0000"/>
<path d="M731.5 188L735 184.8L738.5 188L735 191.2Z" fill="#ff0000"/>
<path d="M735.5 188L739 184.8L742.5 188L739 191.2Z" fill="#ff0000"/>
<path d="M712.5 207.5L716 204.3L719.5 207.5L716 210.7Z" fill="#ff0000"/>
<path d="M716.5 207.5L720 204.3L723.5 207.5L720 210.7Z" fill="#ff0000"/>
<path d="M720.5 207.5L724 204.3L727.5 207.5L724 210.7Z" fill="#ff0000"/>
<path d="M724.5 207.5L728 204.3L731.5 207.5L728 210.7Z" fill="#ff0000"/>
<path d="M721.3 219L724.8 215.8L728.3 219L724.8 222.2Z" fill="#ff0000"/>
<path d="M768.5 191.5L772 188.3L775.5 191.5L772 194.7Z" fill="#ff0000"/>
<path d="M771.5 192L775 188.8L778.5 192L775 195.2Z" fill="#ff0000"/>
<path d="M695.4 320.4L698.6 317.4L701.8 320.4L698.6 323.4Z" fill="#ff0000"/>
<path d="M696.2 321.8L699.4 318.8L702.6 321.8L699.4 324.8Z" fill="#ff0000"/>
<path d="M697.1 323.2L700.3 320.2L703.5 323.2L700.3 326.2Z" fill="#ff0000"/>
<path d="M697.9 324.5L701.1 321.5L704.3 324.5L701.1 327.5Z" fill="#ff0000"/>
<path d="M698.7 325.9L701.9 322.9L705.1 325.9L701.9 328.9Z" fill="#ff0000"/>
<path d="M699.6 327.3L702.8 324.3L706 327.3L702.8 330.3Z" fill="#ff0000"/>
<path d="M700.4 328.7L703.6 325.7L706.8 328.7L703.6 331.7Z" fill="#ff0000"/>
<path d="M701.2 330.1L704.4 327.1L707.6 330.1L704.4 333.1Z" fill="#ff0000"/>
<path d="M702 331.5L705.2 328.5L708.4 331.5L705.2 334.5Z" fill="#ff0000"/>
<path d="M702.9 332.8L706.1 329.8L709.3 332.8L706.1 335.8Z" fill="#ff0000"/>
<path d="M703.7 334.2L706.9 331.2L710.1 334.2L706.9 337.2Z" fill="#ff0000"/>
<path d="M704.5 335.6L707.7 332.6L710.9 335.6L707.7 338.6Z" fill="#ff0000"/>
<path d="M705.4 337L708.6 334L711.8 337L708.6 340Z" fill="#ff0000"/>
<path d="M706.2 338.4L709.4 335.4L712.6 338.4L709.4 341.4Z" fill="#ff0000"/>
<path d="M707 339.8L710.2 336.8L713.4 339.8L710.2 342.8Z" fill="#ff0000"/>
<path d="M707.9 341.1L711.1 338.1L714.3 341.1L711.1 344.1Z" fill="#ff0000"/>
<path d="M708.7 342.5L711.9 339.5L715.1 342.5L711.9 345.5Z" fill="#ff0000"/>
<path d="M709.5 343.9L712.7 340.9L715.9 343.9L712.7 346.9Z" fill="#ff0000"/>
<path d="M710.3 345.3L713.5 342.3L716.7 345.3L713.5 348.3Z" fill="#ff0000"/>
<path d="M711.2 346.7L714.4 343.7L717.6 346.7L714.4 349.7Z" fill="#ff0000"/>
<path d="M712 348.1L715.2 345.1L718.4 348.1L715.2 351.1Z" fill="#ff0000"/>
<path d="M712.8 349.4L716 346.4L719.2 349.4L716 352.4Z" fill="#ff0000"/>
<path d="M713.7 350.8L716.9 347.8L720.1 350.8L716.9 353.8Z" fill="#ff0000"/>
<path d="M714.5 352.2L717.7 349.2L720.9 352.2L717.7 355.2Z" fill="#ff0000"/>
<path d="M711.8 274.7L715 271.7L718.2 274.7L715 277.7Z" fill="#ff0000"/>
<path d="M712.6 276.1L715.8 273.1L719 276.1L715.8 279.1Z" fill="#ff0000"/>
<path d="M713.5 277.5L716.7 274.5L719.9 277.5L716.7 280.5Z" fill="#ff0000"/>
<path d="M714.3 278.9L717.5 275.9L720.7 278.9L717.5 281.9Z" fill="#ff0000"/>
<path d="M715.1 280.3L718.3 277.3L721.5 280.3L718.3 283.3Z" fill="#ff0000"/>
<path d="M716 281.6L719.2 278.6L722.4 281.6L719.2 284.6Z" fill="#ff0000"/>
<path d="M716.8 283L720 280L723.2 283L720 286Z" fill="#ff0000"/>
<path d="M717.6 284.4L720.8 281.4L724 284.4L720.8 287.4Z" fill="#ff0000"/>
<path d="M718.4 285.8L721.6 282.8L724.8 285.8L721.6 288.8Z" fill="#ff0000"/>
<path d="M719.3 287.2L722.5 284.2L725.7 287.2L722.5 290.2Z" fill="#ff0000"/>
<path d="M720.1 288.6L723.3 285.6L726.5 288.6L723.3 291.6Z" fill="#ff0000"/>
<path d="M720.9 290L724.1 287L727.3 290L724.1 293Z" fill="#ff0000"/>
<path d="M721.8 291.4L725 288.4L728.2 291.4L725 294.4Z" fill="#ff0000"/>
<path d="M722.6 292.7L725.8 289.7L729 292.7L725.8 295.7Z" fill="#ff0000"/>
<path d="M723.4 294.1L726.6 291.1L729.8 294.1L726.6 297.1Z" fill="#ff0000"/>
<path d="M724.3 295.5L727.5 292.5L730.7 295.5L727.5 298.5Z" fill="#ff0000"/>
<path d="M725.1 296.9L728.3 293.9L731.5 296.9L728.3 299.9Z" fill="#ff0000"/>
<path d="M725.9 298.3L729.1 295.3L732.3 298.3L729.1 301.3Z" fill="#ff0000"/>
<path d="M726.7 299.7L729.9 296.7L733.1 299.7L729.9 302.7Z" fill="#ff0000"/>
<path d="M727.6 301.1L730.8 298.1L734 301.1L730.8 304.1Z" fill="#ff0000"/>
<path d="M728.4 302.5L731.6 299.5L734.8 302.5L731.6 305.5Z" fill="#ff0000"/>
<path d="M729.2 303.9L732.4 300.9L735.6 303.9L732.4 306.9Z" fill="#ff0000"/>
<path d="M730.1 305.2L733.3 302.2L736.5 305.2L733.3 308.2Z" fill="#ff0000"/>
<path d="M730.9 306.6L734.1 303.6L737.3 306.6L734.1 309.6Z" fill="#ff0000"/>
<path d="M731.7 308L734.9 305L738.1 308L734.9 311Z" fill="#ff0000"/>
<path d="M732.6 309.4L735.8 306.4L739 309.4L735.8 312.4Z" fill="#ff0000"/>
<path d="M733.4 310.8L736.6 307.8L739.8 310.8L736.6 313.8Z" fill="#ff0000"/>
<path d="M734.2 312.2L737.4 309.2L740.6 312.2L737.4 315.2Z" fill="#ff0000"/>
<path d="M735 313.6L738.2 310.6L741.4 313.6L738.2 316.6Z" fill="#ff0000"/>
<path d="M735.9 315L739.1 312L742.3 315L739.1 318Z" fill="#ff0000"/>
<path d="M736.7 316.4L739.9 313.4L743.1 316.4L739.9 319.4Z" fill="#ff0000"/>
<path d="M737.5 317.7L740.7 314.7L743.9 317.7L740.7 320.7Z" fill="#ff0000"/>
<path d="M738.4 319.1L741.6 316.1L744.8 319.1L741.6 322.1Z" fill="#ff0000"/>
<path d="M739.2 320.5L742.4 317.5L745.6 320.5L742.4 323.5Z" fill="#ff0000"/>
<path d="M740 321.9L743.2 318.9L746.4 321.9L743.2 324.9Z" fill="#ff0000"/>
<path d="M740.9 323.3L744.1 320.3L747.3 323.3L744.1 326.3Z" fill="#ff0000"/>
<path d="M741.7 324.7L744.9 321.7L748.1 324.7L744.9 327.7Z" fill="#ff0000"/>
<path d="M742.5 326.1L745.7 323.1L748.9 326.1L745.7 329.1Z" fill="#ff0000"/>
<path d="M743.3 327.5L746.5 324.5L749.7 327.5L746.5 330.5Z" fill="#ff0000"/>
<path d="M744.2 328.8L747.4 325.8L750.6 328.8L747.4 331.8Z" fill="#ff0000"/>
<path d="M745 330.2L748.2 327.2L751.4 330.2L748.2 333.2Z" fill="#ff0000"/>
<path d="M745.8 331.6L749 328.6L752.2 331.6L749 334.6Z" fill="#ff0000"/>
<path d="M746.7 333L749.9 330L753.1 333L749.9 336Z" fill="#ff0000"/>
<path d="M747.5 334.4L750.7 331.4L753.9 334.4L750.7 337.4Z" fill="#ff0000"/>
<path d="M747.5 334.4L750.7 331.4L753.9 334.4L750.7 337.4Z" fill="#ff0000"/>
<path d="M748.4 335.9L751.6 332.9L754.8 335.9L751.6 338.9Z" fill="#ff0000"/>
<path d="M749.2 337.4L752.4 334.4L755.6 337.4L752.4 340.4Z" fill="#ff0000"/>
<path d="M750 338.8L753.2 335.8L756.5 338.8L753.2 341.8Z" fill="#ff0000"/>
<path d="M750.9 340.3L754.1 337.3L757.3 340.3L754.1 343.3Z" fill="#ff0000"/>
<path d="M751.8 341.8L755 338.8L758.2 341.8L755 344.8Z" fill="#ff0000"/>
<path d="M752.6 343.3L755.8 340.3L759 343.3L755.8 346.3Z" fill="#ff0000"/>
<path d="M753.4 344.8L756.6 341.8L759.9 344.8L756.6 347.8Z" fill="#ff0000"/>
<path d="M754.3 346.3L757.5 343.3L760.7 346.3L757.5 349.3Z" fill="#ff0000"/>
<path d="M755.1 347.8L758.4 344.8L761.6 347.8L758.4 350.8Z" fill="#ff0000"/>
<path d="M756 349.2L759.2 346.2L762.4 349.2L759.2 352.2Z" fill="#ff0000"/>
<path d="M756.8 350.7L760 347.7L763.2 350.7L760 353.7Z" fill="#ff0000"/>
<path d="M757.7 352.2L760.9 349.2L764.1 352.2L760.9 355.2Z" fill="#ff0000"/>
<path d="M751.1 336.5L754.6 333.3L758.1 336.5L754.6 339.7Z" fill="#ff0000"/>
<path d="M762 333.3L765.5 330.1L769 333.3L765.5 336.5Z" fill="#ff0000"/>
<path d="M751.2 338.4L754.7 335.2L758.2 338.4L754.7 341.6Z" fill="#ff0000"/>
<path d="M772 336.5L775.5 333.3L779 336.5L775.5 339.7Z" fill="#ff0000"/>
<path d="M771.5 341.5L775 338.3L778.5 341.5L775 344.7Z" fill="#ff0000"/>
<path d="M769.5 335.2L773 332L776.5 335.2L773 338.4Z" fill="#ff0000"/>
<path d="M765.3 341.8L768.8 338.6L772.3 341.8L768.8 345Z" fill="#ff0000"/>
<path d="M753.7 338L757.2 334.8L760.7 338L757.2 341.2Z" fill="#ff0000"/>
<path d="M750.8 340.8L754.3 337.6L757.8 340.8L754.3 344Z" fill="#ff0000"/>
<path d="M754.5 336.5L758 333.3L761.5 336.5L758 339.7Z" fill="#ff0000"/>
<path d="M770.9 335.7L774.4 332.5L777.9 335.7L774.4 338.9Z" fill="#ff0000"/>
<path d="M768.2 333.6L771.7 330.4L775.2 333.6L771.7 336.8Z" fill="#ff0000"/>
<path d="M759.5 339L763 335.8L766.5 339L763 342.2Z" fill="#ff0000"/>
<path d="M748.3 341.4L751.8 338.2L755.3 341.4L751.8 344.6Z" fill="#ff0000"/>
<path d="M753.5 332.2L757 329L760.5 332.2L757 335.4Z" fill="#ff0000"/>
<path d="M769.9 333.4L773.4 330.2L776.9 333.4L773.4 336.6Z" fill="#ff0000"/>
<path d="M768 338.2L771.5 335L775 338.2L771.5 341.4Z" fill="#ff0000"/>
<path d="M753.5 333L757 329.8L760.5 333L757 336.2Z" fill="#ff0000"/>
<path d="M765.3 333.2L768.8 330L772.3 333.2L768.8 336.4Z" fill="#ff0000"/>
<path d="M770.7 333.2L774.2 330L777.7 333.2L774.2 336.4Z" fill="#ff0000"/>
<path d="M760.4 333.3L763.9 330.1L767.4 333.3L763.9 336.5Z" fill="#ff0000"/>
<path d="M749.7 338L753.2 334.8L756.7 338L753.2 341.2Z" fill="#ff0000"/>
<path d="M760.3 338.2L763.8 335L767.3 338.2L763.8 341.4Z" fill="#ff0000"/>
<path d="M748.8 332L752.3 328.8L755.8 332L752.3 335.2Z" fill="#ff0000"/>
<path d="M771.5 337.6L775 334.4L778.5 337.6L775 340.8Z" fill="#ff0000"/>
<path d="M770 333.7L773.5 330.5L777 333.7L773.5 336.9Z" fill="#ff0000"/>
<path d="M761.8 337.9L765.3 334.7L768.8 337.9L765.3 341.1Z" fill="#ff0000"/>
<path d="M748.6 338.5L752.1 335.3L755.6 338.5L752.1 341.7Z" fill="#ff0000"/>
<path d="M771 333.8L774.5 330.6L778 333.8L774.5 337Z" fill="#ff0000"/>
<path d="M762.2 340.4L765.7 337.2L769.2 340.4L765.7 343.6Z" fill="#ff0000"/>
<path d="M760.5 334.3L764 331.1L767.5 334.3L764 337.5Z" fill="#ff0000"/>
<path d="M755.4 340.2L758.9 337L762.4 340.2L758.9 343.4Z" fill="#ff0000"/>
<path d="M757.8 335.9L761.3 332.7L764.8 335.9L761.3 339.1Z" fill="#ff0000"/>
<path d="M759.8 336.8L763.3 333.6L766.8 336.8L763.3 340Z" fill="#ff0000"/>
<path d="M759.6 333.4L763.1 330.2L766.6 333.4L763.1 336.6Z" fill="#ff0000"/>
<path d="M764.2 338.5L767.7 335.3L771.2 338.5L767.7 341.7Z" fill="#ff0000"/>
<path d="M761.9 337.3L765.4 334.1L768.9 337.3L765.4 340.5Z" fill="#ff0000"/>
<path d="M749.3 335.9L752.8 332.7L756.3 335.9L752.8 339.1Z" fill="#ff0000"/>
<path d="M752.3 336.4L755.8 333.2L759.3 336.4L755.8 339.6Z" fill="#ff0000"/>
<path d="M747.5 339.3L751 336.1L754.5 339.3L751 342.5Z" fill="#ff0000"/>
<path d="M721.3 218.8L724.8 215.6L728.3 218.8L724.8 222Z" fill="#ff0000"/>
<path d="M714.2 231.5L717.7 228.3L721.2 231.5L717.7 234.7Z" fill="#ff0000"/>
<path d="M718 240.4L721.5 237.2L725 240.4L721.5 243.6Z" fill="#ff0000"/>
<path d="M727.4 230.8L730.9 227.6L734.4 230.8L730.9 234Z" fill="#ff0000"/>
<path d="M730.7 239.1L734.2 235.9L737.7 239.1L734.2 242.3Z" fill="#ff0000"/>
<path d="M734.5 245L738 241.8L741.5 245L738 248.2Z" fill="#ff0000"/>
<path d="M698.4 253.1L701.9 249.9L705.4 253.1L701.9 256.3Z" fill="#ff0000"/>
<path d="M701 258.7L704.5 255.5L708 258.7L704.5 261.9Z" fill="#ff0000"/>
<path d="M698.9 263.3L702.4 260.1L705.9 263.3L702.4 266.5Z" fill="#ff0000"/>
<path d="M694.4 269.6L697.9 266.4L701.4 269.6L697.9 272.8Z" fill="#ff0000"/>
<path d="M701 269.6L704.5 266.4L708 269.6L704.5 272.8Z" fill="#ff0000"/>
<path d="M708.3 269.6L711.8 266.4L715.3 269.6L711.8 272.8Z" fill="#ff0000"/>
<path d="M704.5 275.5L708 272.3L711.5 275.5L708 278.7Z" fill="#ff0000"/>
<path d="M711.6 276L715.1 272.8L718.6 276L715.1 279.2Z" fill="#ff0000"/>
<path d="M761.2 263.3L764.7 260.1L768.2 263.3L764.7 266.5Z" fill="#ff0000"/>
<path d="M769.3 267.1L772.8 263.9L776.3 267.1L772.8 270.3Z" fill="#ff0000"/>
<path d="M762.5 276L766 272.8L769.5 276L766 279.2Z" fill="#ff0000"/>
<path d="M770.1 276L773.6 272.8L777.1 276L773.6 279.2Z" fill="#ff0000"/>
<path d="M771.3 303.9L774.8 300.7L778.3 303.9L774.8 307.1Z" fill="#ff0000"/>
<path d="M765 314.8L768.5 311.6L772 314.8L768.5 318Z" fill="#ff0000"/>
<path d="M743.4 314.8L746.9 311.6L750.4 314.8L746.9 318Z" fill="#ff0000"/>
<path d="M698.9 314.8L702.4 311.6L705.9 314.8L702.4 318Z" fill="#ff0000"/>
<path d="M706.1 314.8L709.6 311.6L713.1 314.8L709.6 318Z" fill="#ff0000"/>
<path d="M695.6 320.4L699.1 317.2L702.6 320.4L699.1 323.6Z" fill="#ff0000"/>
<path d="M694.6 381.4L698.1 378.2L701.6 381.4L698.1 384.6Z" fill="#ff0000"/>
<path d="M696.4 389L699.9 385.8L703.4 389L699.9 392.2Z" fill="#ff0000"/>
<path d="M693.3 410.6L696.8 407.4L700.3 410.6L696.8 413.8Z" fill="#ff0000"/>
<path d="M621.4 268.9L624.9 265.7L628.4 268.9L624.9 272.1Z" fill="#ff0000"/>
<path d="M618.4 269.6L621.9 266.4L625.4 269.6L621.9 272.8Z" fill="#ff0000"/>
<path d="M624.5 289.9L628 286.7L631.5 289.9L628 293.1Z" fill="#ff0000"/>
<path d="M617.6 314.8L621.1 311.6L624.6 314.8L621.1 318Z" fill="#ff0000"/>
<path d="M624 323L627.5 319.8L631 323L627.5 326.2Z" fill="#ff0000"/>
<path d="M617.6 326.8L621.1 323.6L624.6 326.8L621.1 330Z" fill="#ff0000"/>
<path d="M618.4 410.1L621.9 406.9L625.4 410.1L621.9 413.3Z" fill="#ff0000"/>
<path d="M622.2 409.4L625.7 406.2L629.2 409.4L625.7 412.6Z" fill="#ff0000"/>
<path d="M560.5 297.6L564 294.4L567.5 297.6L564 300.8Z" fill="#ff0000"/>
<path d="M563 297.6L566.5 294.4L570 297.6L566.5 300.8Z" fill="#ff0000"/>
<path d="M565.6 297.6L569.1 294.4L572.6 297.6L569.1 300.8Z" fill="#ff0000"/>
<path d="M568.1 297.6L571.6 294.4L575.1 297.6L571.6 300.8Z" fill="#ff0000"/>
<path d="M568.1 311.5L571.6 308.3L575.1 311.5L571.6 314.7Z" fill="#ff0000"/>
<path d="M572.7 311.5L576.2 308.3L579.7 311.5L576.2 314.7Z" fill="#ff0000"/>
<path d="M618.4 409.7L621.9 406.5L625.4 409.7L621.9 412.9Z" fill="#ff0000"/>
<path d="M622 409.7L625.5 406.5L629 409.7L625.5 412.9Z" fill="#ff0000"/>
<path d="M693.3 410.7L696.8 407.5L700.3 410.7L696.8 413.9Z" fill="#ff0000"/>
<path d="M617.6 439.9L621.1 436.7L624.6 439.9L621.1 443.1Z" fill="#ff0000"/>
<path d="M615.1 454.6L618.6 451.4L622.1 454.6L618.6 457.8Z" fill="#ff0000"/>
<path d="M617.1 467.3L620.6 464.1L624.1 467.3L620.6 470.5Z" fill="#ff0000"/>
<path d="M626.5 478.8L630 475.6L633.5 478.8L630 482Z" fill="#ff0000"/>
<path d="M636.7 496L640.2 492.8L643.7 496L640.2 499.2Z" fill="#ff0000"/>
<path d="M640.5 496L644 492.8L647.5 496L644 499.2Z" fill="#ff0000"/>
<path d="M650.7 489.4L654.2 486.2L657.7 489.4L654.2 492.6Z" fill="#ff0000"/>
<path d="M642.5 504.2L646 501L649.5 504.2L646 507.4Z" fill="#ff0000"/>
<path d="M674.8 487.7L678.3 484.5L681.8 487.7L678.3 490.9Z" fill="#ff0000"/>
<path d="M677.3 485.1L680.8 481.9L684.3 485.1L680.8 488.3Z" fill="#ff0000"/>
<path d="M679.9 496.5L683.4 493.3L686.9 496.5L683.4 499.7Z" fill="#ff0000"/>
<path d="M689.5 515.6L693 512.4L696.5 515.6L693 518.8Z" fill="#ff0000"/>
<path d="M688.3 522L691.8 518.8L695.3 522L691.8 525.2Z" fill="#ff0000"/>
<path d="M689.5 528.3L693 525.1L696.5 528.3L693 531.5Z" fill="#ff0000"/>
<path d="M604.3 429.7L607.8 426.5L611.3 429.7L607.8 432.9Z" fill="#ff0000"/>
<path d="M606.9 432.7L610.4 429.5L613.9 432.7L610.4 435.9Z" fill="#ff0000"/>
<path d="M606.1 435.2L609.6 432L613.1 435.2L609.6 438.4Z" fill="#ff0000"/>
<path d="M595.2 436.8L598.7 433.6L602.2 436.8L598.7 440Z" fill="#ff0000"/>
<path d="M609.2 439.7L612.7 436.5L616.2 439.7L612.7 442.9Z" fill="#ff0000"/>
<path d="M608.5 428.4L612 425.2L615.5 428.4L612 431.6Z" fill="#ff0000"/>
<path d="M601.9 431.2L605.4 428L608.9 431.2L605.4 434.4Z" fill="#ff0000"/>
<path d="M603.1 434.4L606.6 431.2L610.1 434.4L606.6 437.6Z" fill="#ff0000"/>
<path d="M595 436.3L598.5 433.1L602 436.3L598.5 439.5Z" fill="#ff0000"/>
<path d="M599 440.2L602.5 437L606 440.2L602.5 443.4Z" fill="#ff0000"/>
<path d="M606.4 428.5L609.9 425.3L613.4 428.5L609.9 431.7Z" fill="#ff0000"/>
<path d="M606.9 431L610.4 427.8L613.9 431L610.4 434.2Z" fill="#ff0000"/>
<path d="M604.2 433.5L607.7 430.3L611.2 433.5L607.7 436.7Z" fill="#ff0000"/>
<path d="M594.8 437.6L598.3 434.4L601.8 437.6L598.3 440.8Z" fill="#ff0000"/>
<path d="M653.4 462.9L656.9 459.7L660.4 462.9L656.9 466.1Z" fill="#ff0000"/>
<path d="M668.1 470.2L671.6 467L675.1 470.2L671.6 473.4Z" fill="#ff0000"/>
<path d="M654.9 471.2L658.4 468L661.9 471.2L658.4 474.4Z" fill="#ff0000"/>
<path d="M659.7 468L663.2 464.8L666.7 468L663.2 471.2Z" fill="#ff0000"/>
<path d="M653.3 471L656.8 467.8L660.3 471L656.8 474.2Z" fill="#ff0000"/>
<path d="M662.6 471.3L666.1 468.1L669.6 471.3L666.1 474.5Z" fill="#ff0000"/>
<path d="M666.4 463.8L669.9 460.6L673.4 463.8L669.9 467Z" fill="#ff0000"/>
<path d="M656.3 462.3L659.8 459.1L663.3 462.3L659.8 465.5Z" fill="#ff0000"/>
<path d="M652.2 461.2L655.7 458L659.2 461.2L655.7 464.4Z" fill="#ff0000"/>
<path d="M655.1 467.2L658.6 464L662.1 467.2L658.6 470.4Z" fill="#ff0000"/>
<path d="M649.5 468L653 464.8L656.5 468L653 471.2Z" fill="#ff0000"/>
<path d="M655.8 463.9L659.3 460.7L662.8 463.9L659.3 467.1Z" fill="#ff0000"/>
<path d="M665 465.8L668.5 462.6L672 465.8L668.5 469Z" fill="#ff0000"/>
<path d="M655.4 465.8L658.9 462.6L662.4 465.8L658.9 469Z" fill="#ff0000"/>
<path d="M662.8 461.1L666.3 457.9L669.8 461.1L666.3 464.3Z" fill="#ff0000"/>
<path d="M668 460.7L671.5 457.5L675 460.7L671.5 463.9Z" fill="#ff0000"/>
<path d="M663.7 469.9L667.2 466.7L670.7 469.9L667.2 473.1Z" fill="#ff0000"/>
<path d="M649.7 469.3L653.2 466.1L656.7 469.3L653.2 472.5Z" fill="#ff0000"/>
<path d="M656.4 466.9L659.9 463.7L663.4 466.9L659.9 470.1Z" fill="#ff0000"/>
<path d="M649.6 461L653.1 457.8L656.6 461L653.1 464.2Z" fill="#ff0000"/>
<path d="M652.8 471.1L656.3 467.9L659.8 471.1L656.3 474.3Z" fill="#ff0000"/>
<path d="M653.1 468.9L656.6 465.7L660.1 468.9L656.6 472.1Z" fill="#ff0000"/>
<path d="M804.2 162L807.4 159L810.6 162L807.4 165Z" fill="#ff0000"/>
<path d="M807.2 165.7L810.4 162.7L813.6 165.7L810.4 168.7Z" fill="#ff0000"/>
<path d="M810.2 169.4L813.5 166.4L816.7 169.4L813.5 172.4Z" fill="#ff0000"/>
<path d="M813.3 173.2L816.5 170.2L819.7 173.2L816.5 176.2Z" fill="#ff0000"/>
<path d="M816.3 176.9L819.5 173.9L822.7 176.9L819.5 179.9Z" fill="#ff0000"/>
<path d="M819.3 180.6L822.5 177.6L825.7 180.6L822.5 183.6Z" fill="#ff0000"/>
<path d="M822.3 184.3L825.5 181.3L828.8 184.3L825.5 187.3Z" fill="#ff0000"/>
<path d="M825.4 188.1L828.6 185.1L831.8 188.1L828.6 191.1Z" fill="#ff0000"/>
<path d="M828.4 191.8L831.6 188.8L834.8 191.8L831.6 194.8Z" fill="#ff0000"/>
<path d="M831.4 195.5L834.6 192.5L837.8 195.5L834.6 198.5Z" fill="#ff0000"/>
<path d="M834.5 199.2L837.7 196.2L840.9 199.2L837.7 202.2Z" fill="#ff0000"/>
<path d="M837.5 203L840.7 200L843.9 203L840.7 206Z" fill="#ff0000"/>
<path d="M840.5 206.7L843.7 203.7L846.9 206.7L843.7 209.7Z" fill="#ff0000"/>
<path d="M804.8 170L808 167L811.2 170L808 173Z" fill="#ff0000"/>
<path d="M808.5 175L811.8 172L815 175L811.8 178Z" fill="#ff0000"/>
<path d="M812.3 180L815.5 177L818.7 180L815.5 183Z" fill="#ff0000"/>
<path d="M816 185L819.2 182L822.5 185L819.2 188Z" fill="#ff0000"/>
<path d="M819.8 190L823 187L826.2 190L823 193Z" fill="#ff0000"/>
<path d="M823.5 195L826.8 192L830 195L826.8 198Z" fill="#ff0000"/>
<path d="M827.3 200L830.5 197L833.7 200L830.5 203Z" fill="#ff0000"/>
<path d="M831 205L834.2 202L837.5 205L834.2 208Z" fill="#ff0000"/>
<path d="M834.8 210L838 207L841.2 210L838 213Z" fill="#ff0000"/>
<path d="M842.3 175L845.5 172L848.7 175L845.5 178Z" fill="#ff0000"/>
<path d="M843.8 178.2L847 175.2L850.2 178.2L847 181.2Z" fill="#ff0000"/>
<path d="M845.3 181.4L848.5 178.4L851.7 181.4L848.5 184.4Z" fill="#ff0000"/>
<path d="M846.8 184.6L850 181.6L853.2 184.6L850 187.6Z" fill="#ff0000"/>
<path d="M848.4 187.8L851.6 184.8L854.8 187.8L851.6 190.8Z" fill="#ff0000"/>
<path d="M849.9 191.1L853.1 188.1L856.3 191.1L853.1 194.1Z" fill="#ff0000"/>
<path d="M851.4 194.3L854.6 191.3L857.8 194.3L854.6 197.3Z" fill="#ff0000"/>
<path d="M852.9 197.5L856.1 194.5L859.3 197.5L856.1 200.5Z" fill="#ff0000"/>
<path d="M854.4 200.7L857.6 197.7L860.8 200.7L857.6 203.7Z" fill="#ff0000"/>
<path d="M855.9 203.9L859.1 200.9L862.3 203.9L859.1 206.9Z" fill="#ff0000"/>
<path d="M857.5 207.1L860.7 204.1L863.9 207.1L860.7 210.1Z" fill="#ff0000"/>
<path d="M859 210.3L862.2 207.3L865.4 210.3L862.2 213.3Z" fill="#ff0000"/>
<path d="M860.5 213.5L863.7 210.5L866.9 213.5L863.7 216.5Z" fill="#ff0000"/>
<path d="M862 216.7L865.2 213.7L868.4 216.7L865.2 219.7Z" fill="#ff0000"/>
<path d="M863.5 219.9L866.7 216.9L869.9 219.9L866.7 222.9Z" fill="#ff0000"/>
<path d="M865 223.2L868.2 220.2L871.4 223.2L868.2 226.2Z" fill="#ff0000"/>
<path d="M866.6 226.4L869.8 223.4L873 226.4L869.8 229.4Z" fill="#ff0000"/>
<path d="M868.1 229.6L871.3 226.6L874.5 229.6L871.3 232.6Z" fill="#ff0000"/>
<path d="M869.6 232.8L872.8 229.8L876 232.8L872.8 235.8Z" fill="#ff0000"/>
<path d="M871.1 236L874.3 233L877.5 236L874.3 239Z" fill="#ff0000"/>
<path d="M799.8 231L803 228L806.2 231L803 234Z" fill="#ff0000"/>
<path d="M801.6 232L804.8 229L808 232L804.8 235Z" fill="#ff0000"/>
<path d="M803.4 233L806.6 230L809.8 233L806.6 236Z" fill="#ff0000"/>
<path d="M805.2 234L808.4 231L811.6 234L808.4 237Z" fill="#ff0000"/>
<path d="M807 235L810.2 232L813.4 235L810.2 238Z" fill="#ff0000"/>
<path d="M808.8 236L812 233L815.2 236L812 239Z" fill="#ff0000"/>
<path d="M808.8 236L812 233L815.2 236L812 239Z" fill="#ff0000"/>
<path d="M810.8 235.2L814 232.2L817.2 235.2L814 238.2Z" fill="#ff0000"/>
<path d="M812.8 234.5L816 231.5L819.2 234.5L816 237.5Z" fill="#ff0000"/>
<path d="M814.8 233.8L818 230.8L821.2 233.8L818 236.8Z" fill="#ff0000"/>
<path d="M816.8 233L820 230L823.2 233L820 236Z" fill="#ff0000"/>
<path d="M816.8 233L820 230L823.2 233L820 236Z" fill="#ff0000"/>
<path d="M818.8 233.9L822 230.9L825.2 233.9L822 236.9Z" fill="#ff0000"/>
<path d="M820.8 234.8L824 231.8L827.2 234.8L824 237.8Z" fill="#ff0000"/>
<path d="M822.8 235.6L826 232.6L829.2 235.6L826 238.6Z" fill="#ff0000"/>
<path d="M824.8 236.5L828 233.5L831.2 236.5L828 239.5Z" fill="#ff0000"/>
<path d="M824.8 236.5L828 233.5L831.2 236.5L828 239.5Z" fill="#ff0000"/>
<path d="M825.8 238L829 235L832.2 238L829 241Z" fill="#ff0000"/>
<path d="M826.8 239.6L830 236.6L833.2 239.6L830 242.6Z" fill="#ff0000"/>
<path d="M827.7 241.1L830.9 238.1L834.1 241.1L830.9 244.1Z" fill="#ff0000"/>
<path d="M828.7 242.7L831.9 239.7L835.1 242.7L831.9 245.7Z" fill="#ff0000"/>
<path d="M829.7 244.2L832.9 241.2L836.1 244.2L832.9 247.2Z" fill="#ff0000"/>
<path d="M830.7 245.8L833.9 242.8L837.1 245.8L833.9 248.8Z" fill="#ff0000"/>
<path d="M831.7 247.3L834.9 244.3L838.1 247.3L834.9 250.3Z" fill="#ff0000"/>
<path d="M832.6 248.9L835.8 245.9L839 248.9L835.8 251.9Z" fill="#ff0000"/>
<path d="M833.6 250.4L836.8 247.4L840 250.4L836.8 253.4Z" fill="#ff0000"/>
<path d="M834.6 252L837.8 249L841 252L837.8 255Z" fill="#ff0000"/>
<path d="M835.6 253.5L838.8 250.5L842 253.5L838.8 256.5Z" fill="#ff0000"/>
<path d="M836.6 255.1L839.8 252.1L843 255.1L839.8 258.1Z" fill="#ff0000"/>
<path d="M837.5 256.6L840.7 253.6L843.9 256.6L840.7 259.6Z" fill="#ff0000"/>
<path d="M838.5 258.2L841.7 255.2L844.9 258.2L841.7 261.2Z" fill="#ff0000"/>
<path d="M839.5 259.7L842.7 256.7L845.9 259.7L842.7 262.7Z" fill="#ff0000"/>
<path d="M838.6 230.9L841.8 227.9L845 230.9L841.8 233.9Z" fill="#ff0000"/>
<path d="M839.5 232.4L842.7 229.4L845.9 232.4L842.7 235.4Z" fill="#ff0000"/>
<path d="M840.5 234L843.7 231L846.9 234L843.7 237Z" fill="#ff0000"/>
<path d="M841.4 235.5L844.6 232.5L847.8 235.5L844.6 238.5Z" fill="#ff0000"/>
<path d="M842.3 237.1L845.5 234.1L848.7 237.1L845.5 240.1Z" fill="#ff0000"/>
<path d="M843.2 238.6L846.4 235.6L849.6 238.6L846.4 241.6Z" fill="#ff0000"/>
<path d="M844.2 240.2L847.4 237.2L850.6 240.2L847.4 243.2Z" fill="#ff0000"/>
<path d="M845.1 241.7L848.3 238.7L851.5 241.7L848.3 244.7Z" fill="#ff0000"/>
<path d="M846 243.3L849.2 240.3L852.4 243.3L849.2 246.3Z" fill="#ff0000"/>
<path d="M847 244.8L850.2 241.8L853.4 244.8L850.2 247.8Z" fill="#ff0000"/>
<path d="M847.9 246.4L851.1 243.4L854.3 246.4L851.1 249.4Z" fill="#ff0000"/>
<path d="M848.8 247.9L852 244.9L855.2 247.9L852 250.9Z" fill="#ff0000"/>
<path d="M849.7 249.5L852.9 246.5L856.1 249.5L852.9 252.5Z" fill="#ff0000"/>
<path d="M850.7 251L853.9 248L857.1 251L853.9 254Z" fill="#ff0000"/>
<path d="M851.6 252.6L854.8 249.6L858 252.6L854.8 255.6Z" fill="#ff0000"/>
<path d="M852.5 254.1L855.7 251.1L858.9 254.1L855.7 257.1Z" fill="#ff0000"/>
<path d="M853.5 255.7L856.7 252.7L859.9 255.7L856.7 258.7Z" fill="#ff0000"/>
<path d="M854.4 257.2L857.6 254.2L860.8 257.2L857.6 260.2Z" fill="#ff0000"/>
<path d="M855.3 258.8L858.5 255.8L861.7 258.8L858.5 261.8Z" fill="#ff0000"/>
<path d="M856.2 260.3L859.4 257.3L862.6 260.3L859.4 263.3Z" fill="#ff0000"/>
<path d="M857.2 261.9L860.4 258.9L863.6 261.9L860.4 264.9Z" fill="#ff0000"/>
<path d="M858.1 263.4L861.3 260.4L864.5 263.4L861.3 266.4Z" fill="#ff0000"/>
<path d="M856.3 219.7L859.5 216.7L862.7 219.7L859.5 222.7Z" fill="#ff0000"/>
<path d="M857.5 221.9L860.8 218.9L864 221.9L860.8 224.9Z" fill="#ff0000"/>
<path d="M858.8 224L862 221L865.2 224L862 227Z" fill="#ff0000"/>
<path d="M860 226.2L863.2 223.2L866.5 226.2L863.2 229.2Z" fill="#ff0000"/>
<path d="M861.3 228.4L864.5 225.4L867.7 228.4L864.5 231.4Z" fill="#ff0000"/>
<path d="M862.5 230.5L865.8 227.5L869 230.5L865.8 233.5Z" fill="#ff0000"/>
<path d="M863.8 232.7L867 229.7L870.2 232.7L867 235.7Z" fill="#ff0000"/>
<path d="M861.8 199.3L865 196.3L868.2 199.3L865 202.3Z" fill="#ff0000"/>
<path d="M862.3 201.2L865.5 198.2L868.7 201.2L865.5 204.2Z" fill="#ff0000"/>
<path d="M862.9 203.2L866.1 200.2L869.3 203.2L866.1 206.2Z" fill="#ff0000"/>
<path d="M863.4 205.1L866.6 202.1L869.8 205.1L866.6 208.1Z" fill="#ff0000"/>
<path d="M863.9 207.1L867.1 204.1L870.3 207.1L867.1 210.1Z" fill="#ff0000"/>
<path d="M864.5 209L867.7 206L870.9 209L867.7 212Z" fill="#ff0000"/>
<path d="M865 211L868.2 208L871.4 211L868.2 214Z" fill="#ff0000"/>
<path d="M865.5 212.9L868.7 209.9L871.9 212.9L868.7 215.9Z" fill="#ff0000"/>
<path d="M866.1 214.9L869.3 211.9L872.5 214.9L869.3 217.9Z" fill="#ff0000"/>
<path d="M866.6 216.8L869.8 213.8L873 216.8L869.8 219.8Z" fill="#ff0000"/>
<path d="M867.1 218.8L870.3 215.8L873.5 218.8L870.3 221.8Z" fill="#ff0000"/>
<path d="M867.7 220.7L870.9 217.7L874.1 220.7L870.9 223.7Z" fill="#ff0000"/>
<path d="M868.2 222.7L871.4 219.7L874.6 222.7L871.4 225.7Z" fill="#ff0000"/>
<path d="M868.7 224.6L871.9 221.6L875.1 224.6L871.9 227.6Z" fill="#ff0000"/>
<path d="M869.3 226.6L872.5 223.6L875.7 226.6L872.5 229.6Z" fill="#ff0000"/>
<path d="M869.8 228.5L873 225.5L876.2 228.5L873 231.5Z" fill="#ff0000"/>
<path d="M870.3 230.5L873.5 227.5L876.7 230.5L873.5 233.5Z" fill="#ff0000"/>
<path d="M870.9 232.4L874.1 229.4L877.3 232.4L874.1 235.4Z" fill="#ff0000"/>
<path d="M871.4 234.4L874.6 231.4L877.8 234.4L874.6 237.4Z" fill="#ff0000"/>
<path d="M871.9 236.3L875.1 233.3L878.3 236.3L875.1 239.3Z" fill="#ff0000"/>
<path d="M872.5 238.3L875.7 235.3L878.9 238.3L875.7 241.3Z" fill="#ff0000"/>
<path d="M873 240.2L876.2 237.2L879.4 240.2L876.2 243.2Z" fill="#ff0000"/>
<path d="M871.1 197.4L874.3 194.4L877.5 197.4L874.3 200.4Z" fill="#ff0000"/>
<path d="M872.1 199.2L875.3 196.2L878.5 199.2L875.3 202.2Z" fill="#ff0000"/>
<path d="M873.2 201L876.4 198L879.6 201L876.4 204Z" fill="#ff0000"/>
<path d="M874.2 202.8L877.4 199.8L880.6 202.8L877.4 205.8Z" fill="#ff0000"/>
<path d="M875.3 204.6L878.5 201.6L881.7 204.6L878.5 207.6Z" fill="#ff0000"/>
<path d="M876.3 206.4L879.5 203.4L882.7 206.4L879.5 209.4Z" fill="#ff0000"/>
<path d="M877.4 208.2L880.6 205.2L883.8 208.2L880.6 211.2Z" fill="#ff0000"/>
<path d="M878.4 210L881.6 207L884.8 210L881.6 213Z" fill="#ff0000"/>
<path d="M879.4 211.8L882.6 208.8L885.9 211.8L882.6 214.8Z" fill="#ff0000"/>
<path d="M880.5 213.6L883.7 210.6L886.9 213.6L883.7 216.6Z" fill="#ff0000"/>
<path d="M881.5 215.4L884.7 212.4L887.9 215.4L884.7 218.4Z" fill="#ff0000"/>
<path d="M882.6 217.2L885.8 214.2L889 217.2L885.8 220.2Z" fill="#ff0000"/>
<path d="M883.6 219L886.8 216L890 219L886.8 222Z" fill="#ff0000"/>
<path d="M884.7 220.8L887.9 217.8L891.1 220.8L887.9 223.8Z" fill="#ff0000"/>
<path d="M885.7 222.6L888.9 219.6L892.1 222.6L888.9 225.6Z" fill="#ff0000"/>
<path d="M886.8 224.4L890 221.4L893.2 224.4L890 227.4Z" fill="#ff0000"/>
<path d="M887.8 226.2L891 223.2L894.2 226.2L891 229.2Z" fill="#ff0000"/>
<path d="M808.5 156L812 152.8L815.5 156L812 159.2Z" fill="#ff0000"/>
<path d="M814.5 160L818 156.8L821.5 160L818 163.2Z" fill="#ff0000"/>
<path d="M818.5 163L822 159.8L825.5 163L822 166.2Z" fill="#ff0000"/>
<path d="M845.3 168L848.8 164.8L852.3 168L848.8 171.2Z" fill="#ff0000"/>
<path d="M829.5 207L833 203.8L836.5 207L833 210.2Z" fill="#ff0000"/>
<path d="M838.5 208L842 204.8L845.5 208L842 211.2Z" fill="#ff0000"/>
<path d="M832.5 205L836 201.8L839.5 205L836 208.2Z" fill="#ff0000"/>
<path d="M797.5 26L801 23L804.5 26L801 29Z" fill="#ff0000"/>
<path d="M800.5 24.5L804 21.5L807.5 24.5L804 27.5Z" fill="#ff0000"/>
<path d="M803.5 26L807 23L810.5 26L807 29Z" fill="#ff0000"/>
<path d="M806.5 24.5L810 21.5L813.5 24.5L810 27.5Z" fill="#ff0000"/>
<path d="M809.5 26L813 23L816.5 26L813 29Z" fill="#ff0000"/>
<path d="M812.5 24.5L816 21.5L819.5 24.5L816 27.5Z" fill="#ff0000"/>
<path d="M815.5 26L819 23L822.5 26L819 29Z" fill="#ff0000"/>
<path d="M818.5 24.5L822 21.5L825.5 24.5L822 27.5Z" fill="#ff0000"/>
<path d="M821.5 26L825 23L828.5 26L825 29Z" fill="#ff0000"/>
<path d="M824.5 24.5L828 21.5L831.5 24.5L828 27.5Z" fill="#ff0000"/>
<path d="M827.5 26L831 23L834.5 26L831 29Z" fill="#ff0000"/>
<path d="M806 29L810 25.6L814 29L810 32.4Z" fill="#ff0000"/>
<path d="M810 30L814 26.6L818 30L814 33.4Z" fill="#ff0000"/>
<path d="M814 29L818 25.6L822 29L818 32.4Z" fill="#ff0000"/>
<path d="M822 27L826 23.6L830 27L826 30.4Z" fill="#ff0000"/>
<path d="M829 32.7L833 29.3L837 32.7L833 36.1Z" fill="#ff0000"/>
<path d="M814 86L818 82.6L822 86L818 89.4Z" fill="#ff0000"/>
<path d="M846.6 86L850.6 82.6L854.6 86L850.6 89.4Z" fill="#ff0000"/>
<path d="M834 102L838 98.6L842 102L838 105.4Z" fill="#ff0000"/>
<path d="M838 104L842 100.6L846 104L842 107.4Z" fill="#ff0000"/>
<path d="M839 106L843 102.6L847 106L843 109.4Z" fill="#ff0000"/>
<path d="M854.9 106L858.9 102.6L862.9 106L858.9 109.4Z" fill="#ff0000"/>
<path d="M858 117.7L862 114.3L866 117.7L862 121.1Z" fill="#ff0000"/>
<path d="M861 120L865 116.6L869 120L865 123.4Z" fill="#ff0000"/>
<path d="M784.5 83.2L788 80L791.5 83.2L788 86.4Z" fill="#ff0000"/>
<path d="M799.2 82.1L802.7 78.9L806.2 82.1L802.7 85.3Z" fill="#ff0000"/>
<path d="M786.2 83.5L789.7 80.3L793.2 83.5L789.7 86.7Z" fill="#ff0000"/>
<path d="M776.2 82.6L779.7 79.4L783.2 82.6L779.7 85.8Z" fill="#ff0000"/>
<path d="M790 85.7L793.5 82.5L797 85.7L793.5 88.9Z" fill="#ff0000"/>
<path d="M773.4 80.3L776.9 77.1L780.4 80.3L776.9 83.5Z" fill="#ff0000"/>
<path d="M773.3 85.9L776.8 82.7L780.3 85.9L776.8 89.1Z" fill="#ff0000"/>
<path d="M792 77.5L795.5 74.3L799 77.5L795.5 80.7Z" fill="#ff0000"/>
<path d="M800.9 87.6L804.4 84.4L807.9 87.6L804.4 90.8Z" fill="#ff0000"/>
<path d="M790.8 83.8L794.3 80.6L797.8 83.8L794.3 87Z" fill="#ff0000"/>
<path d="M775.4 77.2L778.9 74L782.4 77.2L778.9 80.4Z" fill="#ff0000"/>
<path d="M786.9 77.7L790.4 74.5L793.9 77.7L790.4 80.9Z" fill="#ff0000"/>
<path d="M776.4 79.7L779.9 76.5L783.4 79.7L779.9 82.9Z" fill="#ff0000"/>
<path d="M771.4 82.1L774.9 78.9L778.4 82.1L774.9 85.3Z" fill="#ff0000"/>
<path d="M784.2 86.3L787.7 83.1L791.2 86.3L787.7 89.5Z" fill="#ff0000"/>
<path d="M786.6 84L790.1 80.8L793.6 84L790.1 87.2Z" fill="#ff0000"/>
<path d="M786 84.3L789.5 81.1L793 84.3L789.5 87.5Z" fill="#ff0000"/>
<path d="M784.7 80.1L788.2 76.9L791.7 80.1L788.2 83.3Z" fill="#ff0000"/>
<path d="M801.4 88L804.9 84.8L808.4 88L804.9 91.2Z" fill="#ff0000"/>
<path d="M796.5 84.8L800 81.6L803.5 84.8L800 88Z" fill="#ff0000"/>
<path d="M780.3 79.5L783.8 76.3L787.3 79.5L783.8 82.7Z" fill="#ff0000"/>
<path d="M779.5 77.8L783 74.6L786.5 77.8L783 81Z" fill="#ff0000"/>
<path d="M794.3 81.4L797.8 78.2L801.3 81.4L797.8 84.6Z" fill="#ff0000"/>
<path d="M796.7 81.3L800.2 78.1L803.7 81.3L800.2 84.5Z" fill="#ff0000"/>
<path d="M800.2 86.3L803.7 83.1L807.2 86.3L803.7 89.5Z" fill="#ff0000"/>
<path d="M770.5 79.3L774 76.1L777.5 79.3L774 82.5Z" fill="#ff0000"/>
<path d="M798.7 82.2L802.2 79L805.7 82.2L802.2 85.4Z" fill="#ff0000"/>
<path d="M800.9 81.4L804.4 78.2L807.9 81.4L804.4 84.6Z" fill="#ff0000"/>
<path d="M772.8 83.9L776.3 80.7L779.8 83.9L776.3 87.1Z" fill="#ff0000"/>
<path d="M794.6 80L798.1 76.8L801.6 80L798.1 83.2Z" fill="#ff0000"/>
<path d="M773.2 80.7L776.7 77.5L780.2 80.7L776.7 83.9Z" fill="#ff0000"/>
<path d="M800.4 85.3L803.9 82.1L807.4 85.3L803.9 88.5Z" fill="#ff0000"/>
<path d="M774.2 79.7L777.7 76.5L781.2 79.7L777.7 82.9Z" fill="#ff0000"/>
<path d="M773.6 77.7L777.1 74.5L780.6 77.7L777.1 80.9Z" fill="#ff0000"/>
<path d="M795.2 79L798.7 75.8L802.2 79L798.7 82.2Z" fill="#ff0000"/>
<path d="M787.8 81.9L791.3 78.7L794.8 81.9L791.3 85.1Z" fill="#ff0000"/>
<path d="M776.4 85.1L779.9 81.9L783.4 85.1L779.9 88.3Z" fill="#ff0000"/>
<path d="M774.6 84.1L778.1 80.9L781.6 84.1L778.1 87.3Z" fill="#ff0000"/>
<path d="M774.1 81.6L777.6 78.4L781.1 81.6L777.6 84.8Z" fill="#ff0000"/>
<path d="M777.1 80L780.6 76.8L784.1 80L780.6 83.2Z" fill="#ff0000"/>
<path d="M800.6 85.8L804.1 82.6L807.6 85.8L804.1 89Z" fill="#ff0000"/>
<path d="M779.9 86.7L783.4 83.5L786.9 86.7L783.4 89.9Z" fill="#ff0000"/>
<path d="M777 81.3L780.5 78.1L784 81.3L780.5 84.5Z" fill="#ff0000"/>
<path d="M797 84.1L800.5 80.9L804 84.1L800.5 87.3Z" fill="#ff0000"/>
<path d="M773.6 87.9L777.1 84.7L780.6 87.9L777.1 91.1Z" fill="#ff0000"/>
<path d="M777.1 79.8L780.6 76.6L784.1 79.8L780.6 83Z" fill="#ff0000"/>
<path d="M794.5 80.6L798 77.4L801.5 80.6L798 83.8Z" fill="#ff0000"/>
<path d="M779.7 77.8L783.2 74.6L786.7 77.8L783.2 81Z" fill="#ff0000"/>
<path d="M773.3 83.4L776.8 80.2L780.3 83.4L776.8 86.6Z" fill="#ff0000"/>
<path d="M778 83.6L781.5 80.4L785 83.6L781.5 86.8Z" fill="#ff0000"/>
<path d="M782 82L785.5 78.8L789 82L785.5 85.2Z" fill="#ff0000"/>
<path d="M800.2 82.3L803.7 79.1L807.2 82.3L803.7 85.5Z" fill="#ff0000"/>
<path d="M788.3 86.5L791.8 83.3L795.3 86.5L791.8 89.7Z" fill="#ff0000"/>
<path d="M776.2 78.7L779.7 75.5L783.2 78.7L779.7 81.9Z" fill="#ff0000"/>
<path d="M798.7 86L802.2 82.8L805.7 86L802.2 89.2Z" fill="#ff0000"/>
<path d="M778.2 79.1L781.7 75.9L785.2 79.1L781.7 82.3Z" fill="#ff0000"/>
<path d="M793.4 87.3L796.9 84.1L800.4 87.3L796.9 90.5Z" fill="#ff0000"/>
<path d="M776.6 87.5L780.1 84.3L783.6 87.5L780.1 90.7Z" fill="#ff0000"/>
<path d="M797.8 83.6L801.3 80.4L804.8 83.6L801.3 86.8Z" fill="#ff0000"/>
<path d="M783.6 78.1L787.1 74.9L790.6 78.1L787.1 81.3Z" fill="#ff0000"/>
<path d="M771.7 87.6L775.2 84.4L778.7 87.6L775.2 90.8Z" fill="#ff0000"/>
<path d="M777.9 84.8L781.4 81.6L784.9 84.8L781.4 88Z" fill="#ff0000"/>
<path d="M778.5 86.1L782 82.9L785.5 86.1L782 89.3Z" fill="#ff0000"/>
<path d="M789 80.2L792.5 77L796 80.2L792.5 83.4Z" fill="#ff0000"/>
<path d="M775.9 84.9L779.4 81.7L782.9 84.9L779.4 88.1Z" fill="#ff0000"/>
<path d="M772.6 79.5L776.1 76.3L779.6 79.5L776.1 82.7Z" fill="#ff0000"/>
<path d="M787.8 86.4L791.3 83.2L794.8 86.4L791.3 89.6Z" fill="#ff0000"/>
<path d="M789.5 80.1L793 76.9L796.5 80.1L793 83.3Z" fill="#ff0000"/>
<path d="M798.9 79.2L802.4 76L805.9 79.2L802.4 82.4Z" fill="#ff0000"/>
<path d="M771 80L774.5 76.8L778 80L774.5 83.2Z" fill="#ff0000"/>
<path d="M784.3 77.7L787.8 74.5L791.3 77.7L787.8 80.9Z" fill="#ff0000"/>
<path d="M776 81.1L779.5 77.9L783 81.1L779.5 84.3Z" fill="#ff0000"/>
<path d="M788.2 78.4L791.7 75.2L795.2 78.4L791.7 81.6Z" fill="#ff0000"/>
<path d="M781.7 86.8L785.2 83.6L788.7 86.8L785.2 90Z" fill="#ff0000"/>
<path d="M800.9 84.2L804.4 81L807.9 84.2L804.4 87.4Z" fill="#ff0000"/>
<path d="M791.9 83.4L795.4 80.2L798.9 83.4L795.4 86.6Z" fill="#ff0000"/>
<path d="M774.9 77.4L778.4 74.2L781.9 77.4L778.4 80.6Z" fill="#ff0000"/>
<path d="M771.1 87L774.6 83.8L778.1 87L774.6 90.2Z" fill="#ff0000"/>
<path d="M792.2 87.6L795.7 84.4L799.2 87.6L795.7 90.8Z" fill="#ff0000"/>
<path d="M771.2 84L774.7 80.8L778.2 84L774.7 87.2Z" fill="#ff0000"/>
<path d="M785.4 85L788.9 81.8L792.4 85L788.9 88.2Z" fill="#ff0000"/>
<path d="M780.4 88L783.9 84.8L787.4 88L783.9 91.2Z" fill="#ff0000"/>
<path d="M772.8 83L776.3 79.8L779.8 83L776.3 86.2Z" fill="#ff0000"/>
<path d="M793.3 86.9L796.8 83.7L800.3 86.9L796.8 90.1Z" fill="#ff0000"/>
<path d="M793.3 84.7L796.8 81.5L800.3 84.7L796.8 87.9Z" fill="#ff0000"/>
<path d="M795.1 87.1L798.6 83.9L802.1 87.1L798.6 90.3Z" fill="#ff0000"/>
<path d="M781.4 84.5L784.9 81.3L788.4 84.5L784.9 87.7Z" fill="#ff0000"/>
<path d="M798.4 86.6L801.9 83.4L805.4 86.6L801.9 89.8Z" fill="#ff0000"/>
<path d="M783.4 85.7L786.9 82.5L790.4 85.7L786.9 88.9Z" fill="#ff0000"/>
<path d="M797.3 83.3L800.8 80.1L804.3 83.3L800.8 86.5Z" fill="#ff0000"/>
<path d="M789.4 91.1L792.9 87.9L796.4 91.1L792.9 94.3Z" fill="#ff0000"/>
<path d="M788.2 92.9L791.7 89.7L795.2 92.9L791.7 96.1Z" fill="#ff0000"/>
<path d="M774.7 93.1L778.2 89.9L781.7 93.1L778.2 96.3Z" fill="#ff0000"/>
<path d="M799.3 95L802.8 91.8L806.3 95L802.8 98.2Z" fill="#ff0000"/>
<path d="M792.2 91.1L795.7 87.9L799.2 91.1L795.7 94.3Z" fill="#ff0000"/>
<path d="M792.3 92.6L795.8 89.4L799.3 92.6L795.8 95.8Z" fill="#ff0000"/>
<path d="M784.4 94.7L787.9 91.5L791.4 94.7L787.9 97.9Z" fill="#ff0000"/>
<path d="M774.8 94L778.3 90.8L781.8 94L778.3 97.2Z" fill="#ff0000"/>
<path d="M773.3 92.8L776.8 89.6L780.3 92.8L776.8 96Z" fill="#ff0000"/>
<path d="M785.5 89.8L789 86.6L792.5 89.8L789 93Z" fill="#ff0000"/>
<path d="M791.4 92L794.9 88.8L798.4 92L794.9 95.2Z" fill="#ff0000"/>
<path d="M789.1 95.4L792.6 92.2L796.1 95.4L792.6 98.6Z" fill="#ff0000"/>
<path d="M779.4 88.1L782.9 84.9L786.4 88.1L782.9 91.3Z" fill="#ff0000"/>
<path d="M780.6 93.4L784.1 90.2L787.6 93.4L784.1 96.6Z" fill="#ff0000"/>
<path d="M778 89.4L781.5 86.2L785 89.4L781.5 92.6Z" fill="#ff0000"/>
<path d="M797 93.3L800.5 90.1L804 93.3L800.5 96.5Z" fill="#ff0000"/>
<path d="M784.4 95.1L787.9 91.9L791.4 95.1L787.9 98.3Z" fill="#ff0000"/>
<path d="M781.3 93.3L784.8 90.1L788.3 93.3L784.8 96.5Z" fill="#ff0000"/>
<path d="M777.9 91.4L781.4 88.2L784.9 91.4L781.4 94.6Z" fill="#ff0000"/>
<path d="M794.3 95.3L797.8 92.1L801.3 95.3L797.8 98.5Z" fill="#ff0000"/>
<path d="M796.3 91.1L799.8 87.9L803.3 91.1L799.8 94.3Z" fill="#ff0000"/>
<path d="M788.2 90.5L791.7 87.3L795.2 90.5L791.7 93.7Z" fill="#ff0000"/>
<path d="M776.2 92L779.7 88.8L783.2 92L779.7 95.2Z" fill="#ff0000"/>
<path d="M795.1 94.8L798.6 91.6L802.1 94.8L798.6 98Z" fill="#ff0000"/>
<path d="M791.7 95.6L795.2 92.4L798.7 95.6L795.2 98.8Z" fill="#ff0000"/>
<path d="M814 85.5L817.5 82.3L821 85.5L817.5 88.7Z" fill="#ff0000"/>
<path d="M887.3 87.3L890.8 84.1L894.3 87.3L890.8 90.5Z" fill="#ff0000"/>
<path d="M898.1 84.2L901.6 81L905.1 84.2L901.6 87.4Z" fill="#ff0000"/>
<path d="M888.5 88.9L892 85.7L895.5 88.9L892 92.1Z" fill="#ff0000"/>
<path d="M902.1 84.7L905.6 81.5L909.1 84.7L905.6 87.9Z" fill="#ff0000"/>
<path d="M895.1 80.5L898.6 77.3L902.1 80.5L898.6 83.7Z" fill="#ff0000"/>
<path d="M883.6 82.6L887.1 79.4L890.6 82.6L887.1 85.8Z" fill="#ff0000"/>
<path d="M897 78L900.5 74.8L904 78L900.5 81.2Z" fill="#ff0000"/>
<path d="M901.8 80.5L905.3 77.3L908.8 80.5L905.3 83.7Z" fill="#ff0000"/>
<path d="M888.9 77.6L892.4 74.4L895.9 77.6L892.4 80.8Z" fill="#ff0000"/>
<path d="M906.4 88.1L909.9 84.9L913.4 88.1L909.9 91.3Z" fill="#ff0000"/>
<path d="M903.6 86.2L907.1 83L910.6 86.2L907.1 89.4Z" fill="#ff0000"/>
<path d="M884.3 81.9L887.8 78.7L891.3 81.9L887.8 85.1Z" fill="#ff0000"/>
<path d="M894.9 78.7L898.4 75.5L901.9 78.7L898.4 81.9Z" fill="#ff0000"/>
<path d="M905.4 82.5L908.9 79.3L912.4 82.5L908.9 85.7Z" fill="#ff0000"/>
<path d="M887.1 89.3L890.6 86.1L894.1 89.3L890.6 92.5Z" fill="#ff0000"/>
<path d="M886.4 90.9L889.9 87.7L893.4 90.9L889.9 94.1Z" fill="#ff0000"/>
<path d="M893.9 85.3L897.4 82.1L900.9 85.3L897.4 88.5Z" fill="#ff0000"/>
<path d="M891.4 84.3L894.9 81.1L898.4 84.3L894.9 87.5Z" fill="#ff0000"/>
<path d="M887.8 77.6L891.3 74.4L894.8 77.6L891.3 80.8Z" fill="#ff0000"/>
<path d="M903.4 80.5L906.9 77.3L910.4 80.5L906.9 83.7Z" fill="#ff0000"/>
<path d="M901.4 80.1L904.9 76.9L908.4 80.1L904.9 83.3Z" fill="#ff0000"/>
<path d="M905.8 90.4L909.3 87.2L912.8 90.4L909.3 93.6Z" fill="#ff0000"/>
<path d="M900.9 88.4L904.4 85.2L907.9 88.4L904.4 91.6Z" fill="#ff0000"/>
<path d="M896.9 87.9L900.4 84.7L903.9 87.9L900.4 91.1Z" fill="#ff0000"/>
<path d="M886.3 84.1L889.8 80.9L893.3 84.1L889.8 87.3Z" fill="#ff0000"/>
<path d="M902.5 80L906 76.8L909.5 80L906 83.2Z" fill="#ff0000"/>
<path d="M904.7 90.3L908.2 87.1L911.7 90.3L908.2 93.5Z" fill="#ff0000"/>
<path d="M892.9 82.5L896.4 79.3L899.9 82.5L896.4 85.7Z" fill="#ff0000"/>
<path d="M893.9 82.8L897.4 79.6L900.9 82.8L897.4 86Z" fill="#ff0000"/>
<path d="M906.4 82.8L909.9 79.6L913.4 82.8L909.9 86Z" fill="#ff0000"/>
<path d="M884.1 78.4L887.6 75.2L891.1 78.4L887.6 81.6Z" fill="#ff0000"/>
<path d="M900 91.9L903.5 88.7L907 91.9L903.5 95.1Z" fill="#ff0000"/>
<path d="M894.9 84.4L898.4 81.2L901.9 84.4L898.4 87.6Z" fill="#ff0000"/>
<path d="M896.2 88.2L899.7 85L903.2 88.2L899.7 91.4Z" fill="#ff0000"/>
<path d="M888.6 86.1L892.1 82.9L895.6 86.1L892.1 89.3Z" fill="#ff0000"/>
<path d="M896.3 86.3L899.8 83.1L903.3 86.3L899.8 89.5Z" fill="#ff0000"/>
<path d="M887.7 79.6L891.2 76.4L894.7 79.6L891.2 82.8Z" fill="#ff0000"/>
<path d="M891.5 90.9L895 87.7L898.5 90.9L895 94.1Z" fill="#ff0000"/>
<path d="M891.5 86L895 82.8L898.5 86L895 89.2Z" fill="#ff0000"/>
<path d="M890.6 78.5L894.1 75.3L897.6 78.5L894.1 81.7Z" fill="#ff0000"/>
<path d="M885 89.2L888.5 86L892 89.2L888.5 92.4Z" fill="#ff0000"/>
<path d="M901.4 82.6L904.9 79.4L908.4 82.6L904.9 85.8Z" fill="#ff0000"/>
<path d="M899.2 87.1L902.7 83.9L906.2 87.1L902.7 90.3Z" fill="#ff0000"/>
<path d="M904.2 91.4L907.7 88.2L911.2 91.4L907.7 94.6Z" fill="#ff0000"/>
<path d="M892.9 91.8L896.4 88.6L899.9 91.8L896.4 95Z" fill="#ff0000"/>
<path d="M905.6 85.9L909.1 82.7L912.6 85.9L909.1 89.1Z" fill="#ff0000"/>
<path d="M903.8 84.4L907.3 81.2L910.8 84.4L907.3 87.6Z" fill="#ff0000"/>
<path d="M892.1 80.7L895.6 77.5L899.1 80.7L895.6 83.9Z" fill="#ff0000"/>
<path d="M903.7 79.4L907.2 76.2L910.7 79.4L907.2 82.6Z" fill="#ff0000"/>
<path d="M885.1 89.1L888.6 85.9L892.1 89.1L888.6 92.3Z" fill="#ff0000"/>
<path d="M901.3 84.2L904.8 81L908.3 84.2L904.8 87.4Z" fill="#ff0000"/>
<path d="M902.8 77.8L906.3 74.6L909.8 77.8L906.3 81Z" fill="#ff0000"/>
<path d="M889.4 81.3L892.9 78.1L896.4 81.3L892.9 84.5Z" fill="#ff0000"/>
<path d="M893.1 79.6L896.6 76.4L900.1 79.6L896.6 82.8Z" fill="#ff0000"/>
<path d="M885.1 82.1L888.6 78.9L892.1 82.1L888.6 85.3Z" fill="#ff0000"/>
<path d="M904.2 91.8L907.7 88.6L911.2 91.8L907.7 95Z" fill="#ff0000"/>
<path d="M900.7 84.2L904.2 81L907.7 84.2L904.2 87.4Z" fill="#ff0000"/>
<path d="M889.3 91.4L892.8 88.2L896.3 91.4L892.8 94.6Z" fill="#ff0000"/>
<path d="M895.6 87.9L899.1 84.7L902.6 87.9L899.1 91.1Z" fill="#ff0000"/>
<path d="M884.2 80.2L887.7 77L891.2 80.2L887.7 83.4Z" fill="#ff0000"/>
<path d="M902.8 88.9L906.3 85.7L909.8 88.9L906.3 92.1Z" fill="#ff0000"/>
<path d="M903.8 86L907.3 82.8L910.8 86L907.3 89.2Z" fill="#ff0000"/>
<path d="M893.3 85.7L896.8 82.5L900.3 85.7L896.8 88.9Z" fill="#ff0000"/>
<path d="M903 81.6L906.5 78.4L910 81.6L906.5 84.8Z" fill="#ff0000"/>
<path d="M895.8 81.1L899.3 77.9L902.8 81.1L899.3 84.3Z" fill="#ff0000"/>
<path d="M901.2 77.2L904.7 74L908.2 77.2L904.7 80.4Z" fill="#ff0000"/>
<path d="M899.3 91.3L902.8 88.1L906.3 91.3L902.8 94.5Z" fill="#ff0000"/>
<path d="M884 85.9L887.5 82.7L891 85.9L887.5 89.1Z" fill="#ff0000"/>
<path d="M898.3 89.8L901.8 86.6L905.3 89.8L901.8 93Z" fill="#ff0000"/>
<path d="M896.9 80.9L900.4 77.7L903.9 80.9L900.4 84.1Z" fill="#ff0000"/>
<path d="M873 87.5L876.5 84.3L880 87.5L876.5 90.7Z" fill="#ff0000"/>
<path d="M878.5 77.6L882 74.4L885.5 77.6L882 80.8Z" fill="#ff0000"/>
<path d="M869.5 77.1L873 73.9L876.5 77.1L873 80.3Z" fill="#ff0000"/>
<path d="M868.8 81.4L872.3 78.2L875.8 81.4L872.3 84.6Z" fill="#ff0000"/>
<path d="M870 86.4L873.5 83.2L877 86.4L873.5 89.6Z" fill="#ff0000"/>
<path d="M875.7 77.5L879.2 74.3L882.7 77.5L879.2 80.7Z" fill="#ff0000"/>
<path d="M874.4 79.9L877.9 76.7L881.4 79.9L877.9 83.1Z" fill="#ff0000"/>
<path d="M873.9 78.6L877.4 75.4L880.9 78.6L877.4 81.8Z" fill="#ff0000"/>
<path d="M870.3 78.2L873.8 75L877.3 78.2L873.8 81.4Z" fill="#ff0000"/>
<path d="M872.7 84.5L876.2 81.3L879.7 84.5L876.2 87.7Z" fill="#ff0000"/>
<path d="M874.6 76.6L878.1 73.4L881.6 76.6L878.1 79.8Z" fill="#ff0000"/>
<path d="M876.3 86.5L879.8 83.3L883.3 86.5L879.8 89.7Z" fill="#ff0000"/>
<path d="M877 85.5L880.5 82.3L884 85.5L880.5 88.7Z" fill="#ff0000"/>
<path d="M868.6 81.6L872.1 78.4L875.6 81.6L872.1 84.8Z" fill="#ff0000"/>
<path d="M869.2 85.2L872.7 82L876.2 85.2L872.7 88.4Z" fill="#ff0000"/>
<path d="M870.4 84.5L873.9 81.3L877.4 84.5L873.9 87.7Z" fill="#ff0000"/>
<path d="M886.5 107.4L890 104.2L893.5 107.4L890 110.6Z" fill="#ff0000"/>
<path d="M887 91L890.5 87.8L894 91L890.5 94.2Z" fill="#ff0000"/>
<path d="M887.6 97.7L891.1 94.5L894.6 97.7L891.1 100.9Z" fill="#ff0000"/>
<path d="M891.7 97.4L895.2 94.2L898.7 97.4L895.2 100.6Z" fill="#ff0000"/>
<path d="M888.5 103.7L892 100.5L895.5 103.7L892 106.9Z" fill="#ff0000"/>
<path d="M892.1 92.5L895.6 89.3L899.1 92.5L895.6 95.7Z" fill="#ff0000"/>
<path d="M889.3 102.7L892.8 99.5L896.3 102.7L892.8 105.9Z" fill="#ff0000"/>
<path d="M890.4 114.2L893.9 111L897.4 114.2L893.9 117.4Z" fill="#ff0000"/>
<path d="M887 107.5L890.5 104.3L894 107.5L890.5 110.7Z" fill="#ff0000"/>
<path d="M888.7 104L892.2 100.8L895.7 104L892.2 107.2Z" fill="#ff0000"/>
<path d="M885 110.4L888.5 107.2L892 110.4L888.5 113.6Z" fill="#ff0000"/>
<path d="M892.3 98.9L895.8 95.7L899.3 98.9L895.8 102.1Z" fill="#ff0000"/>
<path d="M887 114.8L890.5 111.6L894 114.8L890.5 118Z" fill="#ff0000"/>
<path d="M885.4 91.9L888.9 88.7L892.4 91.9L888.9 95.1Z" fill="#ff0000"/>
<path d="M885.1 110.4L888.6 107.2L892.1 110.4L888.6 113.6Z" fill="#ff0000"/>
<path d="M890.6 101.2L894.1 98L897.6 101.2L894.1 104.4Z" fill="#ff0000"/>
<path d="M889.5 90.5L893 87.3L896.5 90.5L893 93.7Z" fill="#ff0000"/>
<path d="M889.7 101.1L893.2 97.9L896.7 101.1L893.2 104.3Z" fill="#ff0000"/>
<path d="M888.6 99.7L892.1 96.5L895.6 99.7L892.1 102.9Z" fill="#ff0000"/>
<path d="M887.7 95.6L891.2 92.4L894.7 95.6L891.2 98.8Z" fill="#ff0000"/>
<path d="M884.9 100.8L888.4 97.6L891.9 100.8L888.4 104Z" fill="#ff0000"/>
<path d="M886.5 107.6L890 104.4L893.5 107.6L890 110.8Z" fill="#ff0000"/>
<path d="M891 108.1L894.5 104.9L898 108.1L894.5 111.3Z" fill="#ff0000"/>
<path d="M888.1 95.9L891.6 92.7L895.1 95.9L891.6 99.1Z" fill="#ff0000"/>
<path d="M887.6 102.2L891.1 99L894.6 102.2L891.1 105.4Z" fill="#ff0000"/>
<path d="M902.7 102.5L906.2 99.3L909.7 102.5L906.2 105.7Z" fill="#ff0000"/>
<path d="M899.9 96.2L903.4 93L906.9 96.2L903.4 99.4Z" fill="#ff0000"/>
<path d="M902 99.3L905.5 96.1L909 99.3L905.5 102.5Z" fill="#ff0000"/>
<path d="M904 100.1L907.5 96.9L911 100.1L907.5 103.3Z" fill="#ff0000"/>
<path d="M902.6 99.9L906.1 96.7L909.6 99.9L906.1 103.1Z" fill="#ff0000"/>
<path d="M902.8 101.2L906.3 98L909.8 101.2L906.3 104.4Z" fill="#ff0000"/>
<path d="M903 98.9L906.5 95.7L910 98.9L906.5 102.1Z" fill="#ff0000"/>
<path d="M900.7 101.9L904.2 98.7L907.7 101.9L904.2 105.1Z" fill="#ff0000"/>
<path d="M901.4 98L904.9 94.8L908.4 98L904.9 101.2Z" fill="#ff0000"/>
<path d="M903.6 102.5L907.1 99.3L910.6 102.5L907.1 105.7Z" fill="#ff0000"/>
<path d="M904.4 90.1L907.9 86.9L911.4 90.1L907.9 93.3Z" fill="#ff0000"/>
<path d="M901.1 94.1L904.6 90.9L908.1 94.1L904.6 97.3Z" fill="#ff0000"/>
<path d="M877.9 57.9L881.9 54.5L885.9 57.9L881.9 61.3Z" fill="#ff0000"/>
<path d="M908.4 60.8L912.4 57.4L916.4 60.8L912.4 64.2Z" fill="#ff0000"/>
<path d="M868.9 71.8L872.9 68.4L876.9 71.8L872.9 75.2Z" fill="#ff0000"/>
<path d="M883 70.4L887 67L891 70.4L887 73.8Z" fill="#ff0000"/>
<path d="M911 80L915 76.6L919 80L915 83.4Z" fill="#ff0000"/>
<path d="M913.7 33L917.7 29.6L921.7 33L917.7 36.4Z" fill="#ff0000"/>
<path d="M911 125.6L915 122.2L919 125.6L915 129Z" fill="#ff0000"/>
<path d="M854 62L858 58.6L862 62L858 65.4Z" fill="#ff0000"/>
<path d="M876 58L880 54.6L884 58L880 61.4Z" fill="#ff0000"/>
<path d="M903.5 165L906.9 161.8L910.3 165L906.9 168.2Z" fill="#ff0000"/>
<path d="M904.2 166.1L907.6 162.9L911 166.1L907.6 169.3Z" fill="#ff0000"/>
<path d="M904.9 167.2L908.3 164L911.7 167.2L908.3 170.4Z" fill="#ff0000"/>
<path d="M905.6 168.3L909 165.1L912.4 168.3L909 171.5Z" fill="#ff0000"/>
<path d="M906.3 169.4L909.7 166.2L913.1 169.4L909.7 172.6Z" fill="#ff0000"/>
<path d="M907.1 170.5L910.5 167.3L913.9 170.5L910.5 173.7Z" fill="#ff0000"/>
<path d="M907.8 171.6L911.2 168.4L914.6 171.6L911.2 174.8Z" fill="#ff0000"/>
<path d="M908.5 172.7L911.9 169.5L915.3 172.7L911.9 175.9Z" fill="#ff0000"/>
<path d="M909.2 173.8L912.6 170.6L916 173.8L912.6 177Z" fill="#ff0000"/>
<path d="M909.9 174.9L913.3 171.7L916.7 174.9L913.3 178.1Z" fill="#ff0000"/>
<path d="M910.6 176L914 172.8L917.4 176L914 179.2Z" fill="#ff0000"/>
<path d="M910.6 176L914 172.8L917.4 176L914 179.2Z" fill="#ff0000"/>
<path d="M911.9 176.3L915.3 173.1L918.7 176.3L915.3 179.5Z" fill="#ff0000"/>
<path d="M913.3 176.7L916.7 173.5L920.1 176.7L916.7 179.9Z" fill="#ff0000"/>
<path d="M914.6 177L918 173.8L921.4 177L918 180.2Z" fill="#ff0000"/>
<path d="M915.9 177.3L919.3 174.1L922.7 177.3L919.3 180.5Z" fill="#ff0000"/>
<path d="M917.3 177.7L920.7 174.5L924.1 177.7L920.7 180.9Z" fill="#ff0000"/>
<path d="M918.6 178L922 174.8L925.4 178L922 181.2Z" fill="#ff0000"/>
<path d="M918.6 178L922 174.8L925.4 178L922 181.2Z" fill="#ff0000"/>
<path d="M919.6 179L923 175.8L926.4 179L923 182.2Z" fill="#ff0000"/>
<path d="M920.6 180L924 176.8L927.4 180L924 183.2Z" fill="#ff0000"/>
<path d="M921.6 181L925 177.8L928.4 181L925 184.2Z" fill="#ff0000"/>
<path d="M922.6 182L926 178.8L929.4 182L926 185.2Z" fill="#ff0000"/>
<path d="M923.6 183L927 179.8L930.4 183L927 186.2Z" fill="#ff0000"/>
<path d="M924.6 184L928 180.8L931.4 184L928 187.2Z" fill="#ff0000"/>
<path d="M925.6 185L929 181.8L932.4 185L929 188.2Z" fill="#ff0000"/>
<path d="M926.6 186L930 182.8L933.4 186L930 189.2Z" fill="#ff0000"/>
<path d="M926.6 186L930 182.8L933.4 186L930 189.2Z" fill="#ff0000"/>
<path d="M927.9 186.5L931.2 183.3L934.6 186.5L931.2 189.7Z" fill="#ff0000"/>
<path d="M929.1 187L932.5 183.8L935.9 187L932.5 190.2Z" fill="#ff0000"/>
<path d="M930.4 187.5L933.8 184.3L937.1 187.5L933.8 190.7Z" fill="#ff0000"/>
<path d="M931.6 188L935 184.8L938.4 188L935 191.2Z" fill="#ff0000"/>
<path d="M932.9 188.5L936.2 185.3L939.6 188.5L936.2 191.7Z" fill="#ff0000"/>
<path d="M934.1 189L937.5 185.8L940.9 189L937.5 192.2Z" fill="#ff0000"/>
<path d="M935.4 189.5L938.8 186.3L942.1 189.5L938.8 192.7Z" fill="#ff0000"/>
<path d="M936.6 190L940 186.8L943.4 190L940 193.2Z" fill="#ff0000"/>
<path d="M936.6 190L940 186.8L943.4 190L940 193.2Z" fill="#ff0000"/>
<path d="M937.7 190.9L941.1 187.7L944.5 190.9L941.1 194.1Z" fill="#ff0000"/>
<path d="M938.8 191.8L942.2 188.6L945.6 191.8L942.2 195Z" fill="#ff0000"/>
<path d="M939.9 192.7L943.3 189.5L946.7 192.7L943.3 195.9Z" fill="#ff0000"/>
<path d="M941 193.6L944.4 190.4L947.8 193.6L944.4 196.8Z" fill="#ff0000"/>
<path d="M942.2 194.4L945.6 191.2L949 194.4L945.6 197.6Z" fill="#ff0000"/>
<path d="M943.3 195.3L946.7 192.1L950.1 195.3L946.7 198.5Z" fill="#ff0000"/>
<path d="M944.4 196.2L947.8 193L951.2 196.2L947.8 199.4Z" fill="#ff0000"/>
<path d="M945.5 197.1L948.9 193.9L952.3 197.1L948.9 200.3Z" fill="#ff0000"/>
<path d="M946.6 198L950 194.8L953.4 198L950 201.2Z" fill="#ff0000"/>
<path d="M946.6 198L950 194.8L953.4 198L950 201.2Z" fill="#ff0000"/>
<path d="M947.9 198.6L951.2 195.4L954.6 198.6L951.2 201.8Z" fill="#ff0000"/>
<path d="M949.1 199.2L952.5 196.1L955.9 199.2L952.5 202.4Z" fill="#ff0000"/>
<path d="M950.4 199.9L953.8 196.7L957.1 199.9L953.8 203.1Z" fill="#ff0000"/>
<path d="M951.6 200.5L955 197.3L958.4 200.5L955 203.7Z" fill="#ff0000"/>
<path d="M952.9 201.1L956.2 197.9L959.6 201.1L956.2 204.3Z" fill="#ff0000"/>
<path d="M954.1 201.8L957.5 198.6L960.9 201.8L957.5 204.9Z" fill="#ff0000"/>
<path d="M955.4 202.4L958.8 199.2L962.1 202.4L958.8 205.6Z" fill="#ff0000"/>
<path d="M956.6 203L960 199.8L963.4 203L960 206.2Z" fill="#ff0000"/>
<path d="M956.6 203L960 199.8L963.4 203L960 206.2Z" fill="#ff0000"/>
<path d="M957.5 203.9L960.9 200.7L964.3 203.9L960.9 207.1Z" fill="#ff0000"/>
<path d="M958.4 204.9L961.8 201.7L965.2 204.9L961.8 208.1Z" fill="#ff0000"/>
<path d="M959.4 205.8L962.8 202.6L966.2 205.8L962.8 209Z" fill="#ff0000"/>
<path d="M960.3 206.7L963.7 203.5L967.1 206.7L963.7 209.9Z" fill="#ff0000"/>
<path d="M961.2 207.7L964.6 204.5L968 207.7L964.6 210.9Z" fill="#ff0000"/>
<path d="M962.1 208.6L965.5 205.4L968.9 208.6L965.5 211.8Z" fill="#ff0000"/>
<path d="M963.1 209.5L966.5 206.3L969.9 209.5L966.5 212.7Z" fill="#ff0000"/>
<path d="M964 210.5L967.4 207.3L970.8 210.5L967.4 213.7Z" fill="#ff0000"/>
<path d="M964.9 211.4L968.3 208.2L971.7 211.4L968.3 214.6Z" fill="#ff0000"/>
<path d="M965.8 212.3L969.2 209.1L972.6 212.3L969.2 215.5Z" fill="#ff0000"/>
<path d="M966.7 213.3L970.1 210.1L973.5 213.3L970.1 216.5Z" fill="#ff0000"/>
<path d="M967.7 214.2L971.1 211L974.5 214.2L971.1 217.4Z" fill="#ff0000"/>
<path d="M968.6 215.1L972 211.9L975.4 215.1L972 218.3Z" fill="#ff0000"/>
<path d="M969.5 216.1L972.9 212.9L976.3 216.1L972.9 219.3Z" fill="#ff0000"/>
<path d="M970.4 217L973.8 213.8L977.2 217L973.8 220.2Z" fill="#ff0000"/>
<path d="M971.4 217.9L974.8 214.7L978.2 217.9L974.8 221.1Z" fill="#ff0000"/>
<path d="M972.3 218.9L975.7 215.7L979.1 218.9L975.7 222.1Z" fill="#ff0000"/>
<path d="M973.2 219.8L976.6 216.6L980 219.8L976.6 223Z" fill="#ff0000"/>
<path d="M904.3 168L907.5 165L910.7 168L907.5 171Z" fill="#ff0000"/>
<path d="M905.2 169.5L908.4 166.5L911.6 169.5L908.4 172.5Z" fill="#ff0000"/>
<path d="M906.2 171L909.4 168L912.6 171L909.4 174Z" fill="#ff0000"/>
<path d="M907.1 172.5L910.3 169.5L913.5 172.5L910.3 175.5Z" fill="#ff0000"/>
<path d="M908 174L911.2 171L914.5 174L911.2 177Z" fill="#ff0000"/>
<path d="M909 175.5L912.2 172.5L915.4 175.5L912.2 178.5Z" fill="#ff0000"/>
<path d="M909.9 177L913.1 174L916.3 177L913.1 180Z" fill="#ff0000"/>
<path d="M910.9 178.5L914.1 175.5L917.3 178.5L914.1 181.5Z" fill="#ff0000"/>
<path d="M911.8 180L915 177L918.2 180L915 183Z" fill="#ff0000"/>
<path d="M911.8 180L915 177L918.2 180L915 183Z" fill="#ff0000"/>
<path d="M913.2 180.8L916.4 177.8L919.6 180.8L916.4 183.8Z" fill="#ff0000"/>
<path d="M914.7 181.6L917.9 178.6L921.1 181.6L917.9 184.6Z" fill="#ff0000"/>
<path d="M916.1 182.4L919.3 179.4L922.5 182.4L919.3 185.4Z" fill="#ff0000"/>
<path d="M917.5 183.1L920.7 180.1L923.9 183.1L920.7 186.1Z" fill="#ff0000"/>
<path d="M918.9 183.9L922.1 180.9L925.3 183.9L922.1 186.9Z" fill="#ff0000"/>
<path d="M920.4 184.7L923.6 181.7L926.8 184.7L923.6 187.7Z" fill="#ff0000"/>
<path d="M921.8 185.5L925 182.5L928.2 185.5L925 188.5Z" fill="#ff0000"/>
<path d="M923.2 186.3L926.4 183.3L929.6 186.3L926.4 189.3Z" fill="#ff0000"/>
<path d="M924.7 187.1L927.9 184.1L931.1 187.1L927.9 190.1Z" fill="#ff0000"/>
<path d="M926.1 187.9L929.3 184.9L932.5 187.9L929.3 190.9Z" fill="#ff0000"/>
<path d="M927.5 188.6L930.7 185.6L933.9 188.6L930.7 191.6Z" fill="#ff0000"/>
<path d="M928.9 189.4L932.1 186.4L935.3 189.4L932.1 192.4Z" fill="#ff0000"/>
<path d="M930.4 190.2L933.6 187.2L936.8 190.2L933.6 193.2Z" fill="#ff0000"/>
<path d="M931.8 191L935 188L938.2 191L935 194Z" fill="#ff0000"/>
<path d="M931.8 191L935 188L938.2 191L935 194Z" fill="#ff0000"/>
<path d="M933.2 191.9L936.4 188.9L939.6 191.9L936.4 194.9Z" fill="#ff0000"/>
<path d="M934.7 192.7L937.9 189.7L941.1 192.7L937.9 195.7Z" fill="#ff0000"/>
<path d="M936.1 193.6L939.3 190.6L942.5 193.6L939.3 196.6Z" fill="#ff0000"/>
<path d="M937.5 194.4L940.7 191.4L943.9 194.4L940.7 197.4Z" fill="#ff0000"/>
<path d="M938.9 195.3L942.1 192.3L945.3 195.3L942.1 198.3Z" fill="#ff0000"/>
<path d="M940.4 196.1L943.6 193.1L946.8 196.1L943.6 199.1Z" fill="#ff0000"/>
<path d="M941.8 197L945 194L948.2 197L945 200Z" fill="#ff0000"/>
<path d="M943.2 197.9L946.4 194.9L949.6 197.9L946.4 200.9Z" fill="#ff0000"/>
<path d="M944.7 198.7L947.9 195.7L951.1 198.7L947.9 201.7Z" fill="#ff0000"/>
<path d="M946.1 199.6L949.3 196.6L952.5 199.6L949.3 202.6Z" fill="#ff0000"/>
<path d="M947.5 200.4L950.7 197.4L953.9 200.4L950.7 203.4Z" fill="#ff0000"/>
<path d="M948.9 201.3L952.1 198.3L955.3 201.3L952.1 204.3Z" fill="#ff0000"/>
<path d="M950.4 202.1L953.6 199.1L956.8 202.1L953.6 205.1Z" fill="#ff0000"/>
<path d="M951.8 203L955 200L958.2 203L955 206Z" fill="#ff0000"/>
<path d="M951.8 203L955 200L958.2 203L955 206Z" fill="#ff0000"/>
<path d="M953 204.1L956.2 201.1L959.5 204.1L956.2 207.1Z" fill="#ff0000"/>
<path d="M954.3 205.2L957.5 202.2L960.7 205.2L957.5 208.2Z" fill="#ff0000"/>
<path d="M955.5 206.4L958.8 203.4L962 206.4L958.8 209.4Z" fill="#ff0000"/>
<path d="M956.8 207.5L960 204.5L963.2 207.5L960 210.5Z" fill="#ff0000"/>
<path d="M958 208.6L961.2 205.6L964.5 208.6L961.2 211.6Z" fill="#ff0000"/>
<path d="M959.3 209.8L962.5 206.8L965.7 209.8L962.5 212.8Z" fill="#ff0000"/>
<path d="M960.5 210.9L963.8 207.9L967 210.9L963.8 213.9Z" fill="#ff0000"/>
<path d="M961.8 212L965 209L968.2 212L965 215Z" fill="#ff0000"/>
<path d="M963 213.1L966.2 210.1L969.5 213.1L966.2 216.1Z" fill="#ff0000"/>
<path d="M964.3 214.2L967.5 211.2L970.7 214.2L967.5 217.2Z" fill="#ff0000"/>
<path d="M965.5 215.4L968.8 212.4L972 215.4L968.8 218.4Z" fill="#ff0000"/>
<path d="M966.8 216.5L970 213.5L973.2 216.5L970 219.5Z" fill="#ff0000"/>
<path d="M968 217.6L971.2 214.6L974.5 217.6L971.2 220.6Z" fill="#ff0000"/>
<path d="M969.3 218.8L972.5 215.8L975.7 218.8L972.5 221.8Z" fill="#ff0000"/>
<path d="M970.5 219.9L973.8 216.9L977 219.9L973.8 222.9Z" fill="#ff0000"/>
<path d="M971.8 221L975 218L978.2 221L975 224Z" fill="#ff0000"/>
<path d="M971.5 172.4L974.7 169.4L977.9 172.4L974.7 175.4Z" fill="#ff0000"/>
<path d="M972 173.8L975.2 170.8L978.4 173.8L975.2 176.8Z" fill="#ff0000"/>
<path d="M972.5 175.3L975.7 172.3L978.9 175.3L975.7 178.3Z" fill="#ff0000"/>
<path d="M973 176.7L976.2 173.7L979.4 176.7L976.2 179.7Z" fill="#ff0000"/>
<path d="M973.5 178.1L976.7 175.1L979.9 178.1L976.7 181.1Z" fill="#ff0000"/>
<path d="M974 179.6L977.2 176.6L980.4 179.6L977.2 182.6Z" fill="#ff0000"/>
<path d="M974.5 181L977.7 178L980.9 181L977.7 184Z" fill="#ff0000"/>
<path d="M975 182.5L978.2 179.5L981.4 182.5L978.2 185.5Z" fill="#ff0000"/>
<path d="M975.5 183.9L978.7 180.9L981.9 183.9L978.7 186.9Z" fill="#ff0000"/>
<path d="M976.1 185.3L979.3 182.3L982.5 185.3L979.3 188.3Z" fill="#ff0000"/>
<path d="M976.6 186.8L979.8 183.8L983 186.8L979.8 189.8Z" fill="#ff0000"/>
<path d="M977.1 188.2L980.3 185.2L983.5 188.2L980.3 191.2Z" fill="#ff0000"/>
<path d="M977.6 189.6L980.8 186.6L984 189.6L980.8 192.6Z" fill="#ff0000"/>
<path d="M978.1 191.1L981.3 188.1L984.5 191.1L981.3 194.1Z" fill="#ff0000"/>
<path d="M978.6 192.5L981.8 189.5L985 192.5L981.8 195.5Z" fill="#ff0000"/>
<path d="M979.1 193.9L982.3 190.9L985.5 193.9L982.3 196.9Z" fill="#ff0000"/>
<path d="M979.6 195.4L982.8 192.4L986 195.4L982.8 198.4Z" fill="#ff0000"/>
<path d="M980.1 196.8L983.3 193.8L986.5 196.8L983.3 199.8Z" fill="#ff0000"/>
<path d="M980.6 198.3L983.8 195.3L987 198.3L983.8 201.3Z" fill="#ff0000"/>
<path d="M981.1 199.7L984.3 196.7L987.5 199.7L984.3 202.7Z" fill="#ff0000"/>
<path d="M981.6 201.1L984.8 198.1L988 201.1L984.8 204.1Z" fill="#ff0000"/>
<path d="M982.1 202.6L985.3 199.6L988.5 202.6L985.3 205.6Z" fill="#ff0000"/>
<path d="M982.6 204L985.8 201L989 204L985.8 207Z" fill="#ff0000"/>
<path d="M983.1 205.4L986.3 202.4L989.5 205.4L986.3 208.4Z" fill="#ff0000"/>
<path d="M983.6 206.9L986.8 203.9L990 206.9L986.8 209.9Z" fill="#ff0000"/>
<path d="M984.2 208.3L987.4 205.3L990.6 208.3L987.4 211.3Z" fill="#ff0000"/>
<path d="M984.7 209.7L987.9 206.7L991.1 209.7L987.9 212.7Z" fill="#ff0000"/>
<path d="M985.2 211.2L988.4 208.2L991.6 211.2L988.4 214.2Z" fill="#ff0000"/>
<path d="M985.7 212.6L988.9 209.6L992.1 212.6L988.9 215.6Z" fill="#ff0000"/>
<path d="M986.2 214.1L989.4 211.1L992.6 214.1L989.4 217.1Z" fill="#ff0000"/>
<path d="M986.7 215.5L989.9 212.5L993.1 215.5L989.9 218.5Z" fill="#ff0000"/>
<path d="M987.2 216.9L990.4 213.9L993.6 216.9L990.4 219.9Z" fill="#ff0000"/>
<path d="M987.7 218.4L990.9 215.4L994.1 218.4L990.9 221.4Z" fill="#ff0000"/>
<path d="M988.2 219.8L991.4 216.8L994.6 219.8L991.4 222.8Z" fill="#ff0000"/>
<path d="M972.8 172.4L976 169.4L979.2 172.4L976 175.4Z" fill="#ff0000"/>
<path d="M973.4 174.1L976.6 171.1L979.8 174.1L976.6 177.1Z" fill="#ff0000"/>
<path d="M974 175.9L977.2 172.9L980.4 175.9L977.2 178.9Z" fill="#ff0000"/>
<path d="M974.6 177.6L977.8 174.6L981 177.6L977.8 180.6Z" fill="#ff0000"/>
<path d="M975.2 179.3L978.4 176.3L981.6 179.3L978.4 182.3Z" fill="#ff0000"/>
<path d="M975.8 181L979 178L982.2 181L979 184Z" fill="#ff0000"/>
<path d="M976.4 182.8L979.6 179.8L982.8 182.8L979.6 185.8Z" fill="#ff0000"/>
<path d="M977.1 184.5L980.3 181.5L983.5 184.5L980.3 187.5Z" fill="#ff0000"/>
<path d="M977.7 186.2L980.9 183.2L984.1 186.2L980.9 189.2Z" fill="#ff0000"/>
<path d="M978.3 187.9L981.5 184.9L984.7 187.9L981.5 190.9Z" fill="#ff0000"/>
<path d="M978.9 189.7L982.1 186.7L985.3 189.7L982.1 192.7Z" fill="#ff0000"/>
<path d="M979.5 191.4L982.7 188.4L985.9 191.4L982.7 194.4Z" fill="#ff0000"/>
<path d="M980.1 193.1L983.3 190.1L986.5 193.1L983.3 196.1Z" fill="#ff0000"/>
<path d="M980.7 194.8L983.9 191.8L987.1 194.8L983.9 197.8Z" fill="#ff0000"/>
<path d="M981.3 196.6L984.5 193.6L987.7 196.6L984.5 199.6Z" fill="#ff0000"/>
<path d="M981.9 198.3L985.1 195.3L988.3 198.3L985.1 201.3Z" fill="#ff0000"/>
<path d="M982.5 200L985.7 197L988.9 200L985.7 203Z" fill="#ff0000"/>
<path d="M983.1 201.7L986.3 198.7L989.5 201.7L986.3 204.7Z" fill="#ff0000"/>
<path d="M983.7 203.5L986.9 200.5L990.1 203.5L986.9 206.5Z" fill="#ff0000"/>
<path d="M984.3 205.2L987.5 202.2L990.7 205.2L987.5 208.2Z" fill="#ff0000"/>
<path d="M984.9 206.9L988.1 203.9L991.3 206.9L988.1 209.9Z" fill="#ff0000"/>
<path d="M985.6 208.6L988.8 205.6L992 208.6L988.8 211.6Z" fill="#ff0000"/>
<path d="M986.2 210.4L989.4 207.4L992.6 210.4L989.4 213.4Z" fill="#ff0000"/>
<path d="M986.8 212.1L990 209.1L993.2 212.1L990 215.1Z" fill="#ff0000"/>
<path d="M987.4 213.8L990.6 210.8L993.8 213.8L990.6 216.8Z" fill="#ff0000"/>
<path d="M988 215.5L991.2 212.5L994.4 215.5L991.2 218.5Z" fill="#ff0000"/>
<path d="M988.6 217.3L991.8 214.3L995 217.3L991.8 220.3Z" fill="#ff0000"/>
<path d="M989.2 219L992.4 216L995.6 219L992.4 222Z" fill="#ff0000"/>
<path d="M986.9 184.5L990.5 181.1L994.1 184.5L990.5 187.9Z" fill="#ff0000"/>
<path d="M987.9 185.2L991.5 181.8L995.1 185.2L991.5 188.7Z" fill="#ff0000"/>
<path d="M988.8 186L992.4 182.6L996 186L992.4 189.4Z" fill="#ff0000"/>
<path d="M989.8 186.8L993.4 183.3L997 186.8L993.4 190.2Z" fill="#ff0000"/>
<path d="M990.7 187.5L994.3 184.1L997.9 187.5L994.3 190.9Z" fill="#ff0000"/>
<path d="M991.6 188.2L995.2 184.8L998.9 188.2L995.2 191.7Z" fill="#ff0000"/>
<path d="M992.6 189L996.2 185.6L999.8 189L996.2 192.4Z" fill="#ff0000"/>
<path d="M993.5 189.8L997.1 186.3L1000.8 189.8L997.1 193.2Z" fill="#ff0000"/>
<path d="M994.5 190.5L998.1 187.1L1001.7 190.5L998.1 193.9Z" fill="#ff0000"/>
<path d="M995.4 191.2L999 187.8L1002.6 191.2L999 194.7Z" fill="#ff0000"/>
<path d="M996.4 192L1000 188.6L1003.6 192L1000 195.4Z" fill="#ff0000"/>
<path d="M996.4 192L1000 188.6L1003.6 192L1000 195.4Z" fill="#ff0000"/>
<path d="M997.6 192.2L1001.2 188.8L1004.9 192.2L1001.2 195.7Z" fill="#ff0000"/>
<path d="M998.9 192.5L1002.5 189.1L1006.1 192.5L1002.5 195.9Z" fill="#ff0000"/>
<path d="M1000.1 192.8L1003.8 189.3L1007.4 192.8L1003.8 196.2Z" fill="#ff0000"/>
<path d="M1001.4 193L1005 189.6L1008.6 193L1005 196.4Z" fill="#ff0000"/>
<path d="M1002.6 193.2L1006.2 189.8L1009.9 193.2L1006.2 196.7Z" fill="#ff0000"/>
<path d="M1003.9 193.5L1007.5 190.1L1011.1 193.5L1007.5 196.9Z" fill="#ff0000"/>
<path d="M1005.1 193.8L1008.8 190.3L1012.4 193.8L1008.8 197.2Z" fill="#ff0000"/>
<path d="M1006.4 194L1010 190.6L1013.6 194L1010 197.4Z" fill="#ff0000"/>
<path d="M1006.4 194L1010 190.6L1013.6 194L1010 197.4Z" fill="#ff0000"/>
<path d="M1007.4 194.7L1011 191.3L1014.6 194.7L1011 198.1Z" fill="#ff0000"/>
<path d="M1008.5 195.4L1012.1 192L1015.7 195.4L1012.1 198.8Z" fill="#ff0000"/>
<path d="M1009.5 196.2L1013.1 192.8L1016.7 196.2L1013.1 199.6Z" fill="#ff0000"/>
<path d="M1010.5 196.9L1014.1 193.5L1017.7 196.9L1014.1 200.3Z" fill="#ff0000"/>
<path d="M1011.5 197.6L1015.1 194.2L1018.8 197.6L1015.1 201Z" fill="#ff0000"/>
<path d="M1012.6 198.3L1016.2 194.9L1019.8 198.3L1016.2 201.7Z" fill="#ff0000"/>
<path d="M1013.6 199L1017.2 195.6L1020.8 199L1017.2 202.4Z" fill="#ff0000"/>
<path d="M1014.6 199.8L1018.2 196.4L1021.8 199.8L1018.2 203.2Z" fill="#ff0000"/>
<path d="M1015.7 200.5L1019.3 197.1L1022.9 200.5L1019.3 203.9Z" fill="#ff0000"/>
<path d="M1016.7 201.2L1020.3 197.8L1023.9 201.2L1020.3 204.6Z" fill="#ff0000"/>
<path d="M987.6 188L991 184.8L994.4 188L991 191.2Z" fill="#ff0000"/>
<path d="M988.8 188.9L992.2 185.7L995.6 188.9L992.2 192.1Z" fill="#ff0000"/>
<path d="M990 189.8L993.4 186.6L996.8 189.8L993.4 193Z" fill="#ff0000"/>
<path d="M991.3 190.7L994.7 187.5L998.1 190.7L994.7 193.9Z" fill="#ff0000"/>
<path d="M992.5 191.6L995.9 188.4L999.3 191.6L995.9 194.8Z" fill="#ff0000"/>
<path d="M993.7 192.4L997.1 189.2L1000.5 192.4L997.1 195.6Z" fill="#ff0000"/>
<path d="M994.9 193.3L998.3 190.1L1001.7 193.3L998.3 196.5Z" fill="#ff0000"/>
<path d="M996.2 194.2L999.6 191L1003 194.2L999.6 197.4Z" fill="#ff0000"/>
<path d="M997.4 195.1L1000.8 191.9L1004.2 195.1L1000.8 198.3Z" fill="#ff0000"/>
<path d="M998.6 196L1002 192.8L1005.4 196L1002 199.2Z" fill="#ff0000"/>
<path d="M998.6 196L1002 192.8L1005.4 196L1002 199.2Z" fill="#ff0000"/>
<path d="M1000.3 196.5L1003.7 193.3L1007.1 196.5L1003.7 199.7Z" fill="#ff0000"/>
<path d="M1001.9 197L1005.3 193.8L1008.7 197L1005.3 200.2Z" fill="#ff0000"/>
<path d="M1003.6 197.5L1007 194.3L1010.4 197.5L1007 200.7Z" fill="#ff0000"/>
<path d="M1005.3 198L1008.7 194.8L1012.1 198L1008.7 201.2Z" fill="#ff0000"/>
<path d="M1006.9 198.5L1010.3 195.3L1013.7 198.5L1010.3 201.7Z" fill="#ff0000"/>
<path d="M1008.6 199L1012 195.8L1015.4 199L1012 202.2Z" fill="#ff0000"/>
<path d="M1008.6 199L1012 195.8L1015.4 199L1012 202.2Z" fill="#ff0000"/>
<path d="M1010.2 199.8L1013.6 196.6L1017 199.8L1013.6 203Z" fill="#ff0000"/>
<path d="M1011.8 200.6L1015.2 197.4L1018.6 200.6L1015.2 203.8Z" fill="#ff0000"/>
<path d="M1013.4 201.4L1016.8 198.2L1020.2 201.4L1016.8 204.6Z" fill="#ff0000"/>
<path d="M1015 202.2L1018.4 199L1021.8 202.2L1018.4 205.4Z" fill="#ff0000"/>
<path d="M1016.6 203L1020 199.8L1023.4 203L1020 206.2Z" fill="#ff0000"/>
<path d="M913.2 32.7L917 29.4L920.8 32.7L917 36Z" fill="#ff0000"/>
<path d="M920.9 37.8L924.7 34.5L928.5 37.8L924.7 41.1Z" fill="#ff0000"/>
<path d="M925.9 44.9L929.7 41.6L933.5 44.9L929.7 48.2Z" fill="#ff0000"/>
<path d="M931 46.1L934.8 42.8L938.6 46.1L934.8 49.4Z" fill="#ff0000"/>
<path d="M937.4 46.6L941.2 43.3L945 46.6L941.2 49.9Z" fill="#ff0000"/>
<path d="M947.5 54.5L951.3 51.2L955.1 54.5L951.3 57.8Z" fill="#ff0000"/>
<path d="M952.6 60.6L956.4 57.3L960.2 60.6L956.4 63.9Z" fill="#ff0000"/>
<path d="M961.5 63.9L965.3 60.6L969.1 63.9L965.3 67.2Z" fill="#ff0000"/>
<path d="M964 67.7L967.8 64.4L971.6 67.7L967.8 71Z" fill="#ff0000"/>
<path d="M970.4 69.8L974.2 66.5L978 69.8L974.2 73.1Z" fill="#ff0000"/>
<path d="M989.5 54.5L993.3 51.2L997.1 54.5L993.3 57.8Z" fill="#ff0000"/>
<path d="M993.3 54.5L997.1 51.2L1000.9 54.5L997.1 57.8Z" fill="#ff0000"/>
<path d="M998.3 55L1002.1 51.7L1005.9 55L1002.1 58.3Z" fill="#ff0000"/>
<path d="M1002.2 55.5L1006 52.2L1009.8 55.5L1006 58.8Z" fill="#ff0000"/>
<path d="M1007.2 55.5L1011 52.2L1014.8 55.5L1011 58.8Z" fill="#ff0000"/>
<path d="M1014.9 54.5L1018.7 51.2L1022.5 54.5L1018.7 57.8Z" fill="#ff0000"/>
<path d="M1022.5 57.6L1026.3 54.3L1030.1 57.6L1026.3 60.9Z" fill="#ff0000"/>
<path d="M1014.9 80.9L1018.7 77.6L1022.5 80.9L1018.7 84.2Z" fill="#ff0000"/>
<path d="M1019.9 80.9L1023.7 77.6L1027.5 80.9L1023.7 84.2Z" fill="#ff0000"/>
<path d="M1025 80.4L1028.8 77.1L1032.6 80.4L1028.8 83.7Z" fill="#ff0000"/>
<path d="M1030.1 80.9L1033.9 77.6L1037.7 80.9L1033.9 84.2Z" fill="#ff0000"/>
<path d="M908.2 60.6L912 57.3L915.8 60.6L912 63.9Z" fill="#ff0000"/>
<path d="M919.1 63.9L922.9 60.6L926.7 63.9L922.9 67.2Z" fill="#ff0000"/>
<path d="M919.1 67.7L922.9 64.4L926.7 67.7L922.9 71Z" fill="#ff0000"/>
<path d="M933.6 60.6L937.4 57.3L941.2 60.6L937.4 63.9Z" fill="#ff0000"/>
<path d="M939.9 60.6L943.7 57.3L947.5 60.6L943.7 63.9Z" fill="#ff0000"/>
<path d="M943.7 77.9L947.5 74.6L951.3 77.9L947.5 81.2Z" fill="#ff0000"/>
<path d="M955.2 83L959 79.7L962.8 83L959 86.3Z" fill="#ff0000"/>
<path d="M957.7 74.6L961.5 71.3L965.3 74.6L961.5 77.9Z" fill="#ff0000"/>
<path d="M972.9 77.9L976.7 74.6L980.5 77.9L976.7 81.2Z" fill="#ff0000"/>
<path d="M967.1 91.1L970.9 87.8L974.7 91.1L970.9 94.4Z" fill="#ff0000"/>
<path d="M988.2 100.8L992 97.5L995.8 100.8L992 104.1Z" fill="#ff0000"/>
<path d="M975.5 122.4L979.3 119.1L983.1 122.4L979.3 125.7Z" fill="#ff0000"/>
<path d="M993.3 128.7L997.1 125.4L1000.9 128.7L997.1 132Z" fill="#ff0000"/>
<path d="M1002.2 133.8L1006 130.5L1009.8 133.8L1006 137.1Z" fill="#ff0000"/>
<path d="M1008.5 133.8L1012.3 130.5L1016.1 133.8L1012.3 137.1Z" fill="#ff0000"/>
<path d="M1012.3 139.4L1016.1 136.1L1019.9 139.4L1016.1 142.7Z" fill="#ff0000"/>
<path d="M1018.7 139.4L1022.5 136.1L1026.3 139.4L1022.5 142.7Z" fill="#ff0000"/>
<path d="M934.8 119.8L938.6 116.5L942.4 119.8L938.6 123.1Z" fill="#ff0000"/>
<path d="M932.3 123.6L936.1 120.3L939.9 123.6L936.1 126.9Z" fill="#ff0000"/>
<path d="M923.4 124.9L927.2 121.6L931 124.9L927.2 128.2Z" fill="#ff0000"/>
<path d="M910.7 125.7L914.5 122.4L918.3 125.7L914.5 129Z" fill="#ff0000"/>
<path d="M936.1 131.2L939.9 127.9L943.7 131.2L939.9 134.5Z" fill="#ff0000"/>
<path d="M951.3 131.8L955.1 128.5L958.9 131.8L955.1 135.1Z" fill="#ff0000"/>
<path d="M942.5 139.4L946.2 136.1L950 139.4L946.2 142.7Z" fill="#ff0000"/>
<path d="M952.6 142.7L956.4 139.4L960.2 142.7L956.4 146Z" fill="#ff0000"/>
<path d="M957.7 136.8L961.5 133.5L965.3 136.8L961.5 140.1Z" fill="#ff0000"/>
<path d="M971.7 145.7L975.5 142.4L979.3 145.7L975.5 149Z" fill="#ff0000"/>
<path d="M967.9 153.6L971.7 150.3L975.5 153.6L971.7 156.9Z" fill="#ff0000"/>
<path d="M987.7 160L991.5 156.7L995.3 160L991.5 163.3Z" fill="#ff0000"/>
<path d="M814.1 85.5L817.9 82.2L821.7 85.5L817.9 88.8Z" fill="#ff0000"/>
<path d="M846.4 85.5L850.2 82.2L854 85.5L850.2 88.8Z" fill="#ff0000"/>
<path d="M837 103.3L840.8 100L844.6 103.3L840.8 106.6Z" fill="#ff0000"/>
<path d="M854.8 105.3L858.6 102L862.4 105.3L858.6 108.6Z" fill="#ff0000"/>
<path d="M858.6 118L862.4 114.7L866.2 118L862.4 121.3Z" fill="#ff0000"/>
<path d="M859.9 119.8L863.7 116.5L867.5 119.8L863.7 123.1Z" fill="#ff0000"/>
<path d="M877.7 57.6L881.5 54.3L885.3 57.6L881.5 60.9Z" fill="#ff0000"/>
<path d="M868.8 71.5L872.6 68.2L876.4 71.5L872.6 74.8Z" fill="#ff0000"/>
<path d="M883.5 69.5L887.3 66.2L891.1 69.5L887.3 72.8Z" fill="#ff0000"/>
<path d="M872.6 79.2L876.4 75.9L880.2 79.2L876.4 82.5Z" fill="#ff0000"/>
<path d="M877.7 76.6L881.5 73.3L885.3 76.6L881.5 79.9Z" fill="#ff0000"/>
<path d="M870 83L873.8 79.7L877.6 83L873.8 86.3Z" fill="#ff0000"/>
<path d="M876.4 168.1L880.2 164.8L884 168.1L880.2 171.4Z" fill="#ff0000"/>
<path d="M873.9 161.7L877.7 158.4L881.5 161.7L877.7 165Z" fill="#ff0000"/>
<path d="M861.1 163L864.9 159.7L868.7 163L864.9 166.3Z" fill="#ff0000"/>
<path d="M882.7 170.6L886.5 167.3L890.3 170.6L886.5 173.9Z" fill="#ff0000"/>
<path d="M844.6 167.3L848.4 164L852.2 167.3L848.4 170.6Z" fill="#ff0000"/>
<g fill="#c0c0c0" stroke="#ffffff" stroke-width="1.5" shape-rendering="crispEdges">
<circle cx="553.8" cy="289.9" r="5.9"/>
<circle cx="555.1" cy="301.4" r="5.9"/>
<circle cx="556.4" cy="311.5" r="5.9"/>
<circle cx="570.3" cy="326.8" r="5.9"/>
<circle cx="572.9" cy="340.8" r="5.9"/>
<circle cx="575.4" cy="354.7" r="5.9"/>
<circle cx="576.7" cy="367.4" r="5.9"/>
<circle cx="581.8" cy="373.8" r="5.9"/>
<circle cx="581.8" cy="382.7" r="5.9"/>
<circle cx="583" cy="396.7" r="5.9"/>
<circle cx="584.3" cy="410.6" r="5.9"/>
<circle cx="586.8" cy="418.3" r="5.9"/>
<circle cx="623.7" cy="382.7" r="5.9"/>
<circle cx="574.1" cy="361.1" r="5.9"/>
<circle cx="584.3" cy="400" r="5.9"/>
<circle cx="584.3" cy="411.4" r="5.9"/>
<circle cx="586.8" cy="421.6" r="5.9"/>
<circle cx="590.7" cy="430.5" r="5.9"/>
<circle cx="588.1" cy="444.5" r="5.9"/>
<circle cx="591.9" cy="444.5" r="5.9"/>
<circle cx="595.7" cy="445.7" r="5.9"/>
<circle cx="599.5" cy="447" r="5.9"/>
<circle cx="608.4" cy="452.1" r="5.9"/>
<circle cx="609.7" cy="457.9" r="5.9"/>
<circle cx="611" cy="463.5" r="5.9"/>
<circle cx="613.5" cy="473.7" r="5.9"/>
<circle cx="617.3" cy="483.8" r="5.9"/>
<circle cx="623.7" cy="482.6" r="5.9"/>
<circle cx="618.6" cy="496.5" r="5.9"/>
<circle cx="630" cy="495.3" r="5.9"/>
<circle cx="631.3" cy="499.1" r="5.9"/>
<circle cx="655.4" cy="504.2" r="5.9"/>
<circle cx="678.3" cy="501.6" r="5.9"/>
<circle cx="677" cy="509.2" r="5.9"/>
<circle cx="683.4" cy="513.1" r="5.9"/>
<circle cx="674.5" cy="519.4" r="5.9"/>
<circle cx="672" cy="527" r="5.9"/>
<circle cx="679.6" cy="524.5" r="5.9"/>
<circle cx="684.7" cy="529.6" r="5.9"/>
<circle cx="688.5" cy="537.2" r="5.9"/>
<circle cx="692.3" cy="543.5" r="5.9"/>
<circle cx="694.8" cy="552.4" r="5.9"/>
<circle cx="684.7" cy="552.4" r="5.9"/>
<circle cx="688.5" cy="553.7" r="5.9"/>
<circle cx="693.5" cy="566.4" r="5.9"/>
<circle cx="695.3" cy="580.4" r="5.9"/>
<circle cx="760.9" cy="518.9" r="5.9"/>
<circle cx="631.3" cy="516.1" r="5.9"/>
<circle cx="633.6" cy="515.6" r="5.9"/>
<circle cx="635.9" cy="515" r="5.9"/>
<circle cx="638.2" cy="517.3" r="5.9"/>
<circle cx="640.4" cy="516.8" r="5.9"/>
<circle cx="642.7" cy="516.2" r="5.9"/>
<circle cx="645" cy="515.7" r="5.9"/>
<circle cx="647.3" cy="518" r="5.9"/>
<circle cx="649.6" cy="517.4" r="5.9"/>
<circle cx="651.9" cy="516.9" r="5.9"/>
<circle cx="654.2" cy="519.2" r="5.9"/>
<circle cx="656.5" cy="518.6" r="5.9"/>
<circle cx="658.7" cy="518.1" r="5.9"/>
<circle cx="661" cy="517.6" r="5.9"/>
<circle cx="663.3" cy="519.8" r="5.9"/>
<circle cx="665.6" cy="519.3" r="5.9"/>
<circle cx="667.9" cy="518.8" r="5.9"/>
<circle cx="670.2" cy="518.2" r="5.9"/>
<circle cx="1032.7" cy="160" r="5.9"/>
<circle cx="1032.7" cy="172.4" r="5.9"/>
<circle cx="1025" cy="198.4" r="5.9"/>
<circle cx="1025" cy="210.9" r="5.9"/>
<circle cx="1025" cy="267.2" r="5.9"/>
<circle cx="866.9" cy="263.4" r="5.9"/>
<circle cx="18" cy="88.8" r="5.9"/>
<circle cx="19.6" cy="100.3" r="5.9"/>
<circle cx="25" cy="107.3" r="5.9"/>
<circle cx="28.8" cy="108.8" r="5.9"/>
<circle cx="34.2" cy="111.9" r="5.9"/>
<circle cx="17.2" cy="116.5" r="5.9"/>
<circle cx="20.3" cy="119.6" r="5.9"/>
<circle cx="15.7" cy="122.7" r="5.9"/>
<circle cx="56.6" cy="125.8" r="5.9"/>
<circle cx="65.8" cy="128.1" r="5.9"/>
<circle cx="85.1" cy="145" r="5.9"/>
<circle cx="94.3" cy="162" r="5.9"/>
<circle cx="97.4" cy="176.6" r="5.9"/>
<circle cx="102" cy="178.2" r="5.9"/>
<circle cx="98.2" cy="191.3" r="5.9"/>
<circle cx="108.2" cy="148.9" r="5.9"/>
<circle cx="108.2" cy="158.1" r="5.9"/>
<circle cx="112.8" cy="164.3" r="5.9"/>
<circle cx="115.9" cy="170.5" r="5.9"/>
<circle cx="116.7" cy="182.8" r="5.9"/>
<circle cx="109.7" cy="178.2" r="5.9"/>
<circle cx="134.4" cy="142.7" r="5.9"/>
<circle cx="146.7" cy="142.7" r="5.9"/>
<circle cx="156" cy="168.9" r="5.9"/>
<circle cx="154.4" cy="176.6" r="5.9"/>
<circle cx="157.5" cy="184.4" r="5.9"/>
<circle cx="162.1" cy="195.1" r="5.9"/>
<circle cx="169.8" cy="167.4" r="5.9"/>
<circle cx="168.3" cy="178.2" r="5.9"/>
<circle cx="171.4" cy="185.9" r="5.9"/>
<circle cx="171.4" cy="131.2" r="5.9"/>
<circle cx="168.3" cy="131.9" r="5.9"/>
<circle cx="171.4" cy="150.4" r="5.9"/>
<circle cx="167.5" cy="150.4" r="5.9"/>
<circle cx="176" cy="116.5" r="5.9"/>
<circle cx="176" cy="101.1" r="5.9"/>
<circle cx="176" cy="87.2" r="5.9"/>
<circle cx="163.7" cy="189" r="5.9"/>
<circle cx="14.3" cy="123.8" r="5.9"/>
<circle cx="18.1" cy="124.2" r="5.9"/>
<circle cx="22.6" cy="124.9" r="5.9"/>
<circle cx="26.9" cy="124.6" r="5.9"/>
<circle cx="30.5" cy="124.8" r="5.9"/>
<circle cx="34.5" cy="125.5" r="5.9"/>
<circle cx="38.4" cy="125.5" r="5.9"/>
<circle cx="43.1" cy="126.1" r="5.9"/>
<circle cx="46.8" cy="126.4" r="5.9"/>
<circle cx="51.4" cy="126.1" r="5.9"/>
<circle cx="22.2" cy="129.1" r="5.9"/>
<circle cx="27.8" cy="128.4" r="5.9"/>
<circle cx="34.8" cy="128.7" r="5.9"/>
<circle cx="39.9" cy="128.4" r="5.9"/>
<circle cx="47" cy="129" r="5.9"/>
<circle cx="43.8" cy="139.2" r="5.9"/>
<circle cx="47.3" cy="140" r="5.9"/>
<circle cx="51" cy="140.1" r="5.9"/>
<circle cx="55.4" cy="140.8" r="5.9"/>
<circle cx="59.3" cy="141.3" r="5.9"/>
<circle cx="63" cy="141.2" r="5.9"/>
<circle cx="66.2" cy="142.1" r="5.9"/>
<circle cx="69.9" cy="142.6" r="5.9"/>
<circle cx="73.8" cy="143.2" r="5.9"/>
<circle cx="48.2" cy="144.1" r="5.9"/>
<circle cx="52.8" cy="144.7" r="5.9"/>
<circle cx="57.7" cy="146.4" r="5.9"/>
<circle cx="63.1" cy="146.7" r="5.9"/>
<circle cx="67.4" cy="147.6" r="5.9"/>
<circle cx="72.3" cy="148" r="5.9"/>
<circle cx="62.5" cy="150.6" r="5.9"/>
<circle cx="65.6" cy="151.9" r="5.9"/>
<circle cx="69.6" cy="153.2" r="5.9"/>
<circle cx="72.4" cy="153.5" r="5.9"/>
<circle cx="76.1" cy="155" r="5.9"/>
<circle cx="79.6" cy="157" r="5.9"/>
<circle cx="84" cy="157.4" r="5.9"/>
<circle cx="87.3" cy="158.7" r="5.9"/>
<circle cx="91.2" cy="160" r="5.9"/>
<circle cx="94" cy="160.9" r="5.9"/>
<circle cx="69.7" cy="157.9" r="5.9"/>
<circle cx="74.1" cy="159.9" r="5.9"/>
<circle cx="78.2" cy="160.3" r="5.9"/>
<circle cx="83.2" cy="161.9" r="5.9"/>
<circle cx="86.4" cy="162.5" r="5.9"/>
<circle cx="90.7" cy="164.5" r="5.9"/>
<circle cx="91.6" cy="170.4" r="5.9"/>
<circle cx="98.4" cy="171.1" r="5.9"/>
<circle cx="107.3" cy="172.1" r="5.9"/>
<circle cx="104.1" cy="150.9" r="5.9"/>
<circle cx="108.1" cy="150.7" r="5.9"/>
<circle cx="114.1" cy="150.5" r="5.9"/>
<circle cx="118.7" cy="150.6" r="5.9"/>
<circle cx="113.8" cy="155" r="5.9"/>
<circle cx="117.5" cy="155.8" r="5.9"/>
<circle cx="121.4" cy="154.7" r="5.9"/>
<circle cx="124.1" cy="154.6" r="5.9"/>
<circle cx="127.9" cy="155.6" r="5.9"/>
<circle cx="130.2" cy="155.3" r="5.9"/>
<circle cx="133.9" cy="154.5" r="5.9"/>
<circle cx="137.4" cy="155.1" r="5.9"/>
<circle cx="140.7" cy="155.1" r="5.9"/>
<circle cx="142.7" cy="154.8" r="5.9"/>
<circle cx="146" cy="155.7" r="5.9"/>
<circle cx="119.6" cy="161.7" r="5.9"/>
<circle cx="123.6" cy="160.5" r="5.9"/>
<circle cx="129.4" cy="161.9" r="5.9"/>
<circle cx="133.1" cy="161.2" r="5.9"/>
<circle cx="138" cy="161.6" r="5.9"/>
<circle cx="144" cy="160.7" r="5.9"/>
<circle cx="131.3" cy="149" r="5.9"/>
<circle cx="137.2" cy="149.4" r="5.9"/>
<circle cx="143.5" cy="148.5" r="5.9"/>
<circle cx="149.8" cy="149.2" r="5.9"/>
<circle cx="146.3" cy="164.1" r="5.9"/>
<circle cx="152.5" cy="166.6" r="5.9"/>
<circle cx="156.9" cy="168.4" r="5.9"/>
<circle cx="161.7" cy="170.1" r="5.9"/>
<circle cx="151.1" cy="173.7" r="5.9"/>
<circle cx="155.1" cy="177.3" r="5.9"/>
<circle cx="159" cy="181.9" r="5.9"/>
<circle cx="163.3" cy="186.4" r="5.9"/>
<circle cx="181.7" cy="77.3" r="5.9"/>
<circle cx="183.8" cy="91.4" r="5.9"/>
<circle cx="182.8" cy="102.3" r="5.9"/>
<circle cx="183.8" cy="115.3" r="5.9"/>
<circle cx="179.5" cy="117.4" r="5.9"/>
<circle cx="186" cy="125" r="5.9"/>
<circle cx="170.8" cy="131.5" r="5.9"/>
<circle cx="178.4" cy="130.4" r="5.9"/>
<circle cx="188.2" cy="135.9" r="5.9"/>
<circle cx="170.8" cy="149.9" r="5.9"/>
<circle cx="178.4" cy="149.9" r="5.9"/>
<circle cx="188.2" cy="148.9" r="5.9"/>
<circle cx="197.9" cy="153.2" r="5.9"/>
<circle cx="202.3" cy="153.2" r="5.9"/>
<circle cx="169.8" cy="166.2" r="5.9"/>
<circle cx="197.9" cy="161.9" r="5.9"/>
<circle cx="203.3" cy="167.3" r="5.9"/>
<circle cx="168.7" cy="177" r="5.9"/>
<circle cx="206.6" cy="177" r="5.9"/>
<circle cx="196.8" cy="184.6" r="5.9"/>
<circle cx="167.6" cy="187.9" r="5.9"/>
<circle cx="197.9" cy="192.2" r="5.9"/>
<circle cx="208.8" cy="193.3" r="5.9"/>
<circle cx="166.5" cy="194.4" r="5.9"/>
<circle cx="233.7" cy="192.2" r="5.9"/>
<circle cx="225" cy="198.7" r="5.9"/>
<circle cx="214.2" cy="209.5" r="5.9"/>
<circle cx="225" cy="209.5" r="5.9"/>
<circle cx="231.5" cy="218.2" r="5.9"/>
<circle cx="214.2" cy="220.4" r="5.9"/>
<circle cx="225" cy="224.7" r="5.9"/>
<circle cx="218.5" cy="231.2" r="5.9"/>
<circle cx="229.4" cy="231.2" r="5.9"/>
<circle cx="178.4" cy="81.7" r="5.9"/>
<circle cx="180.6" cy="96.8" r="5.9"/>
<circle cx="177.3" cy="109.8" r="5.9"/>
<circle cx="181.7" cy="122.9" r="5.9"/>
<circle cx="192.5" cy="157.5" r="5.9"/>
<circle cx="194.7" cy="172.7" r="5.9"/>
<circle cx="201.2" cy="181.4" r="5.9"/>
<circle cx="256.4" cy="75.2" r="5.9"/>
<circle cx="256.4" cy="88.2" r="5.9"/>
<circle cx="238" cy="88.2" r="5.9"/>
<circle cx="243.4" cy="97.9" r="5.9"/>
<circle cx="256.4" cy="106.6" r="5.9"/>
<circle cx="257.5" cy="112" r="5.9"/>
<circle cx="238" cy="122.9" r="5.9"/>
<circle cx="274.9" cy="119.6" r="5.9"/>
<circle cx="252.1" cy="125" r="5.9"/>
<circle cx="261.9" cy="125" r="5.9"/>
<circle cx="242.4" cy="133.7" r="5.9"/>
<circle cx="251" cy="133.7" r="5.9"/>
<circle cx="259.7" cy="135.9" r="5.9"/>
<circle cx="268.4" cy="134.8" r="5.9"/>
<circle cx="276" cy="134.8" r="5.9"/>
<circle cx="235.9" cy="149.9" r="5.9"/>
<circle cx="244.5" cy="148.9" r="5.9"/>
<circle cx="253.2" cy="146.7" r="5.9"/>
<circle cx="261.9" cy="151" r="5.9"/>
<circle cx="270.5" cy="148.9" r="5.9"/>
<circle cx="278.1" cy="149.9" r="5.9"/>
<circle cx="282.5" cy="149.9" r="5.9"/>
<circle cx="235.9" cy="161.9" r="5.9"/>
<circle cx="245.6" cy="155.4" r="5.9"/>
<circle cx="272.7" cy="157.5" r="5.9"/>
<circle cx="281.4" cy="161.9" r="5.9"/>
<circle cx="245.6" cy="167.3" r="5.9"/>
<circle cx="261.9" cy="168.4" r="5.9"/>
<circle cx="236.9" cy="173.8" r="5.9"/>
<circle cx="251" cy="180.3" r="5.9"/>
<circle cx="260.8" cy="181.4" r="5.9"/>
<circle cx="285.7" cy="179.2" r="5.9"/>
<circle cx="254.3" cy="190" r="5.9"/>
<circle cx="285.7" cy="192.2" r="5.9"/>
<circle cx="287.9" cy="206.3" r="5.9"/>
<circle cx="290" cy="218.2" r="5.9"/>
<circle cx="296.5" cy="218.2" r="5.9"/>
<circle cx="292.2" cy="229.1" r="5.9"/>
<circle cx="246.7" cy="140.2" r="5.9"/>
<circle cx="255.4" cy="142.4" r="5.9"/>
<circle cx="264" cy="144.5" r="5.9"/>
<circle cx="268.4" cy="153.2" r="5.9"/>
<circle cx="274.9" cy="153.2" r="5.9"/>
<circle cx="248.9" cy="159.7" r="5.9"/>
<circle cx="257.5" cy="161.9" r="5.9"/>
<circle cx="266.2" cy="159.7" r="5.9"/>
<circle cx="277" cy="155.4" r="5.9"/>
<circle cx="255.4" cy="172.7" r="5.9"/>
<circle cx="241.3" cy="142.4" r="5.9"/>
<circle cx="286.3" cy="227.5" r="5.9"/>
<circle cx="295.9" cy="230.7" r="5.9"/>
<circle cx="309.8" cy="230.7" r="5.9"/>
<circle cx="287.6" cy="234.5" r="5.9"/>
<circle cx="365.7" cy="241.5" r="5.9"/>
<circle cx="377.1" cy="241.5" r="5.9"/>
<circle cx="347.9" cy="244" r="5.9"/>
<circle cx="382.8" cy="269.4" r="5.9"/>
<circle cx="401.8" cy="269.4" r="5.9"/>
<circle cx="417.1" cy="269.4" r="5.9"/>
<circle cx="370.1" cy="280.8" r="5.9"/>
<circle cx="383.4" cy="283.4" r="5.9"/>
<circle cx="402.5" cy="283.4" r="5.9"/>
<circle cx="371.4" cy="301.2" r="5.9"/>
<circle cx="382.8" cy="301.2" r="5.9"/>
<circle cx="389.2" cy="300.5" r="5.9"/>
<circle cx="406.9" cy="303.1" r="5.9"/>
<circle cx="399.3" cy="293.5" r="5.9"/>
<circle cx="418.3" cy="259.3" r="5.9"/>
<circle cx="418.3" cy="275.8" r="5.9"/>
<circle cx="414.5" cy="263.1" r="5.9"/>
<circle cx="289.8" cy="243.7" r="5.9"/>
<circle cx="292" cy="244.2" r="5.9"/>
<circle cx="294.7" cy="243.8" r="5.9"/>
<circle cx="297.9" cy="244.1" r="5.9"/>
<circle cx="300.2" cy="244.3" r="5.9"/>
<circle cx="303.1" cy="243.8" r="5.9"/>
<circle cx="305.3" cy="244" r="5.9"/>
<circle cx="308.2" cy="244" r="5.9"/>
<circle cx="311.1" cy="244.2" r="5.9"/>
<circle cx="314" cy="243.7" r="5.9"/>
<circle cx="316.2" cy="243.9" r="5.9"/>
<circle cx="319.2" cy="243.8" r="5.9"/>
<circle cx="321.4" cy="244" r="5.9"/>
<circle cx="324.2" cy="243.9" r="5.9"/>
<circle cx="326.8" cy="244.4" r="5.9"/>
<circle cx="290.1" cy="241.8" r="5.9"/>
<circle cx="297.8" cy="241.2" r="5.9"/>
<circle cx="305.8" cy="241.8" r="5.9"/>
<circle cx="331.2" cy="254.6" r="5.9"/>
<circle cx="333.5" cy="253.9" r="5.9"/>
<circle cx="335.4" cy="253.9" r="5.9"/>
<circle cx="337.7" cy="253.8" r="5.9"/>
<circle cx="340" cy="254.8" r="5.9"/>
<circle cx="342.2" cy="254.6" r="5.9"/>
<circle cx="344.8" cy="254.2" r="5.9"/>
<circle cx="347.6" cy="254.8" r="5.9"/>
<circle cx="349.5" cy="254.5" r="5.9"/>
<circle cx="351.5" cy="254.1" r="5.9"/>
<circle cx="354.6" cy="254.4" r="5.9"/>
<circle cx="356.5" cy="254.6" r="5.9"/>
<circle cx="358.4" cy="254.5" r="5.9"/>
<circle cx="361.2" cy="254.8" r="5.9"/>
<circle cx="363.2" cy="254.9" r="5.9"/>
<circle cx="365.4" cy="254.1" r="5.9"/>
<circle cx="368.3" cy="254.6" r="5.9"/>
<circle cx="370.2" cy="254.1" r="5.9"/>
<circle cx="373.2" cy="254.2" r="5.9"/>
<circle cx="375.3" cy="254.6" r="5.9"/>
<circle cx="377.4" cy="254.6" r="5.9"/>
<circle cx="379.9" cy="255" r="5.9"/>
<circle cx="381.9" cy="254.8" r="5.9"/>
<circle cx="384.3" cy="254.5" r="5.9"/>
<circle cx="387.1" cy="254.4" r="5.9"/>
<circle cx="389" cy="254.9" r="5.9"/>
<circle cx="391.1" cy="254.6" r="5.9"/>
<circle cx="394.4" cy="255.1" r="5.9"/>
<circle cx="395.8" cy="254.4" r="5.9"/>
<circle cx="398.3" cy="255.1" r="5.9"/>
<circle cx="401.3" cy="255.1" r="5.9"/>
<circle cx="403.1" cy="254.4" r="5.9"/>
<circle cx="405.9" cy="254.9" r="5.9"/>
<circle cx="408" cy="255.2" r="5.9"/>
<circle cx="410.4" cy="254.3" r="5.9"/>
<circle cx="412.9" cy="254.6" r="5.9"/>
<circle cx="415.1" cy="255.2" r="5.9"/>
<circle cx="416.9" cy="254.4" r="5.9"/>
<circle cx="419.2" cy="254.9" r="5.9"/>
<circle cx="333.1" cy="258.7" r="5.9"/>
<circle cx="336.4" cy="258.4" r="5.9"/>
<circle cx="339.2" cy="258.4" r="5.9"/>
<circle cx="341.9" cy="259.1" r="5.9"/>
<circle cx="345.2" cy="258.3" r="5.9"/>
<circle cx="347.6" cy="258.5" r="5.9"/>
<circle cx="350.1" cy="259" r="5.9"/>
<circle cx="353.6" cy="258.5" r="5.9"/>
<circle cx="356.6" cy="258.9" r="5.9"/>
<circle cx="359.1" cy="258.3" r="5.9"/>
<circle cx="361.6" cy="259.2" r="5.9"/>
<circle cx="365.4" cy="258.9" r="5.9"/>
<circle cx="368.2" cy="259" r="5.9"/>
<circle cx="370.3" cy="258.5" r="5.9"/>
<circle cx="373.4" cy="259.3" r="5.9"/>
<circle cx="376.8" cy="259.3" r="5.9"/>
<circle cx="379.7" cy="258.7" r="5.9"/>
<circle cx="382" cy="258.6" r="5.9"/>
<circle cx="385.4" cy="259.4" r="5.9"/>
<circle cx="387.9" cy="259.2" r="5.9"/>
<circle cx="390.5" cy="259.5" r="5.9"/>
<circle cx="394.1" cy="259.6" r="5.9"/>
<circle cx="396.9" cy="259.5" r="5.9"/>
<circle cx="399" cy="259.4" r="5.9"/>
<circle cx="402.2" cy="259.6" r="5.9"/>
<circle cx="405.5" cy="259.5" r="5.9"/>
<circle cx="408.4" cy="258.9" r="5.9"/>
<circle cx="411.3" cy="258.8" r="5.9"/>
<circle cx="414.2" cy="259.6" r="5.9"/>
<circle cx="416.5" cy="259.6" r="5.9"/>
<circle cx="419.6" cy="259.1" r="5.9"/>
<circle cx="348.8" cy="263.5" r="5.9"/>
<circle cx="352.2" cy="263.5" r="5.9"/>
<circle cx="356.5" cy="264" r="5.9"/>
<circle cx="361.1" cy="263.5" r="5.9"/>
<circle cx="364.9" cy="263.6" r="5.9"/>
<circle cx="369.2" cy="263.7" r="5.9"/>
<circle cx="328.7" cy="273.5" r="5.9"/>
<circle cx="331.1" cy="273.5" r="5.9"/>
<circle cx="333.5" cy="273.6" r="5.9"/>
<circle cx="335" cy="273.8" r="5.9"/>
<circle cx="338" cy="273.7" r="5.9"/>
<circle cx="340.3" cy="273.9" r="5.9"/>
<circle cx="342.4" cy="273.9" r="5.9"/>
<circle cx="344.7" cy="274.1" r="5.9"/>
<circle cx="346.8" cy="274.3" r="5.9"/>
<circle cx="349.8" cy="274.1" r="5.9"/>
<circle cx="352.4" cy="274" r="5.9"/>
<circle cx="354.4" cy="273.4" r="5.9"/>
<circle cx="357.1" cy="273.7" r="5.9"/>
<circle cx="359.1" cy="274.2" r="5.9"/>
<circle cx="361.9" cy="273.7" r="5.9"/>
<circle cx="363.9" cy="273.8" r="5.9"/>
<circle cx="366.4" cy="273.7" r="5.9"/>
<circle cx="368.5" cy="273.8" r="5.9"/>
<circle cx="329.9" cy="269.6" r="5.9"/>
<circle cx="335.3" cy="269.5" r="5.9"/>
<circle cx="340.1" cy="269.5" r="5.9"/>
<circle cx="345.2" cy="269.2" r="5.9"/>
<circle cx="351" cy="269.5" r="5.9"/>
<circle cx="330.9" cy="278.3" r="5.9"/>
<circle cx="335.8" cy="278" r="5.9"/>
<circle cx="340.9" cy="278.7" r="5.9"/>
<circle cx="346.3" cy="278" r="5.9"/>
<circle cx="350.7" cy="278.3" r="5.9"/>
<circle cx="356.3" cy="278.1" r="5.9"/>
<circle cx="361.6" cy="278.6" r="5.9"/>
<circle cx="417.7" cy="258.1" r="5.9"/>
<circle cx="457.2" cy="259.5" r="5.9"/>
<circle cx="457.2" cy="266.3" r="5.9"/>
<circle cx="457.2" cy="274.4" r="5.9"/>
<circle cx="457.2" cy="282.6" r="5.9"/>
<circle cx="440.8" cy="298.2" r="5.9"/>
<circle cx="451.7" cy="292.1" r="5.9"/>
<circle cx="470.1" cy="280.6" r="5.9"/>
<circle cx="489.1" cy="289.4" r="5.9"/>
<circle cx="506.1" cy="289.4" r="5.9"/>
<circle cx="542.2" cy="287.4" r="5.9"/>
<circle cx="553.7" cy="289.4" r="5.9"/>
<circle cx="553.7" cy="300.3" r="5.9"/>
<circle cx="556.4" cy="311.8" r="5.9"/>
<circle cx="537.4" cy="293.5" r="5.9"/>
<circle cx="541.5" cy="296.2" r="5.9"/>
<circle cx="548.3" cy="293.5" r="5.9"/>
<circle cx="415.2" cy="272.8" r="5.9"/>
<circle cx="417.4" cy="272.7" r="5.9"/>
<circle cx="420.2" cy="273.4" r="5.9"/>
<circle cx="423.5" cy="273.1" r="5.9"/>
<circle cx="425.8" cy="273.9" r="5.9"/>
<circle cx="428.3" cy="274.1" r="5.9"/>
<circle cx="431.3" cy="273.8" r="5.9"/>
<circle cx="434.2" cy="273.7" r="5.9"/>
<circle cx="437" cy="274.7" r="5.9"/>
<circle cx="439.1" cy="274.5" r="5.9"/>
<circle cx="441.8" cy="275.3" r="5.9"/>
<circle cx="444.9" cy="274.5" r="5.9"/>
<circle cx="447.4" cy="275.5" r="5.9"/>
<circle cx="435.4" cy="285.6" r="5.9"/>
<circle cx="440.7" cy="285.9" r="5.9"/>
<circle cx="445.7" cy="285.8" r="5.9"/>
<circle cx="451.1" cy="285.4" r="5.9"/>
<circle cx="456" cy="285.3" r="5.9"/>
<circle cx="433" cy="279.9" r="5.9"/>
<circle cx="438.6" cy="280.6" r="5.9"/>
<circle cx="443.5" cy="280.5" r="5.9"/>
<circle cx="448.7" cy="281.4" r="5.9"/>
<circle cx="460.1" cy="298.9" r="5.9"/>
<circle cx="462.5" cy="298.9" r="5.9"/>
<circle cx="464.6" cy="299.2" r="5.9"/>
<circle cx="467.2" cy="299.4" r="5.9"/>
<circle cx="470" cy="299.4" r="5.9"/>
<circle cx="472.2" cy="300.1" r="5.9"/>
<circle cx="475.1" cy="299.8" r="5.9"/>
<circle cx="477.4" cy="300.4" r="5.9"/>
<circle cx="479.9" cy="300.3" r="5.9"/>
<circle cx="482.5" cy="301.1" r="5.9"/>
<circle cx="485.1" cy="301.1" r="5.9"/>
<circle cx="487.8" cy="301.4" r="5.9"/>
<circle cx="490" cy="301" r="5.9"/>
<circle cx="492.5" cy="301.8" r="5.9"/>
<circle cx="495.4" cy="302.1" r="5.9"/>
<circle cx="497.6" cy="302.2" r="5.9"/>
<circle cx="500.2" cy="302.3" r="5.9"/>
<circle cx="502.4" cy="302.2" r="5.9"/>
<circle cx="505.1" cy="302.2" r="5.9"/>
<circle cx="507.5" cy="302.9" r="5.9"/>
<circle cx="510.1" cy="302.7" r="5.9"/>
<circle cx="472.1" cy="302.7" r="5.9"/>
<circle cx="474.2" cy="302.6" r="5.9"/>
<circle cx="475.9" cy="303.1" r="5.9"/>
<circle cx="477.5" cy="303.2" r="5.9"/>
<circle cx="479.6" cy="303" r="5.9"/>
<circle cx="481.4" cy="303" r="5.9"/>
<circle cx="483.5" cy="303" r="5.9"/>
<circle cx="485.9" cy="303" r="5.9"/>
<circle cx="487.8" cy="303.4" r="5.9"/>
<circle cx="489.4" cy="302.8" r="5.9"/>
<circle cx="491.1" cy="303.2" r="5.9"/>
<circle cx="493.8" cy="303.1" r="5.9"/>
<circle cx="495.5" cy="303.4" r="5.9"/>
<circle cx="497.4" cy="303.4" r="5.9"/>
<circle cx="499.6" cy="303" r="5.9"/>
<circle cx="500.8" cy="303" r="5.9"/>
<circle cx="502.8" cy="303.4" r="5.9"/>
<circle cx="505.1" cy="303.1" r="5.9"/>
<circle cx="507.2" cy="303.5" r="5.9"/>
<circle cx="508.7" cy="303.4" r="5.9"/>
<circle cx="511.1" cy="303" r="5.9"/>
<circle cx="513.1" cy="303.7" r="5.9"/>
<circle cx="514.4" cy="303" r="5.9"/>
<circle cx="516.5" cy="303.5" r="5.9"/>
<circle cx="519" cy="303.3" r="5.9"/>
<circle cx="520.7" cy="303.1" r="5.9"/>
<circle cx="522.7" cy="303.5" r="5.9"/>
<circle cx="524.1" cy="303.7" r="5.9"/>
<circle cx="526.7" cy="303.6" r="5.9"/>
<circle cx="528" cy="303.9" r="5.9"/>
<circle cx="530.5" cy="303.4" r="5.9"/>
<circle cx="532.1" cy="303.4" r="5.9"/>
<circle cx="534.1" cy="303.4" r="5.9"/>
<circle cx="536.4" cy="303.8" r="5.9"/>
<circle cx="537.7" cy="304" r="5.9"/>
<circle cx="540.1" cy="303.9" r="5.9"/>
<circle cx="542.1" cy="303.6" r="5.9"/>
<circle cx="544" cy="304" r="5.9"/>
<circle cx="545.6" cy="303.9" r="5.9"/>
<circle cx="547.7" cy="303.6" r="5.9"/>
<circle cx="549.6" cy="303.9" r="5.9"/>
<circle cx="510" cy="299.2" r="5.9"/>
<circle cx="514.4" cy="298.7" r="5.9"/>
<circle cx="518.4" cy="299" r="5.9"/>
<circle cx="522" cy="299.4" r="5.9"/>
<circle cx="525.9" cy="299.1" r="5.9"/>
<circle cx="530.2" cy="299.3" r="5.9"/>
<circle cx="533.6" cy="300" r="5.9"/>
<circle cx="537.7" cy="300.2" r="5.9"/>
<circle cx="541.9" cy="299.8" r="5.9"/>
<circle cx="545.3" cy="300.5" r="5.9"/>
<circle cx="549.3" cy="300.5" r="5.9"/>
</g>
<g fill="none" stroke="#c8c8c8" stroke-width="1">
<rect x="10.5" y="22.5" width="1031" height="565"/>
<rect x="10.5" y="627.5" width="1031" height="172"/>
</g>
<defs><filter id="nf" x="0" y="0" width="1103" height="807" filterUnits="userSpaceOnUse"><feOffset dx="0" dy="0"/></filter></defs>
<g filter="url(#nf)">
<g fill="none" stroke-width="1" shape-rendering="auto">
<path d="M26.3 588 l2.7 4.6 l2.7 -4.6" stroke="#a0a0a0"/>
<path d="M85.3 588 l2.7 4.6 l2.7 -4.6" stroke="#a0a0a0"/>
<path d="M97.3 588 l2.7 4.6 l2.7 -4.6" stroke="#a0a0a0"/>
<path d="M139.3 588 l2.7 4.6 l2.7 -4.6" stroke="#a0a0a0"/>
<path d="M153.3 588 l2.7 4.6 l2.7 -4.6" stroke="#a0a0a0"/>
<path d="M177.3 588 l2.7 4.6 l2.7 -4.6" stroke="#a0a0a0"/>
<path d="M212.3 588 l2.7 4.6 l2.7 -4.6" stroke="#a0a0a0"/>
<path d="M227.3 588 l2.7 4.6 l2.7 -4.6" stroke="#a0a0a0"/>
<path d="M267.3 588 l2.7 4.6 l2.7 -4.6" stroke="#a0a0a0"/>
<path d="M273.3 588 l2.7 4.6 l2.7 -4.6" stroke="#a0a0a0"/>
<path d="M287.3 588 l2.7 4.6 l2.7 -4.6" stroke="#a0a0a0"/>
<path d="M295.9 588 l2.7 4.6 l2.7 -4.6" stroke="#a0a0a0"/>
<path d="M333.8 588 l2.7 4.6 l2.7 -4.6" stroke="#a0a0a0"/>
<path d="M339.3 588 l2.7 4.6 l2.7 -4.6" stroke="#a0a0a0"/>
<path d="M351.3 588 l2.7 4.6 l2.7 -4.6" stroke="#a0a0a0"/>
<path d="M359.0 588 l2.7 4.6 l2.7 -4.6" stroke="#a0a0a0"/>
<path d="M376.9 588 l2.7 4.6 l2.7 -4.6" stroke="#a0a0a0"/>
<path d="M384.3 588 l2.7 4.6 l2.7 -4.6" stroke="#a0a0a0"/>
<path d="M397.7 588 l2.7 4.6 l2.7 -4.6" stroke="#a0a0a0"/>
<path d="M416.1 588 l2.7 4.6 l2.7 -4.6" stroke="#a0a0a0"/>
<path d="M449.7 588 l2.7 4.6 l2.7 -4.6" stroke="#a0a0a0"/>
<path d="M462.1 588 l2.7 4.6 l2.7 -4.6" stroke="#a0a0a0"/>
<path d="M470.8 588 l2.7 4.6 l2.7 -4.6" stroke="#a0a0a0"/>
<path d="M483.3 588 l2.7 4.6 l2.7 -4.6" stroke="#a0a0a0"/>
<path d="M497.7 588 l2.7 4.6 l2.7 -4.6" stroke="#a0a0a0"/>
<path d="M501.7 588 l2.7 4.6 l2.7 -4.6" stroke="#a0a0a0"/>
<path d="M514.3 588 l2.7 4.6 l2.7 -4.6" stroke="#a0a0a0"/>
<path d="M526.9 588 l2.7 4.6 l2.7 -4.6" stroke="#a0a0a0"/>
<path d="M535.3 588 l2.7 4.6 l2.7 -4.6" stroke="#a0a0a0"/>
<path d="M554.7 588 l2.7 4.6 l2.7 -4.6" stroke="#a0a0a0"/>
<path d="M587.3 588 l2.7 4.6 l2.7 -4.6" stroke="#a0a0a0"/>
<path d="M637.3 588 l2.7 4.6 l2.7 -4.6" stroke="#a0a0a0"/>
<path d="M676.1 588 l2.7 4.6 l2.7 -4.6" stroke="#a0a0a0"/>
<path d="M693.3 588 l2.7 4.6 l2.7 -4.6" stroke="#a0a0a0"/>
<path d="M801.3 588 l2.7 4.6 l2.7 -4.6" stroke="#a0a0a0"/>
<path d="M905.3 588 l2.7 4.6 l2.7 -4.6" stroke="#a0a0a0"/>
<path d="M1026.9 588 l2.7 4.6 l2.7 -4.6" stroke="#a0a0a0"/>
<path d="M1030.9 588 l2.7 4.6 l2.7 -4.6" stroke="#a0a0a0"/>
<path d="M58.3 588 l2.7 4.6 l2.7 -4.6" stroke="#f4f4f4" stroke-width="1.3"/>
<path d="M128.3 588 l2.7 4.6 l2.7 -4.6" stroke="#f4f4f4" stroke-width="1.3"/>
<path d="M192.3 588 l2.7 4.6 l2.7 -4.6" stroke="#f4f4f4" stroke-width="1.3"/>
<path d="M260.3 588 l2.7 4.6 l2.7 -4.6" stroke="#f4f4f4" stroke-width="1.3"/>
<path d="M316.3 588 l2.7 4.6 l2.7 -4.6" stroke="#f4f4f4" stroke-width="1.3"/>
<path d="M369.8 588 l2.7 4.6 l2.7 -4.6" stroke="#f4f4f4" stroke-width="1.3"/>
<path d="M439.6 588 l2.7 4.6 l2.7 -4.6" stroke="#f4f4f4" stroke-width="1.3"/>
<path d="M493.7 588 l2.7 4.6 l2.7 -4.6" stroke="#f4f4f4" stroke-width="1.3"/>
<path d="M545.3 588 l2.7 4.6 l2.7 -4.6" stroke="#f4f4f4" stroke-width="1.3"/>
<path d="M609.7 588 l2.7 4.6 l2.7 -4.6" stroke="#f4f4f4" stroke-width="1.3"/>
<path d="M669.3 588 l2.7 4.6 l2.7 -4.6" stroke="#f4f4f4" stroke-width="1.3"/>
<path d="M761.1 588 l2.7 4.6 l2.7 -4.6" stroke="#f4f4f4" stroke-width="1.3"/>
<path d="M875.3 588 l2.7 4.6 l2.7 -4.6" stroke="#f4f4f4" stroke-width="1.3"/>
<path d="M989.3 588 l2.7 4.6 l2.7 -4.6" stroke="#f4f4f4" stroke-width="1.3"/>
</g>
<g text-anchor="middle" class="xs">
<text x="10.8" y="603">0</text>
<text x="124.0" y="603">1000</text>
<text x="237.2" y="603">2000</text>
<text x="350.4" y="603">3000</text>
<text x="463.6" y="603">4000</text>
<text x="576.8" y="603">5000</text>
<text x="690.0" y="603">6000</text>
<text x="803.2" y="603">7000</text>
<text x="916.4" y="603">8000</text>
<text x="1029.6" y="603">9000</text>
<text x="60.4" y="615">09:31:02</text>
<text x="130.4" y="615">09:31:05</text>
<text x="194.4" y="615">09:31:09</text>
<text x="262.4" y="615">09:31:12</text>
<text x="318.4" y="615">09:31:17</text>
<text x="371.9" y="615">09:31:22</text>
<text x="441.7" y="615">09:31:27</text>
<text x="495.8" y="615">09:31:32</text>
<text x="547.4" y="615">09:31:38</text>
<text x="611.8" y="615">09:31:41</text>
<text x="671.4" y="615">09:31:43</text>
<text x="763.2" y="615">09:31:46</text>
<text x="877.4" y="615">09:31:48</text>
<text x="991.4" y="615">09:31:50</text>
</g>
<g class="ys">
<text x="1056.5" y="26.4">85.00</text>
<text x="1056.5" y="82.9">84.80</text>
<text x="1056.5" y="139.4">84.60</text>
<text x="1056.5" y="195.9">84.40</text>
<text x="1056.5" y="252.4">84.20</text>
<text x="1056.5" y="308.9">84.00</text>
<text x="1056.5" y="365.4">83.80</text>
<text x="1056.5" y="421.9">83.60</text>
<text x="1056.5" y="478.4">83.40</text>
<text x="1056.5" y="534.9">83.20</text>
<text x="1056.5" y="591.4">83.00</text>
</g>
<text x="9.5" y="15" xml:space="preserve" textLength="596" lengthAdjust="spacing" style="font-size:10.8px">Prices for  eBRK.B  on  08/01/2012  -  Elapsed Time: 56 Seconds, 750 Milliseconds  -  Total Quotes: 8,003  Total Trades: 962</text>
<text x="1041.5" y="15" text-anchor="end" style="font-size:10.7px">QTSequencer G3</text>
<g>
<text x="14.5" y="645">ColorLgnd</text>
<text x="14.5" y="659">Bid</text>
<text x="38.7" y="659">Ask</text>
<text x="82.5" y="659">Exg</text>
<text x="147.5" y="645">Reporting Exg Stats</text>
<text x="153.2" y="659"># Quotes</text>
<text x="212" y="659"># Trades</text>
<text x="289.5" y="645">Composite/NBBO</text>
<rect x="17" y="664" width="10" height="8" fill="#1890f0"/>
<rect x="41" y="664" width="10" height="8" fill="#ff9900"/>
<text x="84.5" y="671">NSDQ</text>
<text x="194" y="671" text-anchor="end">613</text>
<text x="254" y="671" text-anchor="end">162</text>
<rect x="17" y="676" width="10" height="8" fill="#98fb98"/>
<rect x="41" y="676" width="10" height="8" fill="#ff9999"/>
<text x="84.5" y="683">NYSE</text>
<text x="194" y="683" text-anchor="end">1,034</text>
<text x="254" y="683" text-anchor="end">480</text>
<rect x="17" y="688" width="10" height="8" fill="#66cc66"/>
<rect x="41" y="688" width="10" height="8" fill="#cc6666"/>
<text x="84.5" y="695">BOST</text>
<text x="194" y="695" text-anchor="end">1,667</text>
<text x="254" y="695" text-anchor="end">10</text>
<rect x="17" y="700" width="10" height="8" fill="#00ffff"/>
<rect x="41" y="700" width="10" height="8" fill="#ffff00"/>
<text x="84.5" y="707">PACF</text>
<text x="194" y="707" text-anchor="end">1,056</text>
<text x="254" y="707" text-anchor="end">163</text>
<rect x="17" y="712" width="10" height="8" fill="#66ccff"/>
<rect x="41" y="712" width="10" height="8" fill="#ffcc66"/>
<text x="84.5" y="719">BATS</text>
<text x="194" y="719" text-anchor="end">515</text>
<text x="254" y="719" text-anchor="end">67</text>
<rect x="17" y="724" width="10" height="8" fill="#006699"/>
<rect x="41" y="724" width="10" height="8" fill="#aa7700"/>
<text x="84.5" y="731">CINC</text>
<text x="194" y="731" text-anchor="end">18</text>
<text x="254" y="731" text-anchor="end">10</text>
<rect x="17" y="736" width="10" height="8" fill="#004499"/>
<rect x="41" y="736" width="10" height="8" fill="#aa6600"/>
<text x="84.5" y="743">CBOE</text>
<text x="194" y="743" text-anchor="end">449</text>
<text x="254" y="743" text-anchor="end">0</text>
<rect x="17" y="748" width="10" height="8" fill="#339944"/>
<rect x="41" y="748" width="10" height="8" fill="#994433"/>
<text x="84.5" y="755">EDGX</text>
<text x="194" y="755" text-anchor="end">218</text>
<text x="254" y="755" text-anchor="end">57</text>
<rect x="17" y="760" width="10" height="8" fill="#44aa55"/>
<rect x="41" y="760" width="10" height="8" fill="#aa5544"/>
<text x="84.5" y="767">EDGE</text>
<text x="194" y="767" text-anchor="end">16</text>
<text x="254" y="767" text-anchor="end">2</text>
<rect x="17" y="772" width="10" height="8" fill="#3377bb"/>
<rect x="41" y="772" width="10" height="8" fill="#dd3300"/>
<text x="84.5" y="779">BATY</text>
<text x="194" y="779" text-anchor="end">1,371</text>
<text x="254" y="779" text-anchor="end">11</text>
<rect x="17" y="784" width="10" height="8" fill="#669933"/>
<rect x="41" y="784" width="10" height="8" fill="#993366"/>
<text x="84.5" y="791">PHIL</text>
<text x="194" y="791" text-anchor="end">1,046</text>
<text x="254" y="791" text-anchor="end">0</text>
<text x="300" y="669">Composite Trades</text>
<text x="300" y="681">National Best Bid</text>
<text x="300" y="693">National Best Ask</text>
<g shape-rendering="auto"><ellipse cx="290" cy="665" rx="3.6" ry="4.6" fill="#c0c0c0" stroke="#ffffff" stroke-width="1"/>
<ellipse cx="290" cy="677" rx="4" ry="3" fill="#00ff00"/>
<ellipse cx="290" cy="689" rx="4" ry="3" fill="#ff0000"/></g>
<text x="802" y="794.5" style="font-size:11.1px">For additional information: www.nanex.net</text>
</g>
</g>
</svg>
</body></html>
